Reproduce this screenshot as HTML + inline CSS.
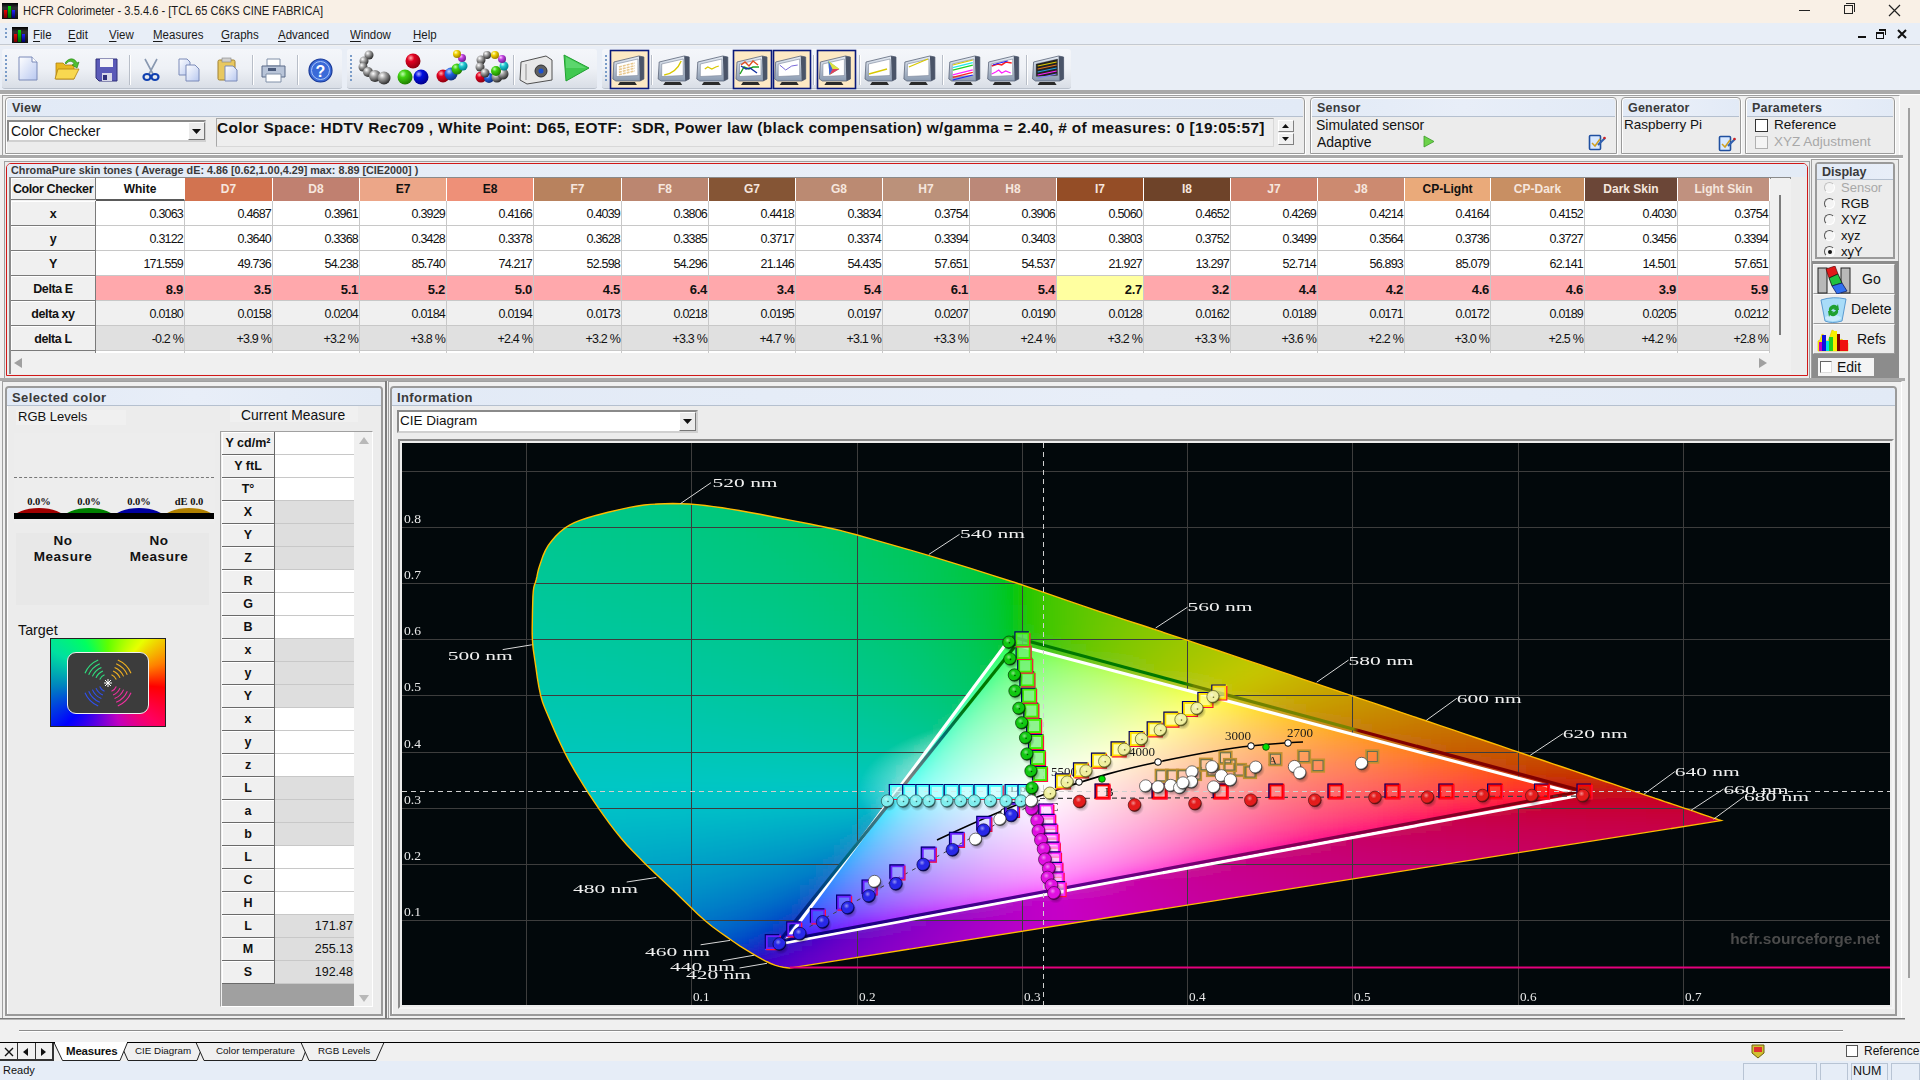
<!DOCTYPE html><html><head><meta charset="utf-8"><title>HCFR Colorimeter</title><style>
*{margin:0;padding:0;box-sizing:border-box}
html,body{width:1920px;height:1080px;overflow:hidden;background:#f0f0f0;font-family:"Liberation Sans",sans-serif;font-size:12px;color:#000;position:relative}
.a{position:absolute;white-space:nowrap}
.hdr{position:absolute;background:linear-gradient(#e4ecf7,#dfe8f5);border-bottom:1px solid #c9d3e0;font-weight:bold;color:#3c3c3c;font-size:12px;padding-left:6px;line-height:18px}
.grp{position:absolute;border:2px solid #a8a8a8;background:#ececec}
.cb{position:absolute;width:12px;height:12px;border:1px solid #333;background:#fff}
.tb td{border-right:1px solid #c8c8c8;border-bottom:1px solid #c8c8c8}
</style></head><body><div class="a" style="left:0;top:0;width:1920px;height:23px;background:#f9f0e6"></div><div class="a" style="left:2px;top:3px;width:16px;height:16px;background:linear-gradient(#000 0%,#333 30%,#111 100%)"><div class="a" style="left:2px;bottom:1px;width:3px;height:8px;background:linear-gradient(#e00,#700)"></div><div class="a" style="left:6px;bottom:1px;width:3px;height:12px;background:linear-gradient(#0d0,#060)"></div><div class="a" style="left:10px;bottom:1px;width:3px;height:8px;background:linear-gradient(#22f,#006)"></div></div><div class="a" style="left:23px;top:4px;font-size:12.5px;color:#1a1a1a;transform:scaleX(0.89);transform-origin:0 0">HCFR Colorimeter - 3.5.4.6 - [TCL 65 C6KS CINE FABRICA]</div><div class="a" style="left:1799px;top:10px;width:11px;height:1px;background:#222"></div><div class="a" style="left:1844px;top:5px;width:9px;height:9px;border:1px solid #222"></div><div class="a" style="left:1846px;top:3px;width:9px;height:9px;border-top:1px solid #222;border-right:1px solid #222"></div><svg class="a" style="left:1888px;top:4px" width="13" height="13"><path d="M1 1L12 12M12 1L1 12" stroke="#222" stroke-width="1.2"/></svg><div class="a" style="left:0;top:23px;width:1920px;height:22px;background:#e8eef7;border-bottom:1px solid #c4c9d0"></div><div class="a" style="left:5px;top:28px;width:2px;height:12px;background:repeating-linear-gradient(#7a9cc8 0 2px,transparent 2px 4px)"></div><div class="a" style="left:12px;top:27px;width:16px;height:16px;background:linear-gradient(#000 0%,#333 30%,#111 100%)"><div class="a" style="left:2px;bottom:1px;width:3px;height:8px;background:linear-gradient(#e00,#700)"></div><div class="a" style="left:6px;bottom:1px;width:3px;height:12px;background:linear-gradient(#0d0,#060)"></div><div class="a" style="left:10px;bottom:1px;width:3px;height:8px;background:linear-gradient(#22f,#006)"></div></div><div class="a" style="left:33px;top:28px;font-size:12.5px;color:#1a1a1a;transform:scaleX(0.92);transform-origin:0 0"><u style="text-decoration-thickness:1px;text-underline-offset:2px">F</u>ile</div><div class="a" style="left:68px;top:28px;font-size:12.5px;color:#1a1a1a;transform:scaleX(0.92);transform-origin:0 0"><u style="text-decoration-thickness:1px;text-underline-offset:2px">E</u>dit</div><div class="a" style="left:109px;top:28px;font-size:12.5px;color:#1a1a1a;transform:scaleX(0.92);transform-origin:0 0"><u style="text-decoration-thickness:1px;text-underline-offset:2px">V</u>iew</div><div class="a" style="left:153px;top:28px;font-size:12.5px;color:#1a1a1a;transform:scaleX(0.92);transform-origin:0 0"><u style="text-decoration-thickness:1px;text-underline-offset:2px">M</u>easures</div><div class="a" style="left:221px;top:28px;font-size:12.5px;color:#1a1a1a;transform:scaleX(0.92);transform-origin:0 0"><u style="text-decoration-thickness:1px;text-underline-offset:2px">G</u>raphs</div><div class="a" style="left:278px;top:28px;font-size:12.5px;color:#1a1a1a;transform:scaleX(0.92);transform-origin:0 0"><u style="text-decoration-thickness:1px;text-underline-offset:2px">A</u>dvanced</div><div class="a" style="left:350px;top:28px;font-size:12.5px;color:#1a1a1a;transform:scaleX(0.92);transform-origin:0 0"><u style="text-decoration-thickness:1px;text-underline-offset:2px">W</u>indow</div><div class="a" style="left:413px;top:28px;font-size:12.5px;color:#1a1a1a;transform:scaleX(0.92);transform-origin:0 0"><u style="text-decoration-thickness:1px;text-underline-offset:2px">H</u>elp</div><div class="a" style="left:1858px;top:36px;width:8px;height:2px;background:#111"></div><div class="a" style="left:1876px;top:32px;width:8px;height:7px;border:1px solid #111;border-top-width:2px"></div><div class="a" style="left:1879px;top:29px;width:7px;height:6px;border-top:2px solid #111;border-right:1px solid #111"></div><svg class="a" style="left:1897px;top:29px" width="10" height="10"><path d="M1 1L9 9M9 1L1 9" stroke="#111" stroke-width="2"/></svg><div class="a" style="left:0;top:46px;width:1920px;height:45px;background:#e9eef6"></div><div class="a" style="left:2px;top:49px;width:340px;height:40px;border-radius:3px;background:linear-gradient(#f4f6fa 0%,#eef1f6 50%,#d9dee6 100%);border-bottom:1px solid #b9c0cb"></div><div class="a" style="left:5px;top:55px;width:2px;height:28px;background:repeating-linear-gradient(#7a9cc8 0 2px,transparent 2px 4px)"></div><div class="a" style="left:347px;top:49px;width:250px;height:40px;border-radius:3px;background:linear-gradient(#f4f6fa 0%,#eef1f6 50%,#d9dee6 100%);border-bottom:1px solid #b9c0cb"></div><div class="a" style="left:350px;top:55px;width:2px;height:28px;background:repeating-linear-gradient(#7a9cc8 0 2px,transparent 2px 4px)"></div><div class="a" style="left:602px;top:49px;width:469px;height:40px;border-radius:3px;background:linear-gradient(#f4f6fa 0%,#eef1f6 50%,#d9dee6 100%);border-bottom:1px solid #b9c0cb"></div><div class="a" style="left:605px;top:55px;width:2px;height:28px;background:repeating-linear-gradient(#7a9cc8 0 2px,transparent 2px 4px)"></div><div class="a" style="left:0;top:90px;width:1920px;height:4px;background:#a9a9a9"></div><div class="a" style="left:0;top:94px;width:1920px;height:1px;background:#fff"></div><svg class="a" style="left:0;top:44px" width="1100" height="50" viewBox="0 44 1100 50"><defs><linearGradient id="tdoc" x1="0" y1="0" x2="1" y2="1"><stop offset="0" stop-color="#ffffff"/><stop offset="1" stop-color="#b8c8f0"/></linearGradient><linearGradient id="tbez" x1="0" y1="0" x2="0" y2="1"><stop offset="0" stop-color="#e8eef6"/><stop offset="1" stop-color="#8a9ab0"/></linearGradient><radialGradient id="bR" cx="0.35" cy="0.3" r="0.7"><stop offset="0" stop-color="#ffb0b0"/><stop offset="0.35" stop-color="#e00020"/><stop offset="1" stop-color="#900010"/></radialGradient><radialGradient id="bG" cx="0.35" cy="0.3" r="0.7"><stop offset="0" stop-color="#c0ffb0"/><stop offset="0.35" stop-color="#40d010"/><stop offset="1" stop-color="#208000"/></radialGradient><radialGradient id="bB" cx="0.35" cy="0.3" r="0.7"><stop offset="0" stop-color="#b0b0ff"/><stop offset="0.35" stop-color="#0010e0"/><stop offset="1" stop-color="#000090"/></radialGradient><radialGradient id="bK" cx="0.35" cy="0.3" r="0.7"><stop offset="0" stop-color="#ffffff"/><stop offset="0.4" stop-color="#a0a0a0"/><stop offset="1" stop-color="#303030"/></radialGradient><radialGradient id="bY" cx="0.35" cy="0.3" r="0.7"><stop offset="0" stop-color="#ffffc0"/><stop offset="0.4" stop-color="#f0d000"/><stop offset="1" stop-color="#a08000"/></radialGradient><radialGradient id="bM" cx="0.35" cy="0.3" r="0.7"><stop offset="0" stop-color="#ffd0ff"/><stop offset="0.4" stop-color="#c040e0"/><stop offset="1" stop-color="#702090"/></radialGradient><radialGradient id="bC" cx="0.35" cy="0.3" r="0.7"><stop offset="0" stop-color="#d0ffff"/><stop offset="0.4" stop-color="#20c8d0"/><stop offset="1" stop-color="#008090"/></radialGradient><radialGradient id="bBl" cx="0.35" cy="0.3" r="0.7"><stop offset="0" stop-color="#c0d8ff"/><stop offset="0.4" stop-color="#2060e0"/><stop offset="1" stop-color="#103080"/></radialGradient><g id="mon"><path d="M1 9L26 3L31 4V26L27 28H3L0 26Z" fill="url(#tbez)" stroke="#5a6478" stroke-width="0.8"/><path d="M3.5 11L25 6V22.5L3.5 23.5Z" fill="#ffffff" stroke="#7a8498" stroke-width="0.6"/><path d="M26 3L31 4V26L27 28Z" fill="#4a5468"/><path d="M7 29H22L24 32H5Z" fill="#2a2a2a"/></g></defs><rect x="610.5" y="50.5" width="38" height="38" fill="#fde9c4" stroke="#0a1a7a" stroke-width="1.6"/><rect x="733.5" y="50.5" width="38" height="38" fill="#fde9c4" stroke="#0a1a7a" stroke-width="1.6"/><rect x="773.5" y="50.5" width="37" height="38" fill="#fde9c4" stroke="#0a1a7a" stroke-width="1.6"/><rect x="817.5" y="50.5" width="38" height="38" fill="#fde9c4" stroke="#0a1a7a" stroke-width="1.6"/><path d="M129.5 55V85" stroke="#b8bec8" stroke-width="1"/><path d="M130.5 55V85" stroke="#ffffff" stroke-width="1"/><path d="M252.5 55V85" stroke="#b8bec8" stroke-width="1"/><path d="M253.5 55V85" stroke="#ffffff" stroke-width="1"/><path d="M297.5 55V85" stroke="#b8bec8" stroke-width="1"/><path d="M298.5 55V85" stroke="#ffffff" stroke-width="1"/><path d="M513.5 55V85" stroke="#b8bec8" stroke-width="1"/><path d="M514.5 55V85" stroke="#ffffff" stroke-width="1"/><path d="M651.5 55V85" stroke="#b8bec8" stroke-width="1"/><path d="M652.5 55V85" stroke="#ffffff" stroke-width="1"/><path d="M813.5 55V85" stroke="#b8bec8" stroke-width="1"/><path d="M814.5 55V85" stroke="#ffffff" stroke-width="1"/><path d="M859.5 55V85" stroke="#b8bec8" stroke-width="1"/><path d="M860.5 55V85" stroke="#ffffff" stroke-width="1"/><path d="M942.5 55V85" stroke="#b8bec8" stroke-width="1"/><path d="M943.5 55V85" stroke="#ffffff" stroke-width="1"/><path d="M1026.5 55V85" stroke="#b8bec8" stroke-width="1"/><path d="M1027.5 55V85" stroke="#ffffff" stroke-width="1"/><path d="M19 57H32L37 62V80H19Z" fill="url(#tdoc)" stroke="#7a8ab8" stroke-width="1"/><path d="M32 57V62H37" fill="#fff" stroke="#7a8ab8"/><path d="M56 63H63L65 65H74V79H56Z" fill="#e8b820" stroke="#b08010" stroke-width="0.8"/><path d="M58 69H79L74 79H55Z" fill="#f8d850" stroke="#b08010" stroke-width="0.8"/><path d="M65 63C69 57 75 58 77 63L79 62L77 68L72 65L74 64C73 61 69 60 66 64Z" fill="#50c030" stroke="#208010" stroke-width="0.6"/><path d="M96 59H117V81H99L96 78Z" fill="#5a5ab8" stroke="#30307a" stroke-width="1"/><rect x="100" y="59" width="13" height="8" fill="#f4f4f8"/><rect x="102" y="73" width="10" height="8" fill="#d8d8e8"/><rect x="103" y="75" width="4" height="5" fill="#30307a"/><path d="M145 59L153 74M157 59L149 74" stroke="#8898b0" stroke-width="1.6"/><ellipse cx="147" cy="77" rx="3.5" ry="3" fill="none" stroke="#1040b0" stroke-width="2.2"/><ellipse cx="155" cy="77" rx="3.5" ry="3" fill="none" stroke="#1040b0" stroke-width="2.2"/><path d="M179 59H187L190 62V75H179Z" fill="url(#tdoc)" stroke="#7a8ab8"/><path d="M186 65H195L199 69V81H186Z" fill="url(#tdoc)" stroke="#7a8ab8"/><rect x="218" y="60" width="17" height="20" rx="1.5" fill="#e8c860" stroke="#a08030"/><rect x="222" y="58" width="9" height="4" fill="#d0d0d0" stroke="#808080" stroke-width="0.6"/><path d="M225 66H233L237 70V81H225Z" fill="url(#tdoc)" stroke="#7a8ab8"/><path d="M267 59H280V66H267Z" fill="#fff" stroke="#8090a8"/><path d="M262 66H285V77H262Z" fill="#b8c4d8" stroke="#5a6a88"/><path d="M266 74H281V82H266Z" fill="#fff" stroke="#8090a8"/><rect x="268" y="68" width="8" height="3" fill="#4a5a7a"/><circle cx="320.5" cy="70.5" r="11.5" fill="#3a6ad8" stroke="#1a3a98" stroke-width="1.2"/><circle cx="320.5" cy="70.5" r="9" fill="none" stroke="#a8c4f8" stroke-width="1"/><text x="320.5" y="76.5" text-anchor="middle" font-family="Liberation Sans" font-weight="bold" font-size="16" fill="#fff">?</text><circle cx="369" cy="55" r="4.5" fill="url(#bK)"/><circle cx="364" cy="61" r="4.5" fill="url(#bK)"/><circle cx="363" cy="67" r="4.5" fill="url(#bK)"/><circle cx="368" cy="72" r="5" fill="url(#bK)"/><circle cx="375" cy="76" r="6" fill="url(#bK)"/><circle cx="384" cy="78" r="6.5" fill="url(#bK)"/><circle cx="413" cy="61" r="7.5" fill="url(#bR)"/><circle cx="405" cy="77" r="7.5" fill="url(#bG)"/><circle cx="421" cy="77" r="7.5" fill="url(#bB)"/><circle cx="443" cy="76" r="6.5" fill="url(#bR)"/><circle cx="451" cy="74" r="6.5" fill="url(#bBl)"/><circle cx="457" cy="69" r="5.5" fill="url(#bG)"/><circle cx="463" cy="66" r="4.5" fill="url(#bC)"/><circle cx="462" cy="58" r="4" fill="url(#bM)"/><circle cx="457" cy="54" r="4" fill="url(#bY)"/><circle cx="481" cy="77" r="5.5" fill="url(#bR)"/><circle cx="489" cy="78" r="5" fill="url(#bBl)"/><circle cx="497" cy="77" r="5.5" fill="url(#bK)"/><circle cx="503" cy="74" r="5.5" fill="url(#bK)"/><circle cx="504" cy="66" r="4.5" fill="url(#bC)"/><circle cx="502" cy="59" r="4" fill="url(#bM)"/><circle cx="495" cy="55" r="4" fill="url(#bY)"/><circle cx="487" cy="55" r="4" fill="url(#bK)"/><circle cx="481" cy="60" r="4.5" fill="url(#bK)"/><circle cx="480" cy="67" r="4.5" fill="url(#bK)"/><circle cx="485" cy="73" r="4.5" fill="url(#bK)"/><circle cx="496" cy="71" r="5" fill="url(#bG)"/><path d="M521 62L546 56L552 60V80L527 84L520 80Z" fill="#e8e8e8" stroke="#505050" stroke-width="1"/><path d="M526 64V80" stroke="#909090"/><circle cx="541" cy="71" r="6" fill="#606060" stroke="#303030"/><circle cx="541" cy="71" r="2.5" fill="#1a50d0"/><path d="M564 55L589 68L566 81Z" fill="#40c850" stroke="#20a030" stroke-width="1"/><path d="M566 57L586 68L566 68Z" fill="#70e080" opacity="0.6"/><use href="#mon" x="612.9" y="53"/><path d="M618.9 67.0L634.9 63.0" stroke="#e8c890" stroke-width="1.6" stroke-dasharray="3 1"/><path d="M618.9 69.6L634.9 65.6" stroke="#e8c890" stroke-width="1.6" stroke-dasharray="3 1"/><path d="M618.9 72.2L634.9 68.2" stroke="#e8c890" stroke-width="1.6" stroke-dasharray="3 1"/><path d="M618.9 74.8L634.9 70.8" stroke="#e8c890" stroke-width="1.6" stroke-dasharray="3 1"/><use href="#mon" x="658.2" y="53"/><path d="M664.2 75Q676.2 73 681.2 61" stroke="#d8c800" stroke-width="1.4" fill="none"/><use href="#mon" x="696.8" y="53"/><path d="M704.8 69L707.8 67L711.8 69L715.8 67L718.8 66" stroke="#d8c800" stroke-width="1.3" fill="none"/><use href="#mon" x="736" y="53"/><path d="M741 65L745 62L749 66L753 61L758 65" stroke="#e05020" stroke-width="1.4" fill="none"/><path d="M740 74L744 67L749 69L753 67L759 67" stroke="#20a020" stroke-width="1.4" fill="none"/><path d="M741 66L746 69L750 68L757 73" stroke="#1030a0" stroke-width="1.4" fill="none"/><use href="#mon" x="774.7" y="53"/><path d="M779.7 65L785.7 70L791.7 66L797.7 65" stroke="#7a6ad8" stroke-width="1" fill="none"/><use href="#mon" x="819.4" y="53"/><path d="M828.4 61L839.4 69L829.4 75Z" fill="#60d060"/><path d="M828.4 61L839.4 69L832.4 69Z" fill="#e0e040"/><path d="M832.4 69L839.4 69L829.4 75Z" fill="#e04060"/><path d="M828.4 61L832.4 69L829.4 75Z" fill="#4060e0"/><use href="#mon" x="865" y="53"/><path d="M869 74L887 69" stroke="#d8c800" stroke-width="1.3"/><use href="#mon" x="903.9" y="53"/><path d="M908.9 67L927.9 59" stroke="#d8c800" stroke-width="1.3"/><use href="#mon" x="948.8" y="53"/><path d="M952.8 65.0L972.8 60.0" stroke="#d8c800" stroke-width="1.2"/><path d="M952.8 67.6L972.8 62.6" stroke="#20e8f0" stroke-width="1.2"/><path d="M952.8 70.2L972.8 65.2" stroke="#20d020" stroke-width="1.2"/><path d="M952.8 74.8L972.8 69.8" stroke="#ff20ff" stroke-width="1.2"/><path d="M952.8 77.4L972.8 72.4" stroke="#ff2020" stroke-width="1.2"/><path d="M952.8 80.0L972.8 75.0" stroke="#2020ff" stroke-width="1.2"/><use href="#mon" x="987.7" y="53"/><path d="M991.7 66L997.7 64L1001.7 65L1005.7 62L1011.7 63" stroke="#ff2020" stroke-width="1.6" fill="none"/><path d="M992.7 65L999.7 63L1007.7 61" stroke="#2020ff" stroke-width="1" fill="none"/><path d="M991.7 74L995.7 72L998.7 70L1001.7 73L1005.7 71L1010.7 73" stroke="#ff20ff" stroke-width="1.3" fill="none"/><use href="#mon" x="1032.6" y="53"/><path d="M3.5 11L25 6V22.5L3.5 23.5Z" transform="translate(1032.6 53)" fill="#222"/><path d="M1037.6 66L1056.6 62" stroke="#d8c800" stroke-width="1.2"/><path d="M1037.6 69L1056.6 65" stroke="#e07020" stroke-width="1.2"/><path d="M1037.6 72L1056.6 68" stroke="#20a0e0" stroke-width="1.2"/><path d="M1037.6 75L1056.6 71" stroke="#ff20ff" stroke-width="1.2"/><path d="M1037.6 78L1056.6 74" stroke="#8080ff" stroke-width="1.2"/></svg><div class="a" style="left:2px;top:95px;width:1898px;height:61px;border:1px solid #a0a0a0;border-right-color:#fff;border-bottom-color:#fff"></div><div class="a" style="left:5px;top:97px;width:1300px;height:57px;border:1px solid #9a9a9a;border-radius:4px 4px 0 0;background:#ececec;box-shadow:inset 1px 1px 0 #fff, 1px 1px 0 #fff"></div><div class="a" style="left:7px;top:99px;width:1296px;height:18px;background:linear-gradient(90deg,#e2eaf6,#e8eef8 50%,#e2eaf6);border-bottom:1px solid #b5c0cf;border-radius:3px 3px 0 0"></div><div class="a" style="left:12px;top:101px;font-weight:bold;font-size:12.5px;color:#3a3a3a;letter-spacing:0.2px">View</div><div class="a" style="left:7px;top:120px;width:199px;height:22px;border:2px solid #8a8a8a;border-right-color:#d0d0d0;border-bottom-color:#d0d0d0;background:#fff"></div><div class="a" style="left:11px;top:123px;font-size:14px;color:#111">Color Checker</div><div class="a" style="left:188px;top:122px;width:17px;height:18px;background:#ececec;border:1px solid #fff;border-right-color:#777;border-bottom-color:#777"></div><svg class="a" style="left:192px;top:129px" width="9" height="5"><path d="M0 0H9L4.5 5Z" fill="#111"/></svg><div class="a" style="left:216px;top:118px;width:1058px;height:29px;border:1px solid #d8d8d8;border-left-color:#a8a8a8;border-top-color:#a8a8a8;background:#eeeeee"></div><div class="a" style="left:217px;top:119px;font-size:15.4px;font-weight:bold;color:#111;letter-spacing:0.33px">Color Space: HDTV Rec709 , White Point: D65, EOTF:&nbsp; SDR, Power law (black compensation) w/gamma = 2.40, # of measures: 0 [19:05:57]</div><div class="a" style="left:1278px;top:120px;width:16px;height:12px;background:#f0f0f0;border:1px solid #fff;border-right-color:#808080;border-bottom-color:#808080"></div><div class="a" style="left:1278px;top:133px;width:16px;height:12px;background:#f0f0f0;border:1px solid #fff;border-right-color:#808080;border-bottom-color:#808080"></div><svg class="a" style="left:1282px;top:124px" width="7" height="4"><path d="M0 4H7L3.5 0Z" fill="#111"/></svg><svg class="a" style="left:1282px;top:137px" width="7" height="4"><path d="M0 0H7L3.5 4Z" fill="#111"/></svg><div class="a" style="left:1310px;top:97px;width:307px;height:57px;border:1px solid #9a9a9a;border-radius:4px 4px 0 0;background:#ececec;box-shadow:inset 1px 1px 0 #fff, 1px 1px 0 #fff"></div><div class="a" style="left:1312px;top:99px;width:303px;height:18px;background:linear-gradient(90deg,#e2eaf6,#e8eef8 50%,#e2eaf6);border-bottom:1px solid #b5c0cf;border-radius:3px 3px 0 0"></div><div class="a" style="left:1317px;top:101px;font-weight:bold;font-size:12.5px;color:#3a3a3a;letter-spacing:0.2px">Sensor</div><div class="a" style="left:1316px;top:117px;font-size:14px;color:#111">Simulated sensor</div><div class="a" style="left:1317px;top:134px;font-size:14px;color:#111">Adaptive</div><svg class="a" style="left:1423px;top:135px" width="12" height="13"><path d="M1 1L11 6.5L1 12Z" fill="#6cd24a" stroke="#3c9a2a" stroke-width="0.8"/></svg><svg class="a" style="left:1588px;top:133px" width="18" height="18"><rect x="1.5" y="2.5" width="11" height="14" rx="1" fill="#d8e8ff" stroke="#2050a0" stroke-width="1.6"/><path d="M4 10l3 3 5-7" stroke="#d0a020" stroke-width="1.5" fill="none"/><path d="M10 12L17 5" stroke="#3060b0" stroke-width="2"/><circle cx="16.5" cy="5" r="1.3" fill="#d02020"/></svg><div class="a" style="left:1621px;top:97px;width:120px;height:57px;border:1px solid #9a9a9a;border-radius:4px 4px 0 0;background:#ececec;box-shadow:inset 1px 1px 0 #fff, 1px 1px 0 #fff"></div><div class="a" style="left:1623px;top:99px;width:116px;height:18px;background:linear-gradient(90deg,#e2eaf6,#e8eef8 50%,#e2eaf6);border-bottom:1px solid #b5c0cf;border-radius:3px 3px 0 0"></div><div class="a" style="left:1628px;top:101px;font-weight:bold;font-size:12.5px;color:#3a3a3a;letter-spacing:0.2px">Generator</div><div class="a" style="left:1624px;top:117px;font-size:13.5px;color:#111">Raspberry Pi</div><svg class="a" style="left:1718px;top:134px" width="18" height="18"><rect x="1.5" y="2.5" width="11" height="14" rx="1" fill="#d8e8ff" stroke="#2050a0" stroke-width="1.6"/><path d="M4 10l3 3 5-7" stroke="#d0a020" stroke-width="1.5" fill="none"/><path d="M10 12L17 5" stroke="#3060b0" stroke-width="2"/><circle cx="16.5" cy="5" r="1.3" fill="#d02020"/></svg><div class="a" style="left:1745px;top:97px;width:150px;height:57px;border:1px solid #9a9a9a;border-radius:4px 4px 0 0;background:#ececec;box-shadow:inset 1px 1px 0 #fff, 1px 1px 0 #fff"></div><div class="a" style="left:1747px;top:99px;width:146px;height:18px;background:linear-gradient(90deg,#e2eaf6,#e8eef8 50%,#e2eaf6);border-bottom:1px solid #b5c0cf;border-radius:3px 3px 0 0"></div><div class="a" style="left:1752px;top:101px;font-weight:bold;font-size:12.5px;color:#3a3a3a;letter-spacing:0.2px">Parameters</div><div class="cb" style="left:1755px;top:119px;width:13px;height:13px;border-color:#333"></div><div class="a" style="left:1774px;top:117px;font-size:13.5px;color:#111">Reference</div><div class="cb" style="left:1755px;top:136px;width:13px;height:13px;border-color:#b0b0b0;background:#f4f4f4"></div><div class="a" style="left:1774px;top:134px;font-size:13.5px;color:#a8a8a8">XYZ Adjustment</div><div class="a" style="left:1908px;top:108px;width:2px;height:870px;background:#a0a0a0"></div><div class="a" style="left:0;top:155px;width:1903px;height:4px;background:#a9a9a9;border-bottom:1px solid #fff"></div><div class="a" style="left:4px;top:161px;width:1806px;height:218px;border:1px solid #a0a0a0;background:#ececec"></div><div class="a" style="left:6px;top:163px;width:1802px;height:213px;border:1px solid #d01818;border-radius:5px 5px 0 0;background:#ececec"></div><div class="a" style="left:7px;top:164px;width:1800px;height:13px;background:linear-gradient(90deg,#e3ebf6,#e9eff8 50%,#e3ebf6);border-radius:4px 4px 0 0"></div><div class="a" style="left:11px;top:164px;font-weight:bold;font-size:10.8px;color:#3a3a3a;line-height:13px">ChromaPure skin tones ( Average dE: 4.86 [0.62,1.00,4.29] max: 8.89 [CIE2000] )</div><div class="a" style="left:9px;top:177px;width:1782px;height:197px;background:#f0f0f0;border-top:2px solid #8a8a8a;border-left:2px solid #8a8a8a"></div><div class="a" style="left:11px;top:178px;width:85px;height:22px;background:#f0f0f0;border-right:1px solid #7a7a7a;border-bottom:1px solid #7a7a7a;box-shadow:inset 1px 1px 0 #fff;font-weight:bold;font-size:12.5px;letter-spacing:-0.4px;text-align:center;line-height:23px;color:#111">Color Checker</div><div class="a" style="left:96px;top:178px;width:89px;height:23px;background:#ffffff;border-right:1px solid #fff;border-bottom:2px solid #5a5a5a;font-weight:bold;font-size:12px;text-align:center;line-height:22px;color:#111">White</div><div class="a" style="left:185px;top:178px;width:88px;height:23px;background:#d27350;border-right:1px solid #fff;font-weight:bold;font-size:12px;text-align:center;line-height:22px;color:#f6e6de">D7</div><div class="a" style="left:273px;top:178px;width:87px;height:23px;background:#c08070;border-right:1px solid #fff;font-weight:bold;font-size:12px;text-align:center;line-height:22px;color:#f6e6de">D8</div><div class="a" style="left:360px;top:178px;width:87px;height:23px;background:#eca688;border-right:1px solid #fff;font-weight:bold;font-size:12px;text-align:center;line-height:22px;color:#111">E7</div><div class="a" style="left:447px;top:178px;width:87px;height:23px;background:#ee9078;border-right:1px solid #fff;font-weight:bold;font-size:12px;text-align:center;line-height:22px;color:#111">E8</div><div class="a" style="left:534px;top:178px;width:88px;height:23px;background:#b8825e;border-right:1px solid #fff;font-weight:bold;font-size:12px;text-align:center;line-height:22px;color:#f6e6de">F7</div><div class="a" style="left:622px;top:178px;width:87px;height:23px;background:#bb8670;border-right:1px solid #fff;font-weight:bold;font-size:12px;text-align:center;line-height:22px;color:#f6e6de">F8</div><div class="a" style="left:709px;top:178px;width:87px;height:23px;background:#855535;border-right:1px solid #fff;font-weight:bold;font-size:12px;text-align:center;line-height:22px;color:#f6e6de">G7</div><div class="a" style="left:796px;top:178px;width:87px;height:23px;background:#bb8a72;border-right:1px solid #fff;font-weight:bold;font-size:12px;text-align:center;line-height:22px;color:#f6e6de">G8</div><div class="a" style="left:883px;top:178px;width:87px;height:23px;background:#bb917a;border-right:1px solid #fff;font-weight:bold;font-size:12px;text-align:center;line-height:22px;color:#f6e6de">H7</div><div class="a" style="left:970px;top:178px;width:87px;height:23px;background:#bb8878;border-right:1px solid #fff;font-weight:bold;font-size:12px;text-align:center;line-height:22px;color:#f6e6de">H8</div><div class="a" style="left:1057px;top:178px;width:87px;height:23px;background:#944d26;border-right:1px solid #fff;font-weight:bold;font-size:12px;text-align:center;line-height:22px;color:#f6e6de">I7</div><div class="a" style="left:1144px;top:178px;width:87px;height:23px;background:#6e4329;border-right:1px solid #fff;font-weight:bold;font-size:12px;text-align:center;line-height:22px;color:#f6e6de">I8</div><div class="a" style="left:1231px;top:178px;width:87px;height:23px;background:#cc806a;border-right:1px solid #fff;font-weight:bold;font-size:12px;text-align:center;line-height:22px;color:#f6e6de">J7</div><div class="a" style="left:1318px;top:178px;width:87px;height:23px;background:#cc8a70;border-right:1px solid #fff;font-weight:bold;font-size:12px;text-align:center;line-height:22px;color:#f6e6de">J8</div><div class="a" style="left:1405px;top:178px;width:86px;height:23px;background:#eaaa7a;border-right:1px solid #fff;font-weight:bold;font-size:12px;text-align:center;line-height:22px;color:#111">CP-Light</div><div class="a" style="left:1491px;top:178px;width:94px;height:23px;background:#c88f63;border-right:1px solid #fff;font-weight:bold;font-size:12px;text-align:center;line-height:22px;color:#f6e6de">CP-Dark</div><div class="a" style="left:1585px;top:178px;width:93px;height:23px;background:#6b4637;border-right:1px solid #fff;font-weight:bold;font-size:12px;text-align:center;line-height:22px;color:#f6e6de">Dark Skin</div><div class="a" style="left:1678px;top:178px;width:92px;height:23px;background:#c0917f;border-right:1px solid #fff;font-weight:bold;font-size:12px;text-align:center;line-height:22px;color:#f6e6de">Light Skin</div><div class="a" style="left:11px;top:201px;width:85px;height:25px;background:#f0f0f0;border-right:1px solid #7a7a7a;border-bottom:1px solid #7a7a7a;box-shadow:inset 1px 1px 0 #fff;font-weight:bold;font-size:12.5px;letter-spacing:-0.4px;text-align:center;line-height:26px;color:#111">x</div><div class="a" style="left:96px;top:201px;width:1674px;height:25px;background:#ffffff"></div><div class="a" style="left:96px;top:201px;width:89px;height:25px;border-right:1px solid #c8c8c8;border-bottom:1px solid #c8c8c8;text-align:right;padding-right:1px;line-height:27px;font-size:12.5px;letter-spacing:-0.8px;color:#111">0.3063</div><div class="a" style="left:185px;top:201px;width:88px;height:25px;border-right:1px solid #c8c8c8;border-bottom:1px solid #c8c8c8;text-align:right;padding-right:1px;line-height:27px;font-size:12.5px;letter-spacing:-0.8px;color:#111">0.4687</div><div class="a" style="left:273px;top:201px;width:87px;height:25px;border-right:1px solid #c8c8c8;border-bottom:1px solid #c8c8c8;text-align:right;padding-right:1px;line-height:27px;font-size:12.5px;letter-spacing:-0.8px;color:#111">0.3961</div><div class="a" style="left:360px;top:201px;width:87px;height:25px;border-right:1px solid #c8c8c8;border-bottom:1px solid #c8c8c8;text-align:right;padding-right:1px;line-height:27px;font-size:12.5px;letter-spacing:-0.8px;color:#111">0.3929</div><div class="a" style="left:447px;top:201px;width:87px;height:25px;border-right:1px solid #c8c8c8;border-bottom:1px solid #c8c8c8;text-align:right;padding-right:1px;line-height:27px;font-size:12.5px;letter-spacing:-0.8px;color:#111">0.4166</div><div class="a" style="left:534px;top:201px;width:88px;height:25px;border-right:1px solid #c8c8c8;border-bottom:1px solid #c8c8c8;text-align:right;padding-right:1px;line-height:27px;font-size:12.5px;letter-spacing:-0.8px;color:#111">0.4039</div><div class="a" style="left:622px;top:201px;width:87px;height:25px;border-right:1px solid #c8c8c8;border-bottom:1px solid #c8c8c8;text-align:right;padding-right:1px;line-height:27px;font-size:12.5px;letter-spacing:-0.8px;color:#111">0.3806</div><div class="a" style="left:709px;top:201px;width:87px;height:25px;border-right:1px solid #c8c8c8;border-bottom:1px solid #c8c8c8;text-align:right;padding-right:1px;line-height:27px;font-size:12.5px;letter-spacing:-0.8px;color:#111">0.4418</div><div class="a" style="left:796px;top:201px;width:87px;height:25px;border-right:1px solid #c8c8c8;border-bottom:1px solid #c8c8c8;text-align:right;padding-right:1px;line-height:27px;font-size:12.5px;letter-spacing:-0.8px;color:#111">0.3834</div><div class="a" style="left:883px;top:201px;width:87px;height:25px;border-right:1px solid #c8c8c8;border-bottom:1px solid #c8c8c8;text-align:right;padding-right:1px;line-height:27px;font-size:12.5px;letter-spacing:-0.8px;color:#111">0.3754</div><div class="a" style="left:970px;top:201px;width:87px;height:25px;border-right:1px solid #c8c8c8;border-bottom:1px solid #c8c8c8;text-align:right;padding-right:1px;line-height:27px;font-size:12.5px;letter-spacing:-0.8px;color:#111">0.3906</div><div class="a" style="left:1057px;top:201px;width:87px;height:25px;border-right:1px solid #c8c8c8;border-bottom:1px solid #c8c8c8;text-align:right;padding-right:1px;line-height:27px;font-size:12.5px;letter-spacing:-0.8px;color:#111">0.5060</div><div class="a" style="left:1144px;top:201px;width:87px;height:25px;border-right:1px solid #c8c8c8;border-bottom:1px solid #c8c8c8;text-align:right;padding-right:1px;line-height:27px;font-size:12.5px;letter-spacing:-0.8px;color:#111">0.4652</div><div class="a" style="left:1231px;top:201px;width:87px;height:25px;border-right:1px solid #c8c8c8;border-bottom:1px solid #c8c8c8;text-align:right;padding-right:1px;line-height:27px;font-size:12.5px;letter-spacing:-0.8px;color:#111">0.4269</div><div class="a" style="left:1318px;top:201px;width:87px;height:25px;border-right:1px solid #c8c8c8;border-bottom:1px solid #c8c8c8;text-align:right;padding-right:1px;line-height:27px;font-size:12.5px;letter-spacing:-0.8px;color:#111">0.4214</div><div class="a" style="left:1405px;top:201px;width:86px;height:25px;border-right:1px solid #c8c8c8;border-bottom:1px solid #c8c8c8;text-align:right;padding-right:1px;line-height:27px;font-size:12.5px;letter-spacing:-0.8px;color:#111">0.4164</div><div class="a" style="left:1491px;top:201px;width:94px;height:25px;border-right:1px solid #c8c8c8;border-bottom:1px solid #c8c8c8;text-align:right;padding-right:1px;line-height:27px;font-size:12.5px;letter-spacing:-0.8px;color:#111">0.4152</div><div class="a" style="left:1585px;top:201px;width:93px;height:25px;border-right:1px solid #c8c8c8;border-bottom:1px solid #c8c8c8;text-align:right;padding-right:1px;line-height:27px;font-size:12.5px;letter-spacing:-0.8px;color:#111">0.4030</div><div class="a" style="left:1678px;top:201px;width:92px;height:25px;border-right:1px solid #c8c8c8;border-bottom:1px solid #c8c8c8;text-align:right;padding-right:1px;line-height:27px;font-size:12.5px;letter-spacing:-0.8px;color:#111">0.3754</div><div class="a" style="left:11px;top:226px;width:85px;height:25px;background:#f0f0f0;border-right:1px solid #7a7a7a;border-bottom:1px solid #7a7a7a;box-shadow:inset 1px 1px 0 #fff;font-weight:bold;font-size:12.5px;letter-spacing:-0.4px;text-align:center;line-height:26px;color:#111">y</div><div class="a" style="left:96px;top:226px;width:1674px;height:25px;background:#ffffff"></div><div class="a" style="left:96px;top:226px;width:89px;height:25px;border-right:1px solid #c8c8c8;border-bottom:1px solid #c8c8c8;text-align:right;padding-right:1px;line-height:27px;font-size:12.5px;letter-spacing:-0.8px;color:#111">0.3122</div><div class="a" style="left:185px;top:226px;width:88px;height:25px;border-right:1px solid #c8c8c8;border-bottom:1px solid #c8c8c8;text-align:right;padding-right:1px;line-height:27px;font-size:12.5px;letter-spacing:-0.8px;color:#111">0.3640</div><div class="a" style="left:273px;top:226px;width:87px;height:25px;border-right:1px solid #c8c8c8;border-bottom:1px solid #c8c8c8;text-align:right;padding-right:1px;line-height:27px;font-size:12.5px;letter-spacing:-0.8px;color:#111">0.3368</div><div class="a" style="left:360px;top:226px;width:87px;height:25px;border-right:1px solid #c8c8c8;border-bottom:1px solid #c8c8c8;text-align:right;padding-right:1px;line-height:27px;font-size:12.5px;letter-spacing:-0.8px;color:#111">0.3428</div><div class="a" style="left:447px;top:226px;width:87px;height:25px;border-right:1px solid #c8c8c8;border-bottom:1px solid #c8c8c8;text-align:right;padding-right:1px;line-height:27px;font-size:12.5px;letter-spacing:-0.8px;color:#111">0.3378</div><div class="a" style="left:534px;top:226px;width:88px;height:25px;border-right:1px solid #c8c8c8;border-bottom:1px solid #c8c8c8;text-align:right;padding-right:1px;line-height:27px;font-size:12.5px;letter-spacing:-0.8px;color:#111">0.3628</div><div class="a" style="left:622px;top:226px;width:87px;height:25px;border-right:1px solid #c8c8c8;border-bottom:1px solid #c8c8c8;text-align:right;padding-right:1px;line-height:27px;font-size:12.5px;letter-spacing:-0.8px;color:#111">0.3385</div><div class="a" style="left:709px;top:226px;width:87px;height:25px;border-right:1px solid #c8c8c8;border-bottom:1px solid #c8c8c8;text-align:right;padding-right:1px;line-height:27px;font-size:12.5px;letter-spacing:-0.8px;color:#111">0.3717</div><div class="a" style="left:796px;top:226px;width:87px;height:25px;border-right:1px solid #c8c8c8;border-bottom:1px solid #c8c8c8;text-align:right;padding-right:1px;line-height:27px;font-size:12.5px;letter-spacing:-0.8px;color:#111">0.3374</div><div class="a" style="left:883px;top:226px;width:87px;height:25px;border-right:1px solid #c8c8c8;border-bottom:1px solid #c8c8c8;text-align:right;padding-right:1px;line-height:27px;font-size:12.5px;letter-spacing:-0.8px;color:#111">0.3394</div><div class="a" style="left:970px;top:226px;width:87px;height:25px;border-right:1px solid #c8c8c8;border-bottom:1px solid #c8c8c8;text-align:right;padding-right:1px;line-height:27px;font-size:12.5px;letter-spacing:-0.8px;color:#111">0.3403</div><div class="a" style="left:1057px;top:226px;width:87px;height:25px;border-right:1px solid #c8c8c8;border-bottom:1px solid #c8c8c8;text-align:right;padding-right:1px;line-height:27px;font-size:12.5px;letter-spacing:-0.8px;color:#111">0.3803</div><div class="a" style="left:1144px;top:226px;width:87px;height:25px;border-right:1px solid #c8c8c8;border-bottom:1px solid #c8c8c8;text-align:right;padding-right:1px;line-height:27px;font-size:12.5px;letter-spacing:-0.8px;color:#111">0.3752</div><div class="a" style="left:1231px;top:226px;width:87px;height:25px;border-right:1px solid #c8c8c8;border-bottom:1px solid #c8c8c8;text-align:right;padding-right:1px;line-height:27px;font-size:12.5px;letter-spacing:-0.8px;color:#111">0.3499</div><div class="a" style="left:1318px;top:226px;width:87px;height:25px;border-right:1px solid #c8c8c8;border-bottom:1px solid #c8c8c8;text-align:right;padding-right:1px;line-height:27px;font-size:12.5px;letter-spacing:-0.8px;color:#111">0.3564</div><div class="a" style="left:1405px;top:226px;width:86px;height:25px;border-right:1px solid #c8c8c8;border-bottom:1px solid #c8c8c8;text-align:right;padding-right:1px;line-height:27px;font-size:12.5px;letter-spacing:-0.8px;color:#111">0.3736</div><div class="a" style="left:1491px;top:226px;width:94px;height:25px;border-right:1px solid #c8c8c8;border-bottom:1px solid #c8c8c8;text-align:right;padding-right:1px;line-height:27px;font-size:12.5px;letter-spacing:-0.8px;color:#111">0.3727</div><div class="a" style="left:1585px;top:226px;width:93px;height:25px;border-right:1px solid #c8c8c8;border-bottom:1px solid #c8c8c8;text-align:right;padding-right:1px;line-height:27px;font-size:12.5px;letter-spacing:-0.8px;color:#111">0.3456</div><div class="a" style="left:1678px;top:226px;width:92px;height:25px;border-right:1px solid #c8c8c8;border-bottom:1px solid #c8c8c8;text-align:right;padding-right:1px;line-height:27px;font-size:12.5px;letter-spacing:-0.8px;color:#111">0.3394</div><div class="a" style="left:11px;top:251px;width:85px;height:25px;background:#f0f0f0;border-right:1px solid #7a7a7a;border-bottom:1px solid #7a7a7a;box-shadow:inset 1px 1px 0 #fff;font-weight:bold;font-size:12.5px;letter-spacing:-0.4px;text-align:center;line-height:26px;color:#111">Y</div><div class="a" style="left:96px;top:251px;width:1674px;height:25px;background:#ffffff"></div><div class="a" style="left:96px;top:251px;width:89px;height:25px;border-right:1px solid #c8c8c8;border-bottom:1px solid #c8c8c8;text-align:right;padding-right:1px;line-height:27px;font-size:12.5px;letter-spacing:-0.8px;color:#111">171.559</div><div class="a" style="left:185px;top:251px;width:88px;height:25px;border-right:1px solid #c8c8c8;border-bottom:1px solid #c8c8c8;text-align:right;padding-right:1px;line-height:27px;font-size:12.5px;letter-spacing:-0.8px;color:#111">49.736</div><div class="a" style="left:273px;top:251px;width:87px;height:25px;border-right:1px solid #c8c8c8;border-bottom:1px solid #c8c8c8;text-align:right;padding-right:1px;line-height:27px;font-size:12.5px;letter-spacing:-0.8px;color:#111">54.238</div><div class="a" style="left:360px;top:251px;width:87px;height:25px;border-right:1px solid #c8c8c8;border-bottom:1px solid #c8c8c8;text-align:right;padding-right:1px;line-height:27px;font-size:12.5px;letter-spacing:-0.8px;color:#111">85.740</div><div class="a" style="left:447px;top:251px;width:87px;height:25px;border-right:1px solid #c8c8c8;border-bottom:1px solid #c8c8c8;text-align:right;padding-right:1px;line-height:27px;font-size:12.5px;letter-spacing:-0.8px;color:#111">74.217</div><div class="a" style="left:534px;top:251px;width:88px;height:25px;border-right:1px solid #c8c8c8;border-bottom:1px solid #c8c8c8;text-align:right;padding-right:1px;line-height:27px;font-size:12.5px;letter-spacing:-0.8px;color:#111">52.598</div><div class="a" style="left:622px;top:251px;width:87px;height:25px;border-right:1px solid #c8c8c8;border-bottom:1px solid #c8c8c8;text-align:right;padding-right:1px;line-height:27px;font-size:12.5px;letter-spacing:-0.8px;color:#111">54.296</div><div class="a" style="left:709px;top:251px;width:87px;height:25px;border-right:1px solid #c8c8c8;border-bottom:1px solid #c8c8c8;text-align:right;padding-right:1px;line-height:27px;font-size:12.5px;letter-spacing:-0.8px;color:#111">21.146</div><div class="a" style="left:796px;top:251px;width:87px;height:25px;border-right:1px solid #c8c8c8;border-bottom:1px solid #c8c8c8;text-align:right;padding-right:1px;line-height:27px;font-size:12.5px;letter-spacing:-0.8px;color:#111">54.435</div><div class="a" style="left:883px;top:251px;width:87px;height:25px;border-right:1px solid #c8c8c8;border-bottom:1px solid #c8c8c8;text-align:right;padding-right:1px;line-height:27px;font-size:12.5px;letter-spacing:-0.8px;color:#111">57.651</div><div class="a" style="left:970px;top:251px;width:87px;height:25px;border-right:1px solid #c8c8c8;border-bottom:1px solid #c8c8c8;text-align:right;padding-right:1px;line-height:27px;font-size:12.5px;letter-spacing:-0.8px;color:#111">54.537</div><div class="a" style="left:1057px;top:251px;width:87px;height:25px;border-right:1px solid #c8c8c8;border-bottom:1px solid #c8c8c8;text-align:right;padding-right:1px;line-height:27px;font-size:12.5px;letter-spacing:-0.8px;color:#111">21.927</div><div class="a" style="left:1144px;top:251px;width:87px;height:25px;border-right:1px solid #c8c8c8;border-bottom:1px solid #c8c8c8;text-align:right;padding-right:1px;line-height:27px;font-size:12.5px;letter-spacing:-0.8px;color:#111">13.297</div><div class="a" style="left:1231px;top:251px;width:87px;height:25px;border-right:1px solid #c8c8c8;border-bottom:1px solid #c8c8c8;text-align:right;padding-right:1px;line-height:27px;font-size:12.5px;letter-spacing:-0.8px;color:#111">52.714</div><div class="a" style="left:1318px;top:251px;width:87px;height:25px;border-right:1px solid #c8c8c8;border-bottom:1px solid #c8c8c8;text-align:right;padding-right:1px;line-height:27px;font-size:12.5px;letter-spacing:-0.8px;color:#111">56.893</div><div class="a" style="left:1405px;top:251px;width:86px;height:25px;border-right:1px solid #c8c8c8;border-bottom:1px solid #c8c8c8;text-align:right;padding-right:1px;line-height:27px;font-size:12.5px;letter-spacing:-0.8px;color:#111">85.079</div><div class="a" style="left:1491px;top:251px;width:94px;height:25px;border-right:1px solid #c8c8c8;border-bottom:1px solid #c8c8c8;text-align:right;padding-right:1px;line-height:27px;font-size:12.5px;letter-spacing:-0.8px;color:#111">62.141</div><div class="a" style="left:1585px;top:251px;width:93px;height:25px;border-right:1px solid #c8c8c8;border-bottom:1px solid #c8c8c8;text-align:right;padding-right:1px;line-height:27px;font-size:12.5px;letter-spacing:-0.8px;color:#111">14.501</div><div class="a" style="left:1678px;top:251px;width:92px;height:25px;border-right:1px solid #c8c8c8;border-bottom:1px solid #c8c8c8;text-align:right;padding-right:1px;line-height:27px;font-size:12.5px;letter-spacing:-0.8px;color:#111">57.651</div><div class="a" style="left:11px;top:276px;width:85px;height:25px;background:#f0f0f0;border-right:1px solid #7a7a7a;border-bottom:1px solid #7a7a7a;box-shadow:inset 1px 1px 0 #fff;font-weight:bold;font-size:12.5px;letter-spacing:-0.4px;text-align:center;line-height:26px;color:#111">Delta E</div><div class="a" style="left:96px;top:276px;width:1674px;height:25px;background:#ffa8ac"></div><div class="a" style="left:96px;top:276px;width:89px;height:25px;border-right:1px solid #c8c8c8;border-bottom:1px solid #c8c8c8;text-align:right;padding-right:1px;line-height:27px;font-weight:bold;font-size:13px;letter-spacing:-0.3px;color:#111">8.9</div><div class="a" style="left:185px;top:276px;width:88px;height:25px;border-right:1px solid #c8c8c8;border-bottom:1px solid #c8c8c8;text-align:right;padding-right:1px;line-height:27px;font-weight:bold;font-size:13px;letter-spacing:-0.3px;color:#111">3.5</div><div class="a" style="left:273px;top:276px;width:87px;height:25px;border-right:1px solid #c8c8c8;border-bottom:1px solid #c8c8c8;text-align:right;padding-right:1px;line-height:27px;font-weight:bold;font-size:13px;letter-spacing:-0.3px;color:#111">5.1</div><div class="a" style="left:360px;top:276px;width:87px;height:25px;border-right:1px solid #c8c8c8;border-bottom:1px solid #c8c8c8;text-align:right;padding-right:1px;line-height:27px;font-weight:bold;font-size:13px;letter-spacing:-0.3px;color:#111">5.2</div><div class="a" style="left:447px;top:276px;width:87px;height:25px;border-right:1px solid #c8c8c8;border-bottom:1px solid #c8c8c8;text-align:right;padding-right:1px;line-height:27px;font-weight:bold;font-size:13px;letter-spacing:-0.3px;color:#111">5.0</div><div class="a" style="left:534px;top:276px;width:88px;height:25px;border-right:1px solid #c8c8c8;border-bottom:1px solid #c8c8c8;text-align:right;padding-right:1px;line-height:27px;font-weight:bold;font-size:13px;letter-spacing:-0.3px;color:#111">4.5</div><div class="a" style="left:622px;top:276px;width:87px;height:25px;border-right:1px solid #c8c8c8;border-bottom:1px solid #c8c8c8;text-align:right;padding-right:1px;line-height:27px;font-weight:bold;font-size:13px;letter-spacing:-0.3px;color:#111">6.4</div><div class="a" style="left:709px;top:276px;width:87px;height:25px;border-right:1px solid #c8c8c8;border-bottom:1px solid #c8c8c8;text-align:right;padding-right:1px;line-height:27px;font-weight:bold;font-size:13px;letter-spacing:-0.3px;color:#111">3.4</div><div class="a" style="left:796px;top:276px;width:87px;height:25px;border-right:1px solid #c8c8c8;border-bottom:1px solid #c8c8c8;text-align:right;padding-right:1px;line-height:27px;font-weight:bold;font-size:13px;letter-spacing:-0.3px;color:#111">5.4</div><div class="a" style="left:883px;top:276px;width:87px;height:25px;border-right:1px solid #c8c8c8;border-bottom:1px solid #c8c8c8;text-align:right;padding-right:1px;line-height:27px;font-weight:bold;font-size:13px;letter-spacing:-0.3px;color:#111">6.1</div><div class="a" style="left:970px;top:276px;width:87px;height:25px;border-right:1px solid #c8c8c8;border-bottom:1px solid #c8c8c8;text-align:right;padding-right:1px;line-height:27px;font-weight:bold;font-size:13px;letter-spacing:-0.3px;color:#111">5.4</div><div class="a" style="left:1057px;top:276px;width:87px;height:25px;background:#ffffa0;border-right:1px solid #c8c8c8;border-bottom:1px solid #c8c8c8;text-align:right;padding-right:1px;line-height:27px;font-weight:bold;font-size:13px;letter-spacing:-0.3px;color:#111">2.7</div><div class="a" style="left:1144px;top:276px;width:87px;height:25px;border-right:1px solid #c8c8c8;border-bottom:1px solid #c8c8c8;text-align:right;padding-right:1px;line-height:27px;font-weight:bold;font-size:13px;letter-spacing:-0.3px;color:#111">3.2</div><div class="a" style="left:1231px;top:276px;width:87px;height:25px;border-right:1px solid #c8c8c8;border-bottom:1px solid #c8c8c8;text-align:right;padding-right:1px;line-height:27px;font-weight:bold;font-size:13px;letter-spacing:-0.3px;color:#111">4.4</div><div class="a" style="left:1318px;top:276px;width:87px;height:25px;border-right:1px solid #c8c8c8;border-bottom:1px solid #c8c8c8;text-align:right;padding-right:1px;line-height:27px;font-weight:bold;font-size:13px;letter-spacing:-0.3px;color:#111">4.2</div><div class="a" style="left:1405px;top:276px;width:86px;height:25px;border-right:1px solid #c8c8c8;border-bottom:1px solid #c8c8c8;text-align:right;padding-right:1px;line-height:27px;font-weight:bold;font-size:13px;letter-spacing:-0.3px;color:#111">4.6</div><div class="a" style="left:1491px;top:276px;width:94px;height:25px;border-right:1px solid #c8c8c8;border-bottom:1px solid #c8c8c8;text-align:right;padding-right:1px;line-height:27px;font-weight:bold;font-size:13px;letter-spacing:-0.3px;color:#111">4.6</div><div class="a" style="left:1585px;top:276px;width:93px;height:25px;border-right:1px solid #c8c8c8;border-bottom:1px solid #c8c8c8;text-align:right;padding-right:1px;line-height:27px;font-weight:bold;font-size:13px;letter-spacing:-0.3px;color:#111">3.9</div><div class="a" style="left:1678px;top:276px;width:92px;height:25px;border-right:1px solid #c8c8c8;border-bottom:1px solid #c8c8c8;text-align:right;padding-right:1px;line-height:27px;font-weight:bold;font-size:13px;letter-spacing:-0.3px;color:#111">5.9</div><div class="a" style="left:11px;top:301px;width:85px;height:25px;background:#f0f0f0;border-right:1px solid #7a7a7a;border-bottom:1px solid #7a7a7a;box-shadow:inset 1px 1px 0 #fff;font-weight:bold;font-size:12.5px;letter-spacing:-0.4px;text-align:center;line-height:26px;color:#111">delta xy</div><div class="a" style="left:96px;top:301px;width:1674px;height:25px;background:#f0f0f0"></div><div class="a" style="left:96px;top:301px;width:89px;height:25px;border-right:1px solid #c8c8c8;border-bottom:1px solid #c8c8c8;text-align:right;padding-right:1px;line-height:27px;font-size:12.5px;letter-spacing:-0.8px;color:#111">0.0180</div><div class="a" style="left:185px;top:301px;width:88px;height:25px;border-right:1px solid #c8c8c8;border-bottom:1px solid #c8c8c8;text-align:right;padding-right:1px;line-height:27px;font-size:12.5px;letter-spacing:-0.8px;color:#111">0.0158</div><div class="a" style="left:273px;top:301px;width:87px;height:25px;border-right:1px solid #c8c8c8;border-bottom:1px solid #c8c8c8;text-align:right;padding-right:1px;line-height:27px;font-size:12.5px;letter-spacing:-0.8px;color:#111">0.0204</div><div class="a" style="left:360px;top:301px;width:87px;height:25px;border-right:1px solid #c8c8c8;border-bottom:1px solid #c8c8c8;text-align:right;padding-right:1px;line-height:27px;font-size:12.5px;letter-spacing:-0.8px;color:#111">0.0184</div><div class="a" style="left:447px;top:301px;width:87px;height:25px;border-right:1px solid #c8c8c8;border-bottom:1px solid #c8c8c8;text-align:right;padding-right:1px;line-height:27px;font-size:12.5px;letter-spacing:-0.8px;color:#111">0.0194</div><div class="a" style="left:534px;top:301px;width:88px;height:25px;border-right:1px solid #c8c8c8;border-bottom:1px solid #c8c8c8;text-align:right;padding-right:1px;line-height:27px;font-size:12.5px;letter-spacing:-0.8px;color:#111">0.0173</div><div class="a" style="left:622px;top:301px;width:87px;height:25px;border-right:1px solid #c8c8c8;border-bottom:1px solid #c8c8c8;text-align:right;padding-right:1px;line-height:27px;font-size:12.5px;letter-spacing:-0.8px;color:#111">0.0218</div><div class="a" style="left:709px;top:301px;width:87px;height:25px;border-right:1px solid #c8c8c8;border-bottom:1px solid #c8c8c8;text-align:right;padding-right:1px;line-height:27px;font-size:12.5px;letter-spacing:-0.8px;color:#111">0.0195</div><div class="a" style="left:796px;top:301px;width:87px;height:25px;border-right:1px solid #c8c8c8;border-bottom:1px solid #c8c8c8;text-align:right;padding-right:1px;line-height:27px;font-size:12.5px;letter-spacing:-0.8px;color:#111">0.0197</div><div class="a" style="left:883px;top:301px;width:87px;height:25px;border-right:1px solid #c8c8c8;border-bottom:1px solid #c8c8c8;text-align:right;padding-right:1px;line-height:27px;font-size:12.5px;letter-spacing:-0.8px;color:#111">0.0207</div><div class="a" style="left:970px;top:301px;width:87px;height:25px;border-right:1px solid #c8c8c8;border-bottom:1px solid #c8c8c8;text-align:right;padding-right:1px;line-height:27px;font-size:12.5px;letter-spacing:-0.8px;color:#111">0.0190</div><div class="a" style="left:1057px;top:301px;width:87px;height:25px;border-right:1px solid #c8c8c8;border-bottom:1px solid #c8c8c8;text-align:right;padding-right:1px;line-height:27px;font-size:12.5px;letter-spacing:-0.8px;color:#111">0.0128</div><div class="a" style="left:1144px;top:301px;width:87px;height:25px;border-right:1px solid #c8c8c8;border-bottom:1px solid #c8c8c8;text-align:right;padding-right:1px;line-height:27px;font-size:12.5px;letter-spacing:-0.8px;color:#111">0.0162</div><div class="a" style="left:1231px;top:301px;width:87px;height:25px;border-right:1px solid #c8c8c8;border-bottom:1px solid #c8c8c8;text-align:right;padding-right:1px;line-height:27px;font-size:12.5px;letter-spacing:-0.8px;color:#111">0.0189</div><div class="a" style="left:1318px;top:301px;width:87px;height:25px;border-right:1px solid #c8c8c8;border-bottom:1px solid #c8c8c8;text-align:right;padding-right:1px;line-height:27px;font-size:12.5px;letter-spacing:-0.8px;color:#111">0.0171</div><div class="a" style="left:1405px;top:301px;width:86px;height:25px;border-right:1px solid #c8c8c8;border-bottom:1px solid #c8c8c8;text-align:right;padding-right:1px;line-height:27px;font-size:12.5px;letter-spacing:-0.8px;color:#111">0.0172</div><div class="a" style="left:1491px;top:301px;width:94px;height:25px;border-right:1px solid #c8c8c8;border-bottom:1px solid #c8c8c8;text-align:right;padding-right:1px;line-height:27px;font-size:12.5px;letter-spacing:-0.8px;color:#111">0.0189</div><div class="a" style="left:1585px;top:301px;width:93px;height:25px;border-right:1px solid #c8c8c8;border-bottom:1px solid #c8c8c8;text-align:right;padding-right:1px;line-height:27px;font-size:12.5px;letter-spacing:-0.8px;color:#111">0.0205</div><div class="a" style="left:1678px;top:301px;width:92px;height:25px;border-right:1px solid #c8c8c8;border-bottom:1px solid #c8c8c8;text-align:right;padding-right:1px;line-height:27px;font-size:12.5px;letter-spacing:-0.8px;color:#111">0.0212</div><div class="a" style="left:11px;top:326px;width:85px;height:25px;background:#f0f0f0;border-right:1px solid #7a7a7a;border-bottom:1px solid #7a7a7a;box-shadow:inset 1px 1px 0 #fff;font-weight:bold;font-size:12.5px;letter-spacing:-0.4px;text-align:center;line-height:26px;color:#111">delta L</div><div class="a" style="left:96px;top:326px;width:1674px;height:25px;background:#e0e0e0"></div><div class="a" style="left:96px;top:326px;width:89px;height:25px;border-right:1px solid #c8c8c8;border-bottom:1px solid #c8c8c8;text-align:right;padding-right:1px;line-height:27px;font-size:12.5px;letter-spacing:-0.8px;color:#111">-0.2 %</div><div class="a" style="left:185px;top:326px;width:88px;height:25px;border-right:1px solid #c8c8c8;border-bottom:1px solid #c8c8c8;text-align:right;padding-right:1px;line-height:27px;font-size:12.5px;letter-spacing:-0.8px;color:#111">+3.9 %</div><div class="a" style="left:273px;top:326px;width:87px;height:25px;border-right:1px solid #c8c8c8;border-bottom:1px solid #c8c8c8;text-align:right;padding-right:1px;line-height:27px;font-size:12.5px;letter-spacing:-0.8px;color:#111">+3.2 %</div><div class="a" style="left:360px;top:326px;width:87px;height:25px;border-right:1px solid #c8c8c8;border-bottom:1px solid #c8c8c8;text-align:right;padding-right:1px;line-height:27px;font-size:12.5px;letter-spacing:-0.8px;color:#111">+3.8 %</div><div class="a" style="left:447px;top:326px;width:87px;height:25px;border-right:1px solid #c8c8c8;border-bottom:1px solid #c8c8c8;text-align:right;padding-right:1px;line-height:27px;font-size:12.5px;letter-spacing:-0.8px;color:#111">+2.4 %</div><div class="a" style="left:534px;top:326px;width:88px;height:25px;border-right:1px solid #c8c8c8;border-bottom:1px solid #c8c8c8;text-align:right;padding-right:1px;line-height:27px;font-size:12.5px;letter-spacing:-0.8px;color:#111">+3.2 %</div><div class="a" style="left:622px;top:326px;width:87px;height:25px;border-right:1px solid #c8c8c8;border-bottom:1px solid #c8c8c8;text-align:right;padding-right:1px;line-height:27px;font-size:12.5px;letter-spacing:-0.8px;color:#111">+3.3 %</div><div class="a" style="left:709px;top:326px;width:87px;height:25px;border-right:1px solid #c8c8c8;border-bottom:1px solid #c8c8c8;text-align:right;padding-right:1px;line-height:27px;font-size:12.5px;letter-spacing:-0.8px;color:#111">+4.7 %</div><div class="a" style="left:796px;top:326px;width:87px;height:25px;border-right:1px solid #c8c8c8;border-bottom:1px solid #c8c8c8;text-align:right;padding-right:1px;line-height:27px;font-size:12.5px;letter-spacing:-0.8px;color:#111">+3.1 %</div><div class="a" style="left:883px;top:326px;width:87px;height:25px;border-right:1px solid #c8c8c8;border-bottom:1px solid #c8c8c8;text-align:right;padding-right:1px;line-height:27px;font-size:12.5px;letter-spacing:-0.8px;color:#111">+3.3 %</div><div class="a" style="left:970px;top:326px;width:87px;height:25px;border-right:1px solid #c8c8c8;border-bottom:1px solid #c8c8c8;text-align:right;padding-right:1px;line-height:27px;font-size:12.5px;letter-spacing:-0.8px;color:#111">+2.4 %</div><div class="a" style="left:1057px;top:326px;width:87px;height:25px;border-right:1px solid #c8c8c8;border-bottom:1px solid #c8c8c8;text-align:right;padding-right:1px;line-height:27px;font-size:12.5px;letter-spacing:-0.8px;color:#111">+3.2 %</div><div class="a" style="left:1144px;top:326px;width:87px;height:25px;border-right:1px solid #c8c8c8;border-bottom:1px solid #c8c8c8;text-align:right;padding-right:1px;line-height:27px;font-size:12.5px;letter-spacing:-0.8px;color:#111">+3.3 %</div><div class="a" style="left:1231px;top:326px;width:87px;height:25px;border-right:1px solid #c8c8c8;border-bottom:1px solid #c8c8c8;text-align:right;padding-right:1px;line-height:27px;font-size:12.5px;letter-spacing:-0.8px;color:#111">+3.6 %</div><div class="a" style="left:1318px;top:326px;width:87px;height:25px;border-right:1px solid #c8c8c8;border-bottom:1px solid #c8c8c8;text-align:right;padding-right:1px;line-height:27px;font-size:12.5px;letter-spacing:-0.8px;color:#111">+2.2 %</div><div class="a" style="left:1405px;top:326px;width:86px;height:25px;border-right:1px solid #c8c8c8;border-bottom:1px solid #c8c8c8;text-align:right;padding-right:1px;line-height:27px;font-size:12.5px;letter-spacing:-0.8px;color:#111">+3.0 %</div><div class="a" style="left:1491px;top:326px;width:94px;height:25px;border-right:1px solid #c8c8c8;border-bottom:1px solid #c8c8c8;text-align:right;padding-right:1px;line-height:27px;font-size:12.5px;letter-spacing:-0.8px;color:#111">+2.5 %</div><div class="a" style="left:1585px;top:326px;width:93px;height:25px;border-right:1px solid #c8c8c8;border-bottom:1px solid #c8c8c8;text-align:right;padding-right:1px;line-height:27px;font-size:12.5px;letter-spacing:-0.8px;color:#111">+4.2 %</div><div class="a" style="left:1678px;top:326px;width:92px;height:25px;border-right:1px solid #c8c8c8;border-bottom:1px solid #c8c8c8;text-align:right;padding-right:1px;line-height:27px;font-size:12.5px;letter-spacing:-0.8px;color:#111">+2.8 %</div><div class="a" style="left:11px;top:351px;width:85px;height:2px;border-right:1px solid #7a7a7a"></div><div class="a" style="left:96px;top:351px;width:89px;height:2px;border-right:1px solid #c8c8c8;background:#fff"></div><div class="a" style="left:185px;top:351px;width:88px;height:2px;border-right:1px solid #c8c8c8;background:#fff"></div><div class="a" style="left:273px;top:351px;width:87px;height:2px;border-right:1px solid #c8c8c8;background:#fff"></div><div class="a" style="left:360px;top:351px;width:87px;height:2px;border-right:1px solid #c8c8c8;background:#fff"></div><div class="a" style="left:447px;top:351px;width:87px;height:2px;border-right:1px solid #c8c8c8;background:#fff"></div><div class="a" style="left:534px;top:351px;width:88px;height:2px;border-right:1px solid #c8c8c8;background:#fff"></div><div class="a" style="left:622px;top:351px;width:87px;height:2px;border-right:1px solid #c8c8c8;background:#fff"></div><div class="a" style="left:709px;top:351px;width:87px;height:2px;border-right:1px solid #c8c8c8;background:#fff"></div><div class="a" style="left:796px;top:351px;width:87px;height:2px;border-right:1px solid #c8c8c8;background:#fff"></div><div class="a" style="left:883px;top:351px;width:87px;height:2px;border-right:1px solid #c8c8c8;background:#fff"></div><div class="a" style="left:970px;top:351px;width:87px;height:2px;border-right:1px solid #c8c8c8;background:#fff"></div><div class="a" style="left:1057px;top:351px;width:87px;height:2px;border-right:1px solid #c8c8c8;background:#fff"></div><div class="a" style="left:1144px;top:351px;width:87px;height:2px;border-right:1px solid #c8c8c8;background:#fff"></div><div class="a" style="left:1231px;top:351px;width:87px;height:2px;border-right:1px solid #c8c8c8;background:#fff"></div><div class="a" style="left:1318px;top:351px;width:87px;height:2px;border-right:1px solid #c8c8c8;background:#fff"></div><div class="a" style="left:1405px;top:351px;width:86px;height:2px;border-right:1px solid #c8c8c8;background:#fff"></div><div class="a" style="left:1491px;top:351px;width:94px;height:2px;border-right:1px solid #c8c8c8;background:#fff"></div><div class="a" style="left:1585px;top:351px;width:93px;height:2px;border-right:1px solid #c8c8c8;background:#fff"></div><div class="a" style="left:1678px;top:351px;width:92px;height:2px;border-right:1px solid #c8c8c8;background:#fff"></div><div class="a" style="left:11px;top:353px;width:1760px;height:20px;background:#f0f0f0"></div><svg class="a" style="left:14px;top:358px" width="8" height="10"><path d="M8 0V10L0 5Z" fill="#a0a0a0"/></svg><svg class="a" style="left:1759px;top:358px" width="8" height="10"><path d="M0 0V10L8 5Z" fill="#a0a0a0"/></svg><div class="a" style="left:1771px;top:178px;width:19px;height:175px;background:#f0f0f0"></div><div class="a" style="left:1779px;top:195px;width:2px;height:140px;background:#7c7c7c"></div><div class="a" style="left:1811px;top:159px;width:88px;height:221px;border:1px solid #a0a0a0;background:#ececec"></div><div class="a" style="left:1815px;top:162px;width:80px;height:97px;border:2px solid #9a9a9a;border-radius:4px 4px 0 0;background:#ececec"></div><div class="a" style="left:1817px;top:164px;width:76px;height:16px;background:linear-gradient(90deg,#e2eaf6,#e8eef8);border-bottom:1px solid #b5c0cf"></div><div class="a" style="left:1822px;top:165px;font-weight:bold;font-size:12.5px;color:#3a3a3a">Display</div><div class="a" style="left:1824px;top:182px;width:11px;height:11px;border-radius:50%;border:1px solid #c0c0c0;border-right-color:#fff;border-bottom-color:#fff;background:#f4f4f4"></div><div class="a" style="left:1841px;top:180px;font-size:13px;color:#a8a8a8">Sensor</div><div class="a" style="left:1824px;top:198px;width:11px;height:11px;border-radius:50%;border:1px solid #555;border-right-color:#fff;border-bottom-color:#fff;background:#f4f4f4"></div><div class="a" style="left:1841px;top:196px;font-size:13px;color:#111">RGB</div><div class="a" style="left:1824px;top:214px;width:11px;height:11px;border-radius:50%;border:1px solid #555;border-right-color:#fff;border-bottom-color:#fff;background:#f4f4f4"></div><div class="a" style="left:1841px;top:212px;font-size:13px;color:#111">XYZ</div><div class="a" style="left:1824px;top:230px;width:11px;height:11px;border-radius:50%;border:1px solid #555;border-right-color:#fff;border-bottom-color:#fff;background:#f4f4f4"></div><div class="a" style="left:1841px;top:228px;font-size:13px;color:#111">xyz</div><div class="a" style="left:1824px;top:246px;width:11px;height:11px;border-radius:50%;border:1px solid #555;border-right-color:#fff;border-bottom-color:#fff;background:#f4f4f4"></div><div class="a" style="left:1828px;top:250px;width:4px;height:4px;border-radius:50%;background:#111"></div><div class="a" style="left:1841px;top:244px;font-size:13px;color:#111">xyY</div><div class="a" style="left:1812px;top:261px;width:87px;height:119px;background:#8c8c8c"></div><div class="a" style="left:1813px;top:264px;width:82px;height:30px;background:#ececec;border:1px solid #fafafa;border-right-color:#9a9a9a;border-bottom-color:#9a9a9a"></div><svg class="a" style="left:1817px;top:266px" width="34" height="28"><rect x="1" y="2" width="9" height="25" fill="#b8b8b8" stroke="#222" stroke-width="1"/><rect x="24" y="2" width="9" height="25" fill="#b8b8b8" stroke="#222"/><path d="M9 3L18 0L21 8L12 12Z" fill="#e01818" stroke="#400" stroke-width="0.6"/><path d="M12 12L21 8L25 17L15 20Z" fill="#20c040" stroke="#111" stroke-width="0.8"/><path d="M15 20L25 17L30 25L20 28Z" fill="#3070f0" stroke="#102060" stroke-width="0.8"/></svg><div class="a" style="left:1862px;top:271px;font-size:14px;color:#111">Go</div><div class="a" style="left:1813px;top:294px;width:82px;height:30px;background:#ececec;border:1px solid #fafafa;border-right-color:#9a9a9a;border-bottom-color:#9a9a9a"></div><svg class="a" style="left:1819px;top:296px" width="28" height="27"><path d="M2 4Q14 0 27 3L23 25Q13 28 6 25Z" fill="#a8dcf8" stroke="#5a9ad0" stroke-width="1"/><ellipse cx="14" cy="22" rx="8" ry="3" fill="#d8f0ff" opacity="0.7"/><path d="M10 15a5 5 0 0 1 8-5l1-2 1 6-6 0 2-1a3 3 0 0 0-4 3Z" fill="#20a030"/><path d="M19 14a5 5 0 0 1-8 5l-1 2-1-6 6 0-2 1a3 3 0 0 0 4-3Z" fill="#20a030"/></svg><div class="a" style="left:1851px;top:301px;font-size:14px;color:#111">Delete</div><div class="a" style="left:1813px;top:324px;width:82px;height:30px;background:#ececec;border:1px solid #fafafa;border-right-color:#9a9a9a;border-bottom-color:#9a9a9a"></div><svg class="a" style="left:1817px;top:328px" width="34" height="24"><path d="M1 23V13L3 12L5 6L7 7L9 13L11 13L13 8L15 2L17 3L19 5L21 9L23 12L25 11L27 15L31 15V23Z" fill="#f8f000" stroke="#e0c000" stroke-width="0.6"/><rect x="2" y="14" width="3" height="9" fill="#c000c0"/><rect x="5" y="7" width="4" height="16" fill="#1010e0"/><rect x="9" y="13" width="3" height="10" fill="#00e0e0"/><rect x="12" y="9" width="4" height="14" fill="#20d020"/><rect x="16" y="3" width="4" height="20" fill="#f8f000"/><rect x="20" y="6" width="3" height="17" fill="#800000"/><rect x="23" y="12" width="8" height="11" fill="#f01010"/></svg><div class="a" style="left:1857px;top:331px;font-size:14px;color:#111">Refs</div><div class="a" style="left:1818px;top:358px;width:56px;height:18px;background:#f4f4f4"></div><div class="cb" style="left:1820px;top:361px;width:12px;height:12px;border-color:#666;border-right-color:#ddd;border-bottom-color:#ddd"></div><div class="a" style="left:1837px;top:359px;font-size:14px;color:#111">Edit</div><div class="a" style="left:2px;top:381px;width:384px;height:639px;border:1px solid #a0a0a0;border-right-color:#fff;border-bottom-color:#fff"></div><div class="a" style="left:388px;top:381px;width:1514px;height:639px;border:1px solid #a0a0a0;border-right-color:#fff;border-bottom-color:#fff"></div><div class="a" style="left:0;top:378px;width:1905px;height:3px;background:#a9a9a9"></div><div class="a" style="left:0;top:1018px;width:1905px;height:4px;background:linear-gradient(#7c7c7c 0,#7c7c7c 1px,#b4b4b4 1px)"></div><div class="a" style="left:385px;top:381px;width:2px;height:638px;background:#7c7c7c"></div><div class="a" style="left:5px;top:386px;width:378px;height:630px;border:2px solid #9a9a9a;border-radius:4px 4px 0 0;background:#ececec;box-shadow:inset 1px 1px 0 #fff"></div><div class="a" style="left:7px;top:388px;width:374px;height:18px;background:linear-gradient(90deg,#e2eaf6,#e8eef8 50%,#e2eaf6);border-bottom:1px solid #b5c0cf;border-radius:3px 3px 0 0"></div><div class="a" style="left:12px;top:390px;font-weight:bold;font-size:13px;color:#3a3a3a;letter-spacing:0.4px">Selected color</div><div class="a" style="left:16px;top:410px;width:110px;height:15px;background:#f0f0f0"></div><div class="a" style="left:18px;top:409px;font-size:13px;color:#111">RGB Levels</div><div class="a" style="left:230px;top:406px;width:128px;height:16px;background:#f0f0f0"></div><div class="a" style="left:241px;top:407px;font-size:13.9px;color:#111">Current Measure</div><div class="a" style="left:14px;top:433px;width:201px;height:90px;background:#ededed"></div><div class="a" style="left:14px;top:477px;width:200px;height:1px;border-top:1px dashed #777"></div><div class="a" style="left:14px;top:496px;width:50px;text-align:center;font-family:'Liberation Serif',serif;font-weight:bold;font-size:10.5px;color:#111">0.0%</div><div class="a" style="left:14px;top:508px;width:50px;height:10px;border-radius:50% 50% 0 0/100% 100% 0 0;background:#a00000"></div><div class="a" style="left:64px;top:496px;width:50px;text-align:center;font-family:'Liberation Serif',serif;font-weight:bold;font-size:10.5px;color:#111">0.0%</div><div class="a" style="left:64px;top:508px;width:50px;height:10px;border-radius:50% 50% 0 0/100% 100% 0 0;background:#008000"></div><div class="a" style="left:114px;top:496px;width:50px;text-align:center;font-family:'Liberation Serif',serif;font-weight:bold;font-size:10.5px;color:#111">0.0%</div><div class="a" style="left:114px;top:508px;width:50px;height:10px;border-radius:50% 50% 0 0/100% 100% 0 0;background:#0000a0"></div><div class="a" style="left:164px;top:496px;width:50px;text-align:center;font-family:'Liberation Serif',serif;font-weight:bold;font-size:10.5px;color:#111">dE 0.0</div><div class="a" style="left:164px;top:508px;width:50px;height:10px;border-radius:50% 50% 0 0/100% 100% 0 0;background:#b08000"></div><div class="a" style="left:14px;top:513px;width:200px;height:6px;background:#000;border-radius:0"></div><div class="a" style="left:16px;top:533px;width:193px;height:72px;background:#e8e8e8"></div><div class="a" style="left:23px;top:533px;width:80px;text-align:center;font-weight:bold;font-size:13.5px;line-height:16px;color:#111;font-family:'Liberation Sans',sans-serif;letter-spacing:0.5px">No<br>Measure</div><div class="a" style="left:119px;top:533px;width:80px;text-align:center;font-weight:bold;font-size:13.5px;line-height:16px;color:#111;font-family:'Liberation Sans',sans-serif;letter-spacing:0.5px">No<br>Measure</div><div class="a" style="left:18px;top:622px;font-size:14.3px;color:#111">Target</div><div class="a" style="left:50px;top:638px;width:116px;height:89px;border:1px solid #222;background:conic-gradient(from 0deg at 50% 50%,#60ff00 0deg,#e8ff00 40deg,#ff8000 70deg,#ff0000 95deg,#ff0060 130deg,#c000c0 165deg,#6000e0 195deg,#0000ff 225deg,#0080c0 265deg,#00e0a0 300deg,#00ff60 330deg,#60ff00 360deg)"></div><div class="a" style="left:67px;top:652px;width:82px;height:62px;border-radius:9px;background:#3c3c3c;border:1px solid #f0f0f0"></div><svg class="a" style="left:67px;top:652px" width="82" height="62"><g fill="none" stroke-width="1.1"><path d="M32.7 27.5A9 9 0 0 1 37.5 22.7" stroke="#30e080"/><path d="M29.0 25.9A13 13 0 0 1 35.9 19.0" stroke="#30e080"/><path d="M25.4 24.4A17 17 0 0 1 34.4 15.4" stroke="#30e080"/><path d="M21.7 22.8A21 21 0 0 1 32.8 11.7" stroke="#30e080"/><path d="M18.0 21.2A25 25 0 0 1 31.2 8.0" stroke="#30e080"/><path d="M44.5 22.7A9 9 0 0 1 49.3 27.5" stroke="#f0b020"/><path d="M46.1 19.0A13 13 0 0 1 53.0 25.9" stroke="#f0b020"/><path d="M47.6 15.4A17 17 0 0 1 56.6 24.4" stroke="#f0b020"/><path d="M49.2 11.7A21 21 0 0 1 60.3 22.8" stroke="#f0b020"/><path d="M50.8 8.0A25 25 0 0 1 64.0 21.2" stroke="#f0b020"/><path d="M37.5 39.3A9 9 0 0 1 32.7 34.5" stroke="#3050f0"/><path d="M35.9 43.0A13 13 0 0 1 29.0 36.1" stroke="#3050f0"/><path d="M34.4 46.6A17 17 0 0 1 25.4 37.6" stroke="#3050f0"/><path d="M32.8 50.3A21 21 0 0 1 21.7 39.2" stroke="#3050f0"/><path d="M31.2 54.0A25 25 0 0 1 18.0 40.8" stroke="#3050f0"/><path d="M49.3 34.5A9 9 0 0 1 44.5 39.3" stroke="#f030a0"/><path d="M53.0 36.1A13 13 0 0 1 46.1 43.0" stroke="#f030a0"/><path d="M56.6 37.6A17 17 0 0 1 47.6 46.6" stroke="#f030a0"/><path d="M60.3 39.2A21 21 0 0 1 49.2 50.3" stroke="#f030a0"/><path d="M64.0 40.8A25 25 0 0 1 50.8 54.0" stroke="#f030a0"/><path d="M37 31h8M41 27v8M38 28l6 6M44 28l-6 6" stroke="#fff" stroke-width="1"/></g></svg><div class="a" style="left:220px;top:431px;width:153px;height:576px;border:1px solid #a0a0a0;border-right-color:#fff;border-bottom-color:#fff;background:#f0f0f0"></div><div class="a" style="left:222px;top:432px;width:53px;height:23px;background:#f0f0f0;border-right:1px solid #6a6a6a;border-bottom:1px solid #6a6a6a;box-shadow:inset 1px 1px 0 #fff;text-align:center;line-height:22px;font-weight:bold;font-size:12.5px;color:#111">Y cd/m&sup2;</div><div class="a" style="left:275px;top:432px;width:79px;height:23px;background:#ffffff;border-bottom:1px solid #c8c8c8;text-align:right;padding-right:1px;line-height:22px;font-size:12.5px;color:#111"></div><div class="a" style="left:222px;top:455px;width:53px;height:23px;background:#f0f0f0;border-right:1px solid #6a6a6a;border-bottom:1px solid #6a6a6a;box-shadow:inset 1px 1px 0 #fff;text-align:center;line-height:22px;font-weight:bold;font-size:12.5px;color:#111">Y ftL</div><div class="a" style="left:275px;top:455px;width:79px;height:23px;background:#ffffff;border-bottom:1px solid #c8c8c8;text-align:right;padding-right:1px;line-height:22px;font-size:12.5px;color:#111"></div><div class="a" style="left:222px;top:478px;width:53px;height:23px;background:#f0f0f0;border-right:1px solid #6a6a6a;border-bottom:1px solid #6a6a6a;box-shadow:inset 1px 1px 0 #fff;text-align:center;line-height:22px;font-weight:bold;font-size:12.5px;color:#111">T&deg;</div><div class="a" style="left:275px;top:478px;width:79px;height:23px;background:#ffffff;border-bottom:1px solid #c8c8c8;text-align:right;padding-right:1px;line-height:22px;font-size:12.5px;color:#111"></div><div class="a" style="left:222px;top:501px;width:53px;height:23px;background:#f0f0f0;border-right:1px solid #6a6a6a;border-bottom:1px solid #6a6a6a;box-shadow:inset 1px 1px 0 #fff;text-align:center;line-height:22px;font-weight:bold;font-size:12.5px;color:#111">X</div><div class="a" style="left:275px;top:501px;width:79px;height:23px;background:#dedede;border-bottom:1px solid #c8c8c8;text-align:right;padding-right:1px;line-height:22px;font-size:12.5px;color:#111"></div><div class="a" style="left:222px;top:524px;width:53px;height:23px;background:#f0f0f0;border-right:1px solid #6a6a6a;border-bottom:1px solid #6a6a6a;box-shadow:inset 1px 1px 0 #fff;text-align:center;line-height:22px;font-weight:bold;font-size:12.5px;color:#111">Y</div><div class="a" style="left:275px;top:524px;width:79px;height:23px;background:#dedede;border-bottom:1px solid #c8c8c8;text-align:right;padding-right:1px;line-height:22px;font-size:12.5px;color:#111"></div><div class="a" style="left:222px;top:547px;width:53px;height:23px;background:#f0f0f0;border-right:1px solid #6a6a6a;border-bottom:1px solid #6a6a6a;box-shadow:inset 1px 1px 0 #fff;text-align:center;line-height:22px;font-weight:bold;font-size:12.5px;color:#111">Z</div><div class="a" style="left:275px;top:547px;width:79px;height:23px;background:#dedede;border-bottom:1px solid #c8c8c8;text-align:right;padding-right:1px;line-height:22px;font-size:12.5px;color:#111"></div><div class="a" style="left:222px;top:570px;width:53px;height:23px;background:#f0f0f0;border-right:1px solid #6a6a6a;border-bottom:1px solid #6a6a6a;box-shadow:inset 1px 1px 0 #fff;text-align:center;line-height:22px;font-weight:bold;font-size:12.5px;color:#111">R</div><div class="a" style="left:275px;top:570px;width:79px;height:23px;background:#ffffff;border-bottom:1px solid #c8c8c8;text-align:right;padding-right:1px;line-height:22px;font-size:12.5px;color:#111"></div><div class="a" style="left:222px;top:593px;width:53px;height:23px;background:#f0f0f0;border-right:1px solid #6a6a6a;border-bottom:1px solid #6a6a6a;box-shadow:inset 1px 1px 0 #fff;text-align:center;line-height:22px;font-weight:bold;font-size:12.5px;color:#111">G</div><div class="a" style="left:275px;top:593px;width:79px;height:23px;background:#ffffff;border-bottom:1px solid #c8c8c8;text-align:right;padding-right:1px;line-height:22px;font-size:12.5px;color:#111"></div><div class="a" style="left:222px;top:616px;width:53px;height:23px;background:#f0f0f0;border-right:1px solid #6a6a6a;border-bottom:1px solid #6a6a6a;box-shadow:inset 1px 1px 0 #fff;text-align:center;line-height:22px;font-weight:bold;font-size:12.5px;color:#111">B</div><div class="a" style="left:275px;top:616px;width:79px;height:23px;background:#ffffff;border-bottom:1px solid #c8c8c8;text-align:right;padding-right:1px;line-height:22px;font-size:12.5px;color:#111"></div><div class="a" style="left:222px;top:639px;width:53px;height:23px;background:#f0f0f0;border-right:1px solid #6a6a6a;border-bottom:1px solid #6a6a6a;box-shadow:inset 1px 1px 0 #fff;text-align:center;line-height:22px;font-weight:bold;font-size:12.5px;color:#111">x</div><div class="a" style="left:275px;top:639px;width:79px;height:23px;background:#dedede;border-bottom:1px solid #c8c8c8;text-align:right;padding-right:1px;line-height:22px;font-size:12.5px;color:#111"></div><div class="a" style="left:222px;top:662px;width:53px;height:23px;background:#f0f0f0;border-right:1px solid #6a6a6a;border-bottom:1px solid #6a6a6a;box-shadow:inset 1px 1px 0 #fff;text-align:center;line-height:22px;font-weight:bold;font-size:12.5px;color:#111">y</div><div class="a" style="left:275px;top:662px;width:79px;height:23px;background:#dedede;border-bottom:1px solid #c8c8c8;text-align:right;padding-right:1px;line-height:22px;font-size:12.5px;color:#111"></div><div class="a" style="left:222px;top:685px;width:53px;height:23px;background:#f0f0f0;border-right:1px solid #6a6a6a;border-bottom:1px solid #6a6a6a;box-shadow:inset 1px 1px 0 #fff;text-align:center;line-height:22px;font-weight:bold;font-size:12.5px;color:#111">Y</div><div class="a" style="left:275px;top:685px;width:79px;height:23px;background:#dedede;border-bottom:1px solid #c8c8c8;text-align:right;padding-right:1px;line-height:22px;font-size:12.5px;color:#111"></div><div class="a" style="left:222px;top:708px;width:53px;height:23px;background:#f0f0f0;border-right:1px solid #6a6a6a;border-bottom:1px solid #6a6a6a;box-shadow:inset 1px 1px 0 #fff;text-align:center;line-height:22px;font-weight:bold;font-size:12.5px;color:#111">x</div><div class="a" style="left:275px;top:708px;width:79px;height:23px;background:#ffffff;border-bottom:1px solid #c8c8c8;text-align:right;padding-right:1px;line-height:22px;font-size:12.5px;color:#111"></div><div class="a" style="left:222px;top:731px;width:53px;height:23px;background:#f0f0f0;border-right:1px solid #6a6a6a;border-bottom:1px solid #6a6a6a;box-shadow:inset 1px 1px 0 #fff;text-align:center;line-height:22px;font-weight:bold;font-size:12.5px;color:#111">y</div><div class="a" style="left:275px;top:731px;width:79px;height:23px;background:#ffffff;border-bottom:1px solid #c8c8c8;text-align:right;padding-right:1px;line-height:22px;font-size:12.5px;color:#111"></div><div class="a" style="left:222px;top:754px;width:53px;height:23px;background:#f0f0f0;border-right:1px solid #6a6a6a;border-bottom:1px solid #6a6a6a;box-shadow:inset 1px 1px 0 #fff;text-align:center;line-height:22px;font-weight:bold;font-size:12.5px;color:#111">z</div><div class="a" style="left:275px;top:754px;width:79px;height:23px;background:#ffffff;border-bottom:1px solid #c8c8c8;text-align:right;padding-right:1px;line-height:22px;font-size:12.5px;color:#111"></div><div class="a" style="left:222px;top:777px;width:53px;height:23px;background:#f0f0f0;border-right:1px solid #6a6a6a;border-bottom:1px solid #6a6a6a;box-shadow:inset 1px 1px 0 #fff;text-align:center;line-height:22px;font-weight:bold;font-size:12.5px;color:#111">L</div><div class="a" style="left:275px;top:777px;width:79px;height:23px;background:#dedede;border-bottom:1px solid #c8c8c8;text-align:right;padding-right:1px;line-height:22px;font-size:12.5px;color:#111"></div><div class="a" style="left:222px;top:800px;width:53px;height:23px;background:#f0f0f0;border-right:1px solid #6a6a6a;border-bottom:1px solid #6a6a6a;box-shadow:inset 1px 1px 0 #fff;text-align:center;line-height:22px;font-weight:bold;font-size:12.5px;color:#111">a</div><div class="a" style="left:275px;top:800px;width:79px;height:23px;background:#dedede;border-bottom:1px solid #c8c8c8;text-align:right;padding-right:1px;line-height:22px;font-size:12.5px;color:#111"></div><div class="a" style="left:222px;top:823px;width:53px;height:23px;background:#f0f0f0;border-right:1px solid #6a6a6a;border-bottom:1px solid #6a6a6a;box-shadow:inset 1px 1px 0 #fff;text-align:center;line-height:22px;font-weight:bold;font-size:12.5px;color:#111">b</div><div class="a" style="left:275px;top:823px;width:79px;height:23px;background:#dedede;border-bottom:1px solid #c8c8c8;text-align:right;padding-right:1px;line-height:22px;font-size:12.5px;color:#111"></div><div class="a" style="left:222px;top:846px;width:53px;height:23px;background:#f0f0f0;border-right:1px solid #6a6a6a;border-bottom:1px solid #6a6a6a;box-shadow:inset 1px 1px 0 #fff;text-align:center;line-height:22px;font-weight:bold;font-size:12.5px;color:#111">L</div><div class="a" style="left:275px;top:846px;width:79px;height:23px;background:#ffffff;border-bottom:1px solid #c8c8c8;text-align:right;padding-right:1px;line-height:22px;font-size:12.5px;color:#111"></div><div class="a" style="left:222px;top:869px;width:53px;height:23px;background:#f0f0f0;border-right:1px solid #6a6a6a;border-bottom:1px solid #6a6a6a;box-shadow:inset 1px 1px 0 #fff;text-align:center;line-height:22px;font-weight:bold;font-size:12.5px;color:#111">C</div><div class="a" style="left:275px;top:869px;width:79px;height:23px;background:#ffffff;border-bottom:1px solid #c8c8c8;text-align:right;padding-right:1px;line-height:22px;font-size:12.5px;color:#111"></div><div class="a" style="left:222px;top:892px;width:53px;height:23px;background:#f0f0f0;border-right:1px solid #6a6a6a;border-bottom:1px solid #6a6a6a;box-shadow:inset 1px 1px 0 #fff;text-align:center;line-height:22px;font-weight:bold;font-size:12.5px;color:#111">H</div><div class="a" style="left:275px;top:892px;width:79px;height:23px;background:#ffffff;border-bottom:1px solid #c8c8c8;text-align:right;padding-right:1px;line-height:22px;font-size:12.5px;color:#111"></div><div class="a" style="left:222px;top:915px;width:53px;height:23px;background:#f0f0f0;border-right:1px solid #6a6a6a;border-bottom:1px solid #6a6a6a;box-shadow:inset 1px 1px 0 #fff;text-align:center;line-height:22px;font-weight:bold;font-size:12.5px;color:#111">L</div><div class="a" style="left:275px;top:915px;width:79px;height:23px;background:#dedede;border-bottom:1px solid #c8c8c8;text-align:right;padding-right:1px;line-height:22px;font-size:12.5px;color:#111">171.87</div><div class="a" style="left:222px;top:938px;width:53px;height:23px;background:#f0f0f0;border-right:1px solid #6a6a6a;border-bottom:1px solid #6a6a6a;box-shadow:inset 1px 1px 0 #fff;text-align:center;line-height:22px;font-weight:bold;font-size:12.5px;color:#111">M</div><div class="a" style="left:275px;top:938px;width:79px;height:23px;background:#dedede;border-bottom:1px solid #c8c8c8;text-align:right;padding-right:1px;line-height:22px;font-size:12.5px;color:#111">255.13</div><div class="a" style="left:222px;top:961px;width:53px;height:23px;background:#f0f0f0;border-right:1px solid #6a6a6a;border-bottom:1px solid #6a6a6a;box-shadow:inset 1px 1px 0 #fff;text-align:center;line-height:22px;font-weight:bold;font-size:12.5px;color:#111">S</div><div class="a" style="left:275px;top:961px;width:79px;height:23px;background:#dedede;border-bottom:1px solid #c8c8c8;text-align:right;padding-right:1px;line-height:22px;font-size:12.5px;color:#111">192.48</div><div class="a" style="left:222px;top:984px;width:132px;height:22px;background:#a0a0a0"></div><svg class="a" style="left:359px;top:437px" width="10" height="7"><path d="M0 7H10L5 0Z" fill="#b8b8b8"/></svg><svg class="a" style="left:359px;top:995px" width="10" height="7"><path d="M0 0H10L5 7Z" fill="#b8b8b8"/></svg><div class="a" style="left:390px;top:386px;width:1507px;height:630px;border:2px solid #9a9a9a;border-radius:4px 4px 0 0;background:#ececec;box-shadow:inset 1px 1px 0 #fff"></div><div class="a" style="left:392px;top:388px;width:1503px;height:18px;background:linear-gradient(90deg,#e2eaf6,#e8eef8 50%,#e2eaf6);border-bottom:1px solid #b5c0cf;border-radius:3px 3px 0 0"></div><div class="a" style="left:397px;top:390px;font-weight:bold;font-size:13px;color:#3a3a3a;letter-spacing:0.4px">Information</div><div class="a" style="left:397px;top:410px;width:301px;height:23px;border:2px solid #8a8a8a;border-right-color:#d0d0d0;border-bottom-color:#d0d0d0;background:#fff"></div><div class="a" style="left:400px;top:413px;font-size:13.5px;color:#111">CIE Diagram</div><div class="a" style="left:679px;top:412px;width:17px;height:19px;background:#ececec;border:1px solid #fff;border-right-color:#777;border-bottom-color:#777"></div><svg class="a" style="left:683px;top:419px" width="9" height="5"><path d="M0 0H9L4.5 5Z" fill="#111"/></svg><div class="a" style="left:398px;top:439px;width:1496px;height:570px;border:2px solid #8a8a8a;border-right-color:#f4f4f4;border-bottom-color:#f4f4f4"></div><div class="a" style="left:402px;top:443px;width:1488px;height:562px;background:#02080b;overflow:hidden"><svg width="1488" height="562" viewBox="402 443 1488 562" style="position:absolute;left:0;top:0;font-family:'Liberation Serif',serif"><defs><clipPath id="cl"><path d="M789.6 968.1 L787.0 967.7 L783.3 967.2 L779.1 966.4 L774.8 965.2 L770.7 963.5 L766.5 961.5 L761.9 959.1 L757.0 956.3 L751.6 953.2 L745.8 949.6 L739.7 945.8 L733.3 941.5 L726.7 936.9 L719.7 932.0 L712.5 926.7 L705.2 920.7 L697.6 913.9 L689.7 906.3 L681.7 898.5 L674.1 891.1 L666.8 884.2 L659.6 877.6 L652.7 871.0 L645.9 864.4 L639.3 857.8 L632.9 851.3 L626.7 844.7 L620.7 837.8 L614.9 830.6 L609.2 823.1 L603.8 815.6 L598.5 808.1 L593.4 800.6 L588.4 793.1 L583.7 785.7 L579.3 778.5 L575.3 771.8 L571.6 765.4 L568.0 758.9 L564.4 751.9 L560.6 744.0 L556.6 735.4 L552.9 727.0 L549.6 719.3 L546.9 713.0 L544.6 707.6 L542.6 702.2 L540.7 695.6 L538.9 687.2 L537.3 677.6 L536.0 668.1 L534.8 660.0 L533.9 653.8 L533.2 648.8 L532.7 644.2 L532.4 639.3 L532.2 633.9 L532.2 628.5 L532.3 622.9 L532.4 617.0 L532.5 610.4 L532.7 603.3 L532.9 596.5 L533.3 591.0 L533.8 587.3 L534.5 584.8 L535.3 582.7 L536.1 580.0 L536.9 576.7 L537.6 573.1 L538.5 569.3 L539.8 565.2 L541.4 560.6 L543.1 555.6 L545.3 550.6 L548.1 545.7 L551.6 541.0 L555.6 536.3 L560.0 531.9 L564.8 528.1 L569.5 525.1 L574.3 522.6 L579.9 520.4 L587.0 518.0 L596.6 515.2 L608.0 512.3 L619.5 509.6 L629.6 507.4 L637.5 506.0 L644.2 505.0 L650.5 504.4 L657.4 504.0 L665.0 503.7 L672.8 503.5 L680.8 503.7 L688.9 504.0 L697.0 504.6 L705.2 505.5 L713.5 506.6 L722.2 507.8 L730.7 509.1 L739.2 510.5 L748.6 512.2 L760.0 514.3 L775.0 517.2 L792.6 520.6 L810.0 524.0 L824.4 527.0 L833.8 529.0 L840.0 530.4 L846.4 532.1 L856.4 534.8 L871.0 538.9 L888.5 543.8 L907.7 549.3 L927.5 555.2 L948.7 561.6 L971.4 568.6 L994.1 575.8 L1015.0 582.5 L1033.7 588.8 L1051.0 594.8 L1067.5 600.7 L1083.6 606.2 L1099.0 611.3 L1113.8 616.1 L1128.2 620.8 L1142.7 625.5 L1157.5 630.4 L1172.2 635.3 L1186.9 640.2 L1201.6 645.1 L1216.3 650.0 L1230.9 654.9 L1245.6 659.8 L1260.1 664.7 L1274.6 669.6 L1289.0 674.4 L1303.3 679.3 L1317.5 684.1 L1331.6 688.8 L1345.6 693.6 L1359.4 698.3 L1373.2 702.9 L1386.7 707.5 L1400.2 712.1 L1413.5 716.6 L1426.6 721.0 L1439.4 725.4 L1452.2 729.6 L1464.6 733.8 L1476.8 738.0 L1488.7 742.0 L1500.4 745.9 L1511.7 749.8 L1522.6 753.5 L1533.1 757.1 L1543.2 760.5 L1552.9 763.8 L1562.4 767.0 L1571.7 770.1 L1580.6 773.1 L1589.2 776.0 L1597.5 778.8 L1605.3 781.5 L1612.7 783.9 L1619.8 786.3 L1626.6 788.6 L1633.0 790.8 L1639.0 792.8 L1644.8 794.8 L1650.2 796.6 L1655.3 798.4 L1660.2 800.0 L1664.7 801.6 L1669.0 803.0 L1673.1 804.4 L1677.0 805.7 L1680.6 806.9 L1684.1 808.1 L1687.4 809.2 L1690.4 810.2 L1693.4 811.2 L1696.2 812.2 L1698.9 813.1 L1701.4 814.0 L1703.9 814.8 L1706.2 815.6 L1708.5 816.4 L1710.6 817.1 L1712.6 817.8 L1714.5 818.4 L1716.4 819.0 L1718.3 819.7 L1720.0 820.2 L1721.1 820.6 Z"/></clipPath><clipPath id="ct"><path d="M1581.7 795.0 L1007.0 642.5 L784.0 943.0 Z"/></clipPath><filter id="bl" x="-5%" y="-5%" width="110%" height="110%"><feGaussianBlur stdDeviation="9"/></filter><filter id="bl2" x="-5%" y="-5%" width="110%" height="110%"><feGaussianBlur stdDeviation="5"/></filter><radialGradient id="glow" gradientUnits="userSpaceOnUse" cx="1043" cy="791" r="185" gradientTransform="translate(1043 791) scale(1 0.42) translate(-1043 -791)"><stop offset="0" stop-color="#fff" stop-opacity="0.7"/><stop offset="0.8" stop-color="#fff" stop-opacity="0.35"/><stop offset="1" stop-color="#fff" stop-opacity="0"/></radialGradient><radialGradient id="sh"><stop offset="0" stop-color="#000" stop-opacity="0.6"/><stop offset="1" stop-color="#000" stop-opacity="0"/></radialGradient></defs><style>.oc rect{width:20px;height:20px}.in rect{width:10px;height:10px}</style><g clip-path="url(#cl)"><g filter="url(#bl)" class="oc"><g transform="translate(0 485)"><rect x="546" fill="#00c78a"/><rect x="566" fill="#00c788"/><rect x="586" fill="#00c787"/><rect x="606" fill="#00c785"/><rect x="626" fill="#00c783"/><rect x="646" fill="#00c781"/><rect x="666" fill="#00c77f"/><rect x="686" fill="#00c77c"/><rect x="706" fill="#00c77a"/><rect x="726" fill="#00c777"/><rect x="746" fill="#00c774"/><rect x="766" fill="#00c771"/><rect x="786" fill="#00c76e"/><rect x="806" fill="#00c76a"/><rect x="826" fill="#00c766"/><rect x="846" fill="#00c761"/></g><g transform="translate(0 505)"><rect x="526" fill="#00c78e"/><rect x="546" fill="#00c78d"/><rect x="566" fill="#00c78b"/><rect x="586" fill="#00c789"/><rect x="606" fill="#00c788"/><rect x="626" fill="#00c786"/><rect x="646" fill="#00c784"/><rect x="666" fill="#00c782"/><rect x="686" fill="#00c77f"/><rect x="706" fill="#00c77d"/><rect x="726" fill="#00c77a"/><rect x="746" fill="#00c777"/><rect x="766" fill="#00c774"/><rect x="786" fill="#00c771"/><rect x="806" fill="#00c76d"/><rect x="826" fill="#00c769"/><rect x="846" fill="#00c764"/><rect x="866" fill="#00c75f"/><rect x="886" fill="#00c759"/><rect x="906" fill="#00c752"/></g><g transform="translate(0 525)"><rect x="506" fill="#00c792"/><rect x="526" fill="#00c791"/><rect x="546" fill="#00c78f"/><rect x="566" fill="#00c78e"/><rect x="586" fill="#00c78c"/><rect x="606" fill="#00c78a"/><rect x="626" fill="#00c789"/><rect x="646" fill="#00c787"/><rect x="666" fill="#00c785"/><rect x="686" fill="#00c782"/><rect x="706" fill="#00c780"/><rect x="726" fill="#00c77d"/><rect x="746" fill="#00c77b"/><rect x="766" fill="#00c777"/><rect x="786" fill="#00c774"/><rect x="806" fill="#00c770"/><rect x="826" fill="#00c76c"/><rect x="846" fill="#00c768"/><rect x="866" fill="#00c763"/><rect x="886" fill="#00c75d"/><rect x="906" fill="#00c756"/><rect x="926" fill="#00c74e"/><rect x="946" fill="#00c744"/><rect x="966" fill="#00c736"/><rect x="986" fill="#00c720"/></g><g transform="translate(0 545)"><rect x="506" fill="#00c795"/><rect x="526" fill="#00c794"/><rect x="546" fill="#00c792"/><rect x="566" fill="#00c791"/><rect x="586" fill="#00c78f"/><rect x="606" fill="#00c78d"/><rect x="626" fill="#00c78c"/><rect x="646" fill="#00c78a"/><rect x="666" fill="#00c788"/><rect x="686" fill="#00c786"/><rect x="706" fill="#00c783"/><rect x="726" fill="#00c781"/><rect x="746" fill="#00c77e"/><rect x="766" fill="#00c77b"/><rect x="786" fill="#00c778"/><rect x="806" fill="#00c774"/><rect x="826" fill="#00c770"/><rect x="846" fill="#00c76b"/><rect x="866" fill="#00c766"/><rect x="886" fill="#00c761"/><rect x="906" fill="#00c75a"/><rect x="926" fill="#00c752"/><rect x="946" fill="#00c748"/><rect x="966" fill="#00c73a"/><rect x="986" fill="#00c726"/><rect x="1006" fill="#17c700"/><rect x="1026" fill="#34c700"/><rect x="1046" fill="#46c700"/></g><g transform="translate(0 565)"><rect x="506" fill="#00c798"/><rect x="526" fill="#00c797"/><rect x="546" fill="#00c795"/><rect x="566" fill="#00c794"/><rect x="586" fill="#00c792"/><rect x="606" fill="#00c791"/><rect x="626" fill="#00c78f"/><rect x="646" fill="#00c78d"/><rect x="666" fill="#00c78b"/><rect x="686" fill="#00c789"/><rect x="706" fill="#00c787"/><rect x="726" fill="#00c784"/><rect x="746" fill="#00c782"/><rect x="766" fill="#00c77f"/><rect x="786" fill="#00c77b"/><rect x="806" fill="#00c778"/><rect x="826" fill="#00c774"/><rect x="846" fill="#00c76f"/><rect x="866" fill="#00c76a"/><rect x="886" fill="#00c765"/><rect x="906" fill="#00c75e"/><rect x="926" fill="#00c756"/><rect x="946" fill="#00c74c"/><rect x="966" fill="#00c73f"/><rect x="986" fill="#00c72c"/><rect x="1006" fill="#10c700"/><rect x="1026" fill="#34c700"/><rect x="1046" fill="#47c700"/><rect x="1066" fill="#55c700"/><rect x="1086" fill="#60c700"/><rect x="1106" fill="#6ac700"/></g><g transform="translate(0 585)"><rect x="506" fill="#00c79b"/><rect x="526" fill="#00c79a"/><rect x="546" fill="#00c798"/><rect x="566" fill="#00c797"/><rect x="586" fill="#00c796"/><rect x="606" fill="#00c794"/><rect x="626" fill="#00c792"/><rect x="646" fill="#00c791"/><rect x="666" fill="#00c78f"/><rect x="686" fill="#00c78d"/><rect x="706" fill="#00c78a"/><rect x="726" fill="#00c788"/><rect x="746" fill="#00c785"/><rect x="766" fill="#00c783"/><rect x="786" fill="#00c77f"/><rect x="806" fill="#00c77c"/><rect x="826" fill="#00c778"/><rect x="846" fill="#00c774"/><rect x="866" fill="#00c76f"/><rect x="886" fill="#00c769"/><rect x="906" fill="#00c762"/><rect x="926" fill="#00c75a"/><rect x="946" fill="#00c751"/><rect x="966" fill="#00c744"/><rect x="986" fill="#00c731"/><rect x="1006" fill="#01c700"/><rect x="1026" fill="#33c700"/><rect x="1046" fill="#48c700"/><rect x="1066" fill="#57c700"/><rect x="1086" fill="#63c700"/><rect x="1106" fill="#6ec700"/><rect x="1126" fill="#77c700"/><rect x="1146" fill="#80c700"/><rect x="1166" fill="#88c700"/></g><g transform="translate(0 605)"><rect x="506" fill="#00c79e"/><rect x="526" fill="#00c79d"/><rect x="546" fill="#00c79c"/><rect x="566" fill="#00c79b"/><rect x="586" fill="#00c799"/><rect x="606" fill="#00c798"/><rect x="626" fill="#00c796"/><rect x="646" fill="#00c794"/><rect x="666" fill="#00c793"/><rect x="686" fill="#00c791"/><rect x="706" fill="#00c78e"/><rect x="726" fill="#00c78c"/><rect x="746" fill="#00c78a"/><rect x="766" fill="#00c787"/><rect x="786" fill="#00c784"/><rect x="806" fill="#00c780"/><rect x="826" fill="#00c77c"/><rect x="846" fill="#00c778"/><rect x="866" fill="#00c773"/><rect x="886" fill="#00c76e"/><rect x="906" fill="#00c767"/><rect x="926" fill="#00c75f"/><rect x="946" fill="#00c756"/><rect x="966" fill="#00c749"/><rect x="986" fill="#00c737"/><rect x="1006" fill="#00c710"/><rect x="1026" fill="#32c700"/><rect x="1046" fill="#49c700"/><rect x="1066" fill="#59c700"/><rect x="1086" fill="#66c700"/><rect x="1106" fill="#72c700"/><rect x="1126" fill="#7cc700"/><rect x="1146" fill="#85c700"/><rect x="1166" fill="#8ec700"/><rect x="1186" fill="#95c700"/><rect x="1206" fill="#9dc700"/><rect x="1226" fill="#a4c700"/></g><g transform="translate(0 625)"><rect x="506" fill="#00c7a2"/><rect x="526" fill="#00c7a1"/><rect x="546" fill="#00c79f"/><rect x="566" fill="#00c79e"/><rect x="586" fill="#00c79d"/><rect x="606" fill="#00c79b"/><rect x="626" fill="#00c79a"/><rect x="646" fill="#00c798"/><rect x="666" fill="#00c797"/><rect x="686" fill="#00c795"/><rect x="706" fill="#00c793"/><rect x="726" fill="#00c790"/><rect x="746" fill="#00c78e"/><rect x="766" fill="#00c78b"/><rect x="786" fill="#00c788"/><rect x="806" fill="#00c785"/><rect x="826" fill="#00c781"/><rect x="846" fill="#00c77d"/><rect x="866" fill="#00c779"/><rect x="886" fill="#00c773"/><rect x="906" fill="#00c76d"/><rect x="926" fill="#00c765"/><rect x="946" fill="#00c75b"/><rect x="966" fill="#00c74f"/><rect x="986" fill="#00c73d"/><rect x="1006" fill="#00c71c"/><rect x="1026" fill="#31c700"/><rect x="1046" fill="#4ac700"/><rect x="1066" fill="#5cc700"/><rect x="1086" fill="#6bc700"/><rect x="1106" fill="#77c700"/><rect x="1126" fill="#82c700"/><rect x="1146" fill="#8bc700"/><rect x="1166" fill="#94c700"/><rect x="1186" fill="#9cc700"/><rect x="1206" fill="#a4c700"/><rect x="1226" fill="#acc700"/><rect x="1246" fill="#b2c700"/><rect x="1266" fill="#b9c700"/><rect x="1286" fill="#bfc700"/></g><g transform="translate(0 645)"><rect x="506" fill="#00c7a5"/><rect x="526" fill="#00c7a4"/><rect x="546" fill="#00c7a3"/><rect x="566" fill="#00c7a2"/><rect x="586" fill="#00c7a1"/><rect x="606" fill="#00c7a0"/><rect x="626" fill="#00c79e"/><rect x="646" fill="#00c79d"/><rect x="666" fill="#00c79b"/><rect x="686" fill="#00c799"/><rect x="706" fill="#00c797"/><rect x="726" fill="#00c795"/><rect x="746" fill="#00c793"/><rect x="766" fill="#00c790"/><rect x="786" fill="#00c78e"/><rect x="806" fill="#00c78a"/><rect x="826" fill="#00c787"/><rect x="846" fill="#00c783"/><rect x="866" fill="#00c77e"/><rect x="886" fill="#00c779"/><rect x="906" fill="#00c773"/><rect x="926" fill="#00c76b"/><rect x="946" fill="#00c762"/><rect x="966" fill="#00c756"/><rect x="986" fill="#00c744"/><rect x="1006" fill="#1ec731"/><rect x="1026" fill="#3ec729"/><rect x="1046" fill="#51c71d"/><rect x="1066" fill="#61c709"/><rect x="1086" fill="#6fc700"/><rect x="1106" fill="#7dc700"/><rect x="1126" fill="#88c700"/><rect x="1146" fill="#93c700"/><rect x="1166" fill="#9cc700"/><rect x="1186" fill="#a5c700"/><rect x="1206" fill="#adc700"/><rect x="1226" fill="#b5c700"/><rect x="1246" fill="#bdc700"/><rect x="1266" fill="#c4c700"/><rect x="1286" fill="#c7c400"/><rect x="1306" fill="#c7be00"/><rect x="1326" fill="#c7b800"/><rect x="1346" fill="#c7b300"/></g><g transform="translate(0 665)"><rect x="506" fill="#00c7a9"/><rect x="526" fill="#00c7a8"/><rect x="546" fill="#00c7a7"/><rect x="566" fill="#00c7a6"/><rect x="586" fill="#00c7a5"/><rect x="606" fill="#00c7a4"/><rect x="626" fill="#00c7a3"/><rect x="646" fill="#00c7a1"/><rect x="666" fill="#00c7a0"/><rect x="686" fill="#00c79e"/><rect x="706" fill="#00c79c"/><rect x="726" fill="#00c79a"/><rect x="746" fill="#00c798"/><rect x="766" fill="#00c796"/><rect x="786" fill="#00c793"/><rect x="806" fill="#00c790"/><rect x="826" fill="#00c78d"/><rect x="846" fill="#00c789"/><rect x="866" fill="#00c785"/><rect x="886" fill="#00c780"/><rect x="906" fill="#00c779"/><rect x="926" fill="#00c772"/><rect x="946" fill="#00c769"/><rect x="966" fill="#00c75d"/><rect x="986" fill="#14c74f"/><rect x="1006" fill="#3bc74a"/><rect x="1026" fill="#51c746"/><rect x="1046" fill="#61c740"/><rect x="1066" fill="#6fc73a"/><rect x="1086" fill="#7cc732"/><rect x="1106" fill="#87c729"/><rect x="1126" fill="#92c71c"/><rect x="1146" fill="#9cc700"/><rect x="1166" fill="#a6c700"/><rect x="1186" fill="#b0c700"/><rect x="1206" fill="#b9c700"/><rect x="1226" fill="#c1c700"/><rect x="1246" fill="#c7c500"/><rect x="1266" fill="#c7be00"/><rect x="1286" fill="#c7b700"/><rect x="1306" fill="#c7b100"/><rect x="1326" fill="#c7ac00"/><rect x="1346" fill="#c7a800"/><rect x="1366" fill="#c7a300"/><rect x="1386" fill="#c79f00"/></g><g transform="translate(0 685)"><rect x="506" fill="#00c7ae"/><rect x="526" fill="#00c7ad"/><rect x="546" fill="#00c7ac"/><rect x="566" fill="#00c7ab"/><rect x="586" fill="#00c7aa"/><rect x="606" fill="#00c7a9"/><rect x="626" fill="#00c7a8"/><rect x="646" fill="#00c7a6"/><rect x="666" fill="#00c7a5"/><rect x="686" fill="#00c7a4"/><rect x="706" fill="#00c7a2"/><rect x="726" fill="#00c7a0"/><rect x="746" fill="#00c79e"/><rect x="766" fill="#00c79c"/><rect x="786" fill="#00c799"/><rect x="806" fill="#00c797"/><rect x="826" fill="#00c794"/><rect x="846" fill="#00c790"/><rect x="866" fill="#00c78c"/><rect x="886" fill="#00c787"/><rect x="906" fill="#00c781"/><rect x="926" fill="#00c77a"/><rect x="946" fill="#00c771"/><rect x="966" fill="#00c766"/><rect x="986" fill="#39c762"/><rect x="1006" fill="#50c75f"/><rect x="1026" fill="#62c75c"/><rect x="1046" fill="#71c758"/><rect x="1066" fill="#7ec754"/><rect x="1086" fill="#8ac74f"/><rect x="1106" fill="#96c74a"/><rect x="1126" fill="#a0c744"/><rect x="1146" fill="#abc73d"/><rect x="1166" fill="#b5c734"/><rect x="1186" fill="#bec72a"/><rect x="1206" fill="#c7c619"/><rect x="1226" fill="#c7be00"/><rect x="1246" fill="#c7b600"/><rect x="1266" fill="#c7af00"/><rect x="1286" fill="#c7a900"/><rect x="1306" fill="#c7a400"/><rect x="1326" fill="#c79f00"/><rect x="1346" fill="#c79b00"/><rect x="1366" fill="#c79700"/><rect x="1386" fill="#c79300"/><rect x="1406" fill="#c78f00"/><rect x="1426" fill="#c78c00"/><rect x="1446" fill="#c78900"/></g><g transform="translate(0 705)"><rect x="506" fill="#00c7b2"/><rect x="526" fill="#00c7b1"/><rect x="546" fill="#00c7b1"/><rect x="566" fill="#00c7b0"/><rect x="586" fill="#00c7af"/><rect x="606" fill="#00c7ae"/><rect x="626" fill="#00c7ad"/><rect x="646" fill="#00c7ac"/><rect x="666" fill="#00c7ab"/><rect x="686" fill="#00c7a9"/><rect x="706" fill="#00c7a8"/><rect x="726" fill="#00c7a6"/><rect x="746" fill="#00c7a5"/><rect x="766" fill="#00c7a3"/><rect x="786" fill="#00c7a1"/><rect x="806" fill="#00c79e"/><rect x="826" fill="#00c79b"/><rect x="846" fill="#00c798"/><rect x="866" fill="#00c794"/><rect x="886" fill="#00c790"/><rect x="906" fill="#00c78a"/><rect x="926" fill="#00c784"/><rect x="946" fill="#00c77b"/><rect x="966" fill="#35c778"/><rect x="986" fill="#50c775"/><rect x="1006" fill="#63c773"/><rect x="1026" fill="#73c770"/><rect x="1046" fill="#81c76d"/><rect x="1066" fill="#8ec76a"/><rect x="1086" fill="#9ac767"/><rect x="1106" fill="#a6c763"/><rect x="1126" fill="#b1c75f"/><rect x="1146" fill="#bbc75a"/><rect x="1166" fill="#c5c755"/><rect x="1186" fill="#c7bf4c"/><rect x="1206" fill="#c7b642"/><rect x="1226" fill="#c7ae38"/><rect x="1246" fill="#c7a72d"/><rect x="1266" fill="#c7a020"/><rect x="1286" fill="#c79a0d"/><rect x="1306" fill="#c79400"/><rect x="1326" fill="#c79000"/><rect x="1346" fill="#c78c00"/><rect x="1366" fill="#c78800"/><rect x="1386" fill="#c78500"/><rect x="1406" fill="#c78100"/><rect x="1426" fill="#c77e00"/><rect x="1446" fill="#c77c00"/><rect x="1466" fill="#c77900"/><rect x="1486" fill="#c77700"/><rect x="1506" fill="#c77400"/></g><g transform="translate(0 725)"><rect x="506" fill="#00c7b7"/><rect x="526" fill="#00c7b6"/><rect x="546" fill="#00c7b6"/><rect x="566" fill="#00c7b5"/><rect x="586" fill="#00c7b4"/><rect x="606" fill="#00c7b4"/><rect x="626" fill="#00c7b3"/><rect x="646" fill="#00c7b2"/><rect x="666" fill="#00c7b1"/><rect x="686" fill="#00c7b0"/><rect x="706" fill="#00c7af"/><rect x="726" fill="#00c7ad"/><rect x="746" fill="#00c7ac"/><rect x="766" fill="#00c7aa"/><rect x="786" fill="#00c7a9"/><rect x="806" fill="#00c7a6"/><rect x="826" fill="#00c7a4"/><rect x="846" fill="#00c7a1"/><rect x="866" fill="#00c79e"/><rect x="886" fill="#00c79a"/><rect x="906" fill="#00c795"/><rect x="926" fill="#00c78f"/><rect x="946" fill="#31c78c"/><rect x="966" fill="#4fc78a"/><rect x="986" fill="#64c788"/><rect x="1006" fill="#76c786"/><rect x="1026" fill="#85c784"/><rect x="1046" fill="#93c782"/><rect x="1066" fill="#a0c780"/><rect x="1086" fill="#acc77d"/><rect x="1106" fill="#b7c77a"/><rect x="1126" fill="#c3c778"/><rect x="1146" fill="#c7c070"/><rect x="1166" fill="#c7b667"/><rect x="1186" fill="#c7ae5f"/><rect x="1206" fill="#c7a656"/><rect x="1226" fill="#c79e4e"/><rect x="1246" fill="#c79847"/><rect x="1266" fill="#c7913f"/><rect x="1286" fill="#c78b37"/><rect x="1306" fill="#c7862e"/><rect x="1326" fill="#c78124"/><rect x="1346" fill="#c77c18"/><rect x="1366" fill="#c77701"/><rect x="1386" fill="#c77400"/><rect x="1406" fill="#c77100"/><rect x="1426" fill="#c76e00"/><rect x="1446" fill="#c76c00"/><rect x="1466" fill="#c76a00"/><rect x="1486" fill="#c76800"/><rect x="1506" fill="#c76500"/><rect x="1526" fill="#c76400"/><rect x="1546" fill="#c76200"/><rect x="1566" fill="#c76000"/></g><g transform="translate(0 745)"><rect x="526" fill="#00c7bc"/><rect x="546" fill="#00c7bb"/><rect x="566" fill="#00c7bb"/><rect x="586" fill="#00c7ba"/><rect x="606" fill="#00c7ba"/><rect x="626" fill="#00c7b9"/><rect x="646" fill="#00c7b9"/><rect x="666" fill="#00c7b8"/><rect x="686" fill="#00c7b7"/><rect x="706" fill="#00c7b6"/><rect x="726" fill="#00c7b5"/><rect x="746" fill="#00c7b4"/><rect x="766" fill="#00c7b3"/><rect x="786" fill="#00c7b2"/><rect x="806" fill="#00c7b0"/><rect x="826" fill="#00c7ae"/><rect x="846" fill="#00c7ac"/><rect x="866" fill="#00c7aa"/><rect x="886" fill="#00c7a7"/><rect x="906" fill="#00c7a3"/><rect x="926" fill="#2bc7a0"/><rect x="946" fill="#4fc79e"/><rect x="966" fill="#66c79d"/><rect x="986" fill="#79c79c"/><rect x="1006" fill="#89c79b"/><rect x="1026" fill="#98c799"/><rect x="1046" fill="#a6c798"/><rect x="1066" fill="#b3c796"/><rect x="1086" fill="#c0c795"/><rect x="1106" fill="#c7c28f"/><rect x="1126" fill="#c7b785"/><rect x="1146" fill="#c7ad7c"/><rect x="1166" fill="#c7a573"/><rect x="1186" fill="#c79d6c"/><rect x="1206" fill="#c79564"/><rect x="1226" fill="#c78f5d"/><rect x="1246" fill="#c78857"/><rect x="1266" fill="#c78250"/><rect x="1286" fill="#c77d4a"/><rect x="1306" fill="#c77843"/><rect x="1326" fill="#c7723d"/><rect x="1346" fill="#c76e36"/><rect x="1366" fill="#c7692f"/><rect x="1386" fill="#c76427"/><rect x="1406" fill="#c7601e"/><rect x="1426" fill="#c75c11"/><rect x="1446" fill="#c75800"/><rect x="1466" fill="#c75600"/><rect x="1486" fill="#c75400"/><rect x="1506" fill="#c75300"/><rect x="1526" fill="#c75100"/><rect x="1546" fill="#c75000"/><rect x="1566" fill="#c74e00"/><rect x="1586" fill="#c74d00"/><rect x="1606" fill="#c74c00"/><rect x="1626" fill="#c74a00"/></g><g transform="translate(0 765)"><rect x="526" fill="#00c7c2"/><rect x="546" fill="#00c7c1"/><rect x="566" fill="#00c7c1"/><rect x="586" fill="#00c7c1"/><rect x="606" fill="#00c7c1"/><rect x="626" fill="#00c7c0"/><rect x="646" fill="#00c7c0"/><rect x="666" fill="#00c7c0"/><rect x="686" fill="#00c7bf"/><rect x="706" fill="#00c7bf"/><rect x="726" fill="#00c7be"/><rect x="746" fill="#00c7be"/><rect x="766" fill="#00c7bd"/><rect x="786" fill="#00c7bc"/><rect x="806" fill="#00c7bc"/><rect x="826" fill="#00c7bb"/><rect x="846" fill="#00c7b9"/><rect x="866" fill="#00c7b8"/><rect x="886" fill="#00c7b6"/><rect x="906" fill="#22c7b4"/><rect x="926" fill="#4ec7b4"/><rect x="946" fill="#68c7b3"/><rect x="966" fill="#7cc7b3"/><rect x="986" fill="#8ec7b2"/><rect x="1006" fill="#9ec7b2"/><rect x="1026" fill="#adc7b1"/><rect x="1046" fill="#bcc7b0"/><rect x="1066" fill="#c7c4ad"/><rect x="1086" fill="#c7b8a1"/><rect x="1106" fill="#c7ad97"/><rect x="1126" fill="#c7a38d"/><rect x="1146" fill="#c79b85"/><rect x="1166" fill="#c7937d"/><rect x="1186" fill="#c78b76"/><rect x="1206" fill="#c7846f"/><rect x="1226" fill="#c77e68"/><rect x="1246" fill="#c77862"/><rect x="1266" fill="#c7725c"/><rect x="1286" fill="#c76d57"/><rect x="1306" fill="#c76851"/><rect x="1326" fill="#c7634c"/><rect x="1346" fill="#c75e46"/><rect x="1366" fill="#c75941"/><rect x="1386" fill="#c7553b"/><rect x="1406" fill="#c75035"/><rect x="1426" fill="#c74c2f"/><rect x="1446" fill="#c74728"/><rect x="1466" fill="#c74321"/><rect x="1486" fill="#c73e18"/><rect x="1506" fill="#c73a0a"/><rect x="1526" fill="#c73700"/><rect x="1546" fill="#c73600"/><rect x="1566" fill="#c73500"/><rect x="1586" fill="#c73400"/><rect x="1606" fill="#c73300"/><rect x="1626" fill="#c73200"/><rect x="1646" fill="#c73100"/><rect x="1666" fill="#c73000"/><rect x="1686" fill="#c72f00"/></g><g transform="translate(0 785)"><rect x="546" fill="#00c6c7"/><rect x="566" fill="#00c6c7"/><rect x="586" fill="#00c6c7"/><rect x="606" fill="#00c6c7"/><rect x="626" fill="#00c6c7"/><rect x="646" fill="#00c5c7"/><rect x="666" fill="#00c5c7"/><rect x="686" fill="#00c5c7"/><rect x="706" fill="#00c5c7"/><rect x="726" fill="#00c5c7"/><rect x="746" fill="#00c5c7"/><rect x="766" fill="#00c5c7"/><rect x="786" fill="#00c5c7"/><rect x="806" fill="#00c4c7"/><rect x="826" fill="#00c4c7"/><rect x="846" fill="#00c4c7"/><rect x="866" fill="#00c3c7"/><rect x="886" fill="#11c3c7"/><rect x="906" fill="#4bc3c7"/><rect x="926" fill="#68c3c7"/><rect x="946" fill="#7ec2c7"/><rect x="966" fill="#91c2c7"/><rect x="986" fill="#a2c2c7"/><rect x="1006" fill="#b2c2c7"/><rect x="1026" fill="#c1c2c7"/><rect x="1046" fill="#c7b9be"/><rect x="1066" fill="#c7acb1"/><rect x="1086" fill="#c7a2a7"/><rect x="1106" fill="#c7989d"/><rect x="1126" fill="#c78f94"/><rect x="1146" fill="#c7878c"/><rect x="1166" fill="#c78085"/><rect x="1186" fill="#c7797e"/><rect x="1206" fill="#c77277"/><rect x="1226" fill="#c76c71"/><rect x="1246" fill="#c7676c"/><rect x="1266" fill="#c76166"/><rect x="1286" fill="#c75c61"/><rect x="1306" fill="#c7565c"/><rect x="1326" fill="#c75157"/><rect x="1346" fill="#c74c52"/><rect x="1366" fill="#c7474d"/><rect x="1386" fill="#c74248"/><rect x="1406" fill="#c73d43"/><rect x="1426" fill="#c7373f"/><rect x="1446" fill="#c7323a"/><rect x="1466" fill="#c72c35"/><rect x="1486" fill="#c7252f"/><rect x="1506" fill="#c71e2a"/><rect x="1526" fill="#c71523"/><rect x="1546" fill="#c7061c"/><rect x="1566" fill="#c70019"/><rect x="1586" fill="#c70019"/><rect x="1606" fill="#c70018"/><rect x="1626" fill="#c70018"/><rect x="1646" fill="#c70017"/><rect x="1666" fill="#c70017"/><rect x="1686" fill="#c70017"/><rect x="1706" fill="#c70016"/><rect x="1726" fill="#c70016"/></g><g transform="translate(0 805)"><rect x="546" fill="#00bfc7"/><rect x="566" fill="#00bec7"/><rect x="586" fill="#00bec7"/><rect x="606" fill="#00bec7"/><rect x="626" fill="#00bdc7"/><rect x="646" fill="#00bdc7"/><rect x="666" fill="#00bcc7"/><rect x="686" fill="#00bbc7"/><rect x="706" fill="#00bbc7"/><rect x="726" fill="#00bac7"/><rect x="746" fill="#00b9c7"/><rect x="766" fill="#00b8c7"/><rect x="786" fill="#00b6c7"/><rect x="806" fill="#00b5c7"/><rect x="826" fill="#00b3c7"/><rect x="846" fill="#00b1c7"/><rect x="866" fill="#00aec7"/><rect x="886" fill="#40adc7"/><rect x="906" fill="#5dacc7"/><rect x="926" fill="#73abc7"/><rect x="946" fill="#85aac7"/><rect x="966" fill="#95a9c7"/><rect x="986" fill="#a4a8c7"/><rect x="1006" fill="#b3a7c7"/><rect x="1026" fill="#c0a6c7"/><rect x="1046" fill="#c79fc1"/><rect x="1066" fill="#c795b5"/><rect x="1086" fill="#c78bab"/><rect x="1106" fill="#c782a2"/><rect x="1126" fill="#c77a9a"/><rect x="1146" fill="#c77292"/><rect x="1166" fill="#c76b8b"/><rect x="1186" fill="#c76585"/><rect x="1206" fill="#c75e7f"/><rect x="1226" fill="#c75879"/><rect x="1246" fill="#c75273"/><rect x="1266" fill="#c74c6e"/><rect x="1286" fill="#c74669"/><rect x="1306" fill="#c74064"/><rect x="1326" fill="#c73a60"/><rect x="1346" fill="#c7345b"/><rect x="1366" fill="#c72e57"/><rect x="1386" fill="#c72653"/><rect x="1406" fill="#c71e4e"/><rect x="1426" fill="#c7134a"/><rect x="1446" fill="#c70046"/><rect x="1466" fill="#c70044"/><rect x="1486" fill="#c70043"/><rect x="1506" fill="#c70042"/><rect x="1526" fill="#c70041"/><rect x="1546" fill="#c70040"/><rect x="1566" fill="#c7003f"/><rect x="1586" fill="#c7003d"/><rect x="1606" fill="#c7003d"/><rect x="1626" fill="#c7003c"/><rect x="1646" fill="#c7003b"/><rect x="1666" fill="#c7003a"/><rect x="1686" fill="#c70039"/><rect x="1706" fill="#c70038"/><rect x="1726" fill="#c70038"/></g><g transform="translate(0 825)"><rect x="566" fill="#00b7c7"/><rect x="586" fill="#00b6c7"/><rect x="606" fill="#00b5c7"/><rect x="626" fill="#00b4c7"/><rect x="646" fill="#00b3c7"/><rect x="666" fill="#00b2c7"/><rect x="686" fill="#00b1c7"/><rect x="706" fill="#00afc7"/><rect x="726" fill="#00aec7"/><rect x="746" fill="#00acc7"/><rect x="766" fill="#00a9c7"/><rect x="786" fill="#00a7c7"/><rect x="806" fill="#00a4c7"/><rect x="826" fill="#00a0c7"/><rect x="846" fill="#009bc7"/><rect x="866" fill="#3698c7"/><rect x="886" fill="#5497c7"/><rect x="906" fill="#6995c7"/><rect x="926" fill="#7b94c7"/><rect x="946" fill="#8b92c7"/><rect x="966" fill="#9990c7"/><rect x="986" fill="#a68fc7"/><rect x="1006" fill="#b38dc7"/><rect x="1026" fill="#bf8ac7"/><rect x="1046" fill="#c785c3"/><rect x="1066" fill="#c77bb8"/><rect x="1086" fill="#c773af"/><rect x="1106" fill="#c76aa6"/><rect x="1126" fill="#c7629e"/><rect x="1146" fill="#c75b97"/><rect x="1166" fill="#c75491"/><rect x="1186" fill="#c74d8a"/><rect x="1206" fill="#c74685"/><rect x="1226" fill="#c73f7f"/><rect x="1246" fill="#c7377a"/><rect x="1266" fill="#c73075"/><rect x="1286" fill="#c72770"/><rect x="1306" fill="#c71d6c"/><rect x="1326" fill="#c70f67"/><rect x="1346" fill="#c70064"/><rect x="1366" fill="#c70062"/><rect x="1386" fill="#c7005f"/><rect x="1406" fill="#c7005d"/><rect x="1426" fill="#c7005c"/><rect x="1446" fill="#c7005a"/><rect x="1466" fill="#c70058"/><rect x="1486" fill="#c70057"/><rect x="1506" fill="#c70055"/><rect x="1526" fill="#c70054"/><rect x="1546" fill="#c70052"/><rect x="1566" fill="#c70051"/><rect x="1586" fill="#c70050"/><rect x="1606" fill="#c7004f"/><rect x="1626" fill="#c7004e"/><rect x="1646" fill="#c7004d"/><rect x="1666" fill="#c7004c"/><rect x="1686" fill="#c7004b"/><rect x="1706" fill="#c7004a"/><rect x="1726" fill="#c70049"/></g><g transform="translate(0 845)"><rect x="586" fill="#00adc7"/><rect x="606" fill="#00acc7"/><rect x="626" fill="#00abc7"/><rect x="646" fill="#00a9c7"/><rect x="666" fill="#00a7c7"/><rect x="686" fill="#00a5c7"/><rect x="706" fill="#00a3c7"/><rect x="726" fill="#00a0c7"/><rect x="746" fill="#009dc7"/><rect x="766" fill="#009ac7"/><rect x="786" fill="#0095c7"/><rect x="806" fill="#0090c7"/><rect x="826" fill="#0089c7"/><rect x="846" fill="#2c85c7"/><rect x="866" fill="#4c83c7"/><rect x="886" fill="#6181c7"/><rect x="906" fill="#727fc7"/><rect x="926" fill="#827cc7"/><rect x="946" fill="#8f7ac7"/><rect x="966" fill="#9c77c7"/><rect x="986" fill="#a874c7"/><rect x="1006" fill="#b371c7"/><rect x="1026" fill="#be6dc7"/><rect x="1046" fill="#c768c5"/><rect x="1066" fill="#c75fbb"/><rect x="1086" fill="#c756b2"/><rect x="1106" fill="#c74daa"/><rect x="1126" fill="#c745a2"/><rect x="1146" fill="#c73c9c"/><rect x="1166" fill="#c73395"/><rect x="1186" fill="#c7298f"/><rect x="1206" fill="#c71d8a"/><rect x="1226" fill="#c70985"/><rect x="1246" fill="#c70081"/><rect x="1266" fill="#c7007d"/><rect x="1286" fill="#c7007a"/><rect x="1306" fill="#c70077"/><rect x="1326" fill="#c70074"/><rect x="1346" fill="#c70072"/><rect x="1366" fill="#c70070"/><rect x="1386" fill="#c7006d"/><rect x="1406" fill="#c7006b"/><rect x="1426" fill="#c70069"/><rect x="1446" fill="#c70067"/><rect x="1466" fill="#c70066"/><rect x="1486" fill="#c70064"/><rect x="1506" fill="#c70063"/><rect x="1526" fill="#c70061"/><rect x="1546" fill="#c70060"/><rect x="1566" fill="#c7005e"/><rect x="1586" fill="#c7005d"/><rect x="1606" fill="#c7005c"/><rect x="1626" fill="#c7005a"/><rect x="1646" fill="#c70059"/><rect x="1666" fill="#c70058"/><rect x="1686" fill="#c70057"/><rect x="1706" fill="#c70056"/><rect x="1726" fill="#c70055"/></g><g transform="translate(0 865)"><rect x="606" fill="#00a3c7"/><rect x="626" fill="#00a1c7"/><rect x="646" fill="#009ec7"/><rect x="666" fill="#009cc7"/><rect x="686" fill="#0099c7"/><rect x="706" fill="#0096c7"/><rect x="726" fill="#0092c7"/><rect x="746" fill="#008dc7"/><rect x="766" fill="#0088c7"/><rect x="786" fill="#0081c7"/><rect x="806" fill="#0079c7"/><rect x="826" fill="#2271c7"/><rect x="846" fill="#446fc7"/><rect x="866" fill="#5a6cc7"/><rect x="886" fill="#6b69c7"/><rect x="906" fill="#7966c7"/><rect x="926" fill="#8762c7"/><rect x="946" fill="#935ec7"/><rect x="966" fill="#9e5ac7"/><rect x="986" fill="#a956c7"/><rect x="1006" fill="#b450c7"/><rect x="1026" fill="#be4ac7"/><rect x="1046" fill="#c743c6"/><rect x="1066" fill="#c738bd"/><rect x="1086" fill="#c72bb5"/><rect x="1106" fill="#c71cad"/><rect x="1126" fill="#c700a6"/><rect x="1146" fill="#c700a0"/><rect x="1166" fill="#c7009b"/><rect x="1186" fill="#c70096"/><rect x="1206" fill="#c70092"/><rect x="1226" fill="#c7008e"/><rect x="1246" fill="#c7008b"/><rect x="1266" fill="#c70087"/><rect x="1286" fill="#c70084"/><rect x="1306" fill="#c70081"/><rect x="1326" fill="#c7007f"/><rect x="1346" fill="#c7007c"/><rect x="1366" fill="#c7007a"/><rect x="1386" fill="#c70078"/><rect x="1406" fill="#c70076"/><rect x="1426" fill="#c70074"/><rect x="1446" fill="#c70072"/><rect x="1466" fill="#c70070"/><rect x="1486" fill="#c7006e"/><rect x="1506" fill="#c7006d"/><rect x="1526" fill="#c7006b"/><rect x="1546" fill="#c7006a"/><rect x="1566" fill="#c70068"/><rect x="1586" fill="#c70067"/><rect x="1606" fill="#c70066"/></g><g transform="translate(0 885)"><rect x="626" fill="#0096c7"/><rect x="646" fill="#0093c7"/><rect x="666" fill="#0090c7"/><rect x="686" fill="#008cc7"/><rect x="706" fill="#0087c7"/><rect x="726" fill="#0082c7"/><rect x="746" fill="#007bc7"/><rect x="766" fill="#0073c7"/><rect x="786" fill="#0069c7"/><rect x="806" fill="#155dc7"/><rect x="826" fill="#3d59c7"/><rect x="846" fill="#5356c7"/><rect x="866" fill="#6451c7"/><rect x="886" fill="#724dc7"/><rect x="906" fill="#7f48c7"/><rect x="926" fill="#8b42c7"/><rect x="946" fill="#963bc7"/><rect x="966" fill="#a032c7"/><rect x="986" fill="#aa27c7"/><rect x="1006" fill="#b416c7"/><rect x="1026" fill="#bd00c7"/><rect x="1046" fill="#c600c7"/><rect x="1066" fill="#c700bf"/><rect x="1086" fill="#c700b8"/><rect x="1106" fill="#c700b1"/><rect x="1126" fill="#c700ac"/><rect x="1146" fill="#c700a7"/><rect x="1166" fill="#c700a2"/><rect x="1186" fill="#c7009d"/><rect x="1206" fill="#c70099"/><rect x="1226" fill="#c70096"/><rect x="1246" fill="#c70092"/><rect x="1266" fill="#c7008f"/><rect x="1286" fill="#c7008c"/><rect x="1306" fill="#c70089"/><rect x="1326" fill="#c70087"/><rect x="1346" fill="#c70084"/><rect x="1366" fill="#c70082"/><rect x="1386" fill="#c70080"/><rect x="1406" fill="#c7007e"/><rect x="1426" fill="#c7007c"/><rect x="1446" fill="#c7007a"/><rect x="1466" fill="#c70078"/><rect x="1486" fill="#c70076"/></g><g transform="translate(0 905)"><rect x="646" fill="#0086c7"/><rect x="666" fill="#0082c7"/><rect x="686" fill="#007cc7"/><rect x="706" fill="#0076c7"/><rect x="726" fill="#006ec7"/><rect x="746" fill="#0065c7"/><rect x="766" fill="#0058c7"/><rect x="786" fill="#0046c7"/><rect x="806" fill="#3640c7"/><rect x="826" fill="#4d3bc7"/><rect x="846" fill="#5d34c7"/><rect x="866" fill="#6c2bc7"/><rect x="886" fill="#781fc7"/><rect x="906" fill="#840ac7"/><rect x="926" fill="#8f00c7"/><rect x="946" fill="#9a00c7"/><rect x="966" fill="#a400c7"/><rect x="986" fill="#ad00c7"/><rect x="1006" fill="#b600c7"/><rect x="1026" fill="#be00c7"/><rect x="1046" fill="#c500c7"/><rect x="1066" fill="#c700c1"/><rect x="1086" fill="#c700bb"/><rect x="1106" fill="#c700b5"/><rect x="1126" fill="#c700b0"/><rect x="1146" fill="#c700ab"/><rect x="1166" fill="#c700a7"/><rect x="1186" fill="#c700a3"/><rect x="1206" fill="#c7009f"/><rect x="1226" fill="#c7009c"/><rect x="1246" fill="#c70098"/><rect x="1266" fill="#c70095"/><rect x="1286" fill="#c70093"/><rect x="1306" fill="#c70090"/><rect x="1326" fill="#c7008d"/><rect x="1346" fill="#c7008b"/><rect x="1366" fill="#c70089"/></g><g transform="translate(0 925)"><rect x="666" fill="#0072c7"/><rect x="686" fill="#006bc7"/><rect x="706" fill="#0062c7"/><rect x="726" fill="#0056c7"/><rect x="746" fill="#0046c7"/><rect x="766" fill="#002bc7"/><rect x="786" fill="#2f18c7"/><rect x="806" fill="#4700c7"/><rect x="826" fill="#5b00c7"/><rect x="846" fill="#6b00c7"/><rect x="866" fill="#7800c7"/><rect x="886" fill="#8400c7"/><rect x="906" fill="#8e00c7"/><rect x="926" fill="#9700c7"/><rect x="946" fill="#a000c7"/><rect x="966" fill="#a800c7"/><rect x="986" fill="#b000c7"/><rect x="1006" fill="#b700c7"/><rect x="1026" fill="#be00c7"/><rect x="1046" fill="#c500c7"/><rect x="1066" fill="#c700c3"/><rect x="1086" fill="#c700bd"/><rect x="1106" fill="#c700b8"/><rect x="1126" fill="#c700b3"/><rect x="1146" fill="#c700af"/><rect x="1166" fill="#c700ab"/><rect x="1186" fill="#c700a7"/><rect x="1206" fill="#c700a4"/><rect x="1226" fill="#c700a0"/></g><g transform="translate(0 945)"><rect x="686" fill="#0054c7"/><rect x="706" fill="#0046c7"/><rect x="726" fill="#0030c7"/><rect x="746" fill="#1900c7"/><rect x="766" fill="#3e00c7"/><rect x="786" fill="#5200c7"/><rect x="806" fill="#6200c7"/><rect x="826" fill="#6f00c7"/><rect x="846" fill="#7a00c7"/><rect x="866" fill="#8400c7"/><rect x="886" fill="#8d00c7"/><rect x="906" fill="#9500c7"/><rect x="926" fill="#9d00c7"/><rect x="946" fill="#a500c7"/><rect x="966" fill="#ac00c7"/><rect x="986" fill="#b200c7"/><rect x="1006" fill="#b800c7"/><rect x="1026" fill="#be00c7"/><rect x="1046" fill="#c400c7"/><rect x="1066" fill="#c700c4"/><rect x="1086" fill="#c700bf"/><rect x="1106" fill="#c700ba"/></g><g transform="translate(0 965)"><rect x="706" fill="#000dc7"/><rect x="726" fill="#3200c7"/><rect x="746" fill="#4800c7"/><rect x="766" fill="#5800c7"/><rect x="786" fill="#6500c7"/><rect x="806" fill="#7100c7"/><rect x="826" fill="#7b00c7"/><rect x="846" fill="#8400c7"/><rect x="866" fill="#8c00c7"/><rect x="886" fill="#9300c7"/><rect x="906" fill="#9b00c7"/><rect x="926" fill="#a100c7"/><rect x="946" fill="#a800c7"/><rect x="966" fill="#ae00c7"/><rect x="986" fill="#b400c7"/></g><g transform="translate(0 985)"><rect x="746" fill="#4800c7"/><rect x="766" fill="#5800c7"/><rect x="786" fill="#6500c7"/><rect x="806" fill="#7100c7"/><rect x="826" fill="#7b00c7"/><rect x="846" fill="#8400c7"/></g></g><rect x="780" y="590" style="width:460px;height:400px" fill="url(#glow)"/></g><path d="M526.5 443V1005M691.5 443V1005M857.5 443V1005M1022.5 443V1005M1187.5 443V1005M1352.5 443V1005M1518.5 443V1005M1683.5 443V1005M402 920.5H1890M402 864.5H1890M402 808.5H1890M402 752.5H1890M402 695.5H1890M402 639.5H1890M402 583.5H1890M402 527.5H1890M402 471.5H1890" stroke="#3d3d3d" stroke-width="1" fill="none"/><g clip-path="url(#ct)" class="in"><g filter="url(#bl2)"><g transform="translate(0 630)"><rect x="980" fill="#28ff43"/><rect x="990" fill="#29ff3b"/><rect x="1000" fill="#2bff2d"/><rect x="1010" fill="#2cff2c"/><rect x="1020" fill="#2dff2d"/><rect x="1030" fill="#52ff2d"/><rect x="1040" fill="#63ff2d"/><rect x="1050" fill="#6fff2d"/><rect x="1060" fill="#79ff2c"/><rect x="1070" fill="#81ff2b"/></g><g transform="translate(0 640)"><rect x="970" fill="#2aff5e"/><rect x="980" fill="#2cff5c"/><rect x="990" fill="#2eff59"/><rect x="1000" fill="#30ff56"/><rect x="1010" fill="#31ff51"/><rect x="1020" fill="#52ff4b"/><rect x="1030" fill="#65ff41"/><rect x="1040" fill="#72ff33"/><rect x="1050" fill="#7cff32"/><rect x="1060" fill="#85ff32"/><rect x="1070" fill="#8cff31"/><rect x="1080" fill="#93ff2f"/><rect x="1090" fill="#99ff2e"/><rect x="1100" fill="#9fff2c"/></g><g transform="translate(0 650)"><rect x="970" fill="#2fff70"/><rect x="980" fill="#32ff6e"/><rect x="990" fill="#34ff6d"/><rect x="1000" fill="#35ff6b"/><rect x="1010" fill="#52ff68"/><rect x="1020" fill="#67ff65"/><rect x="1030" fill="#75ff61"/><rect x="1040" fill="#7fff5c"/><rect x="1050" fill="#88ff56"/><rect x="1060" fill="#90ff4e"/><rect x="1070" fill="#97ff41"/><rect x="1080" fill="#9dff35"/><rect x="1090" fill="#a3ff33"/><rect x="1100" fill="#a8ff31"/><rect x="1110" fill="#adff2e"/><rect x="1120" fill="#b2ff2c"/><rect x="1130" fill="#b7ff29"/><rect x="1140" fill="#bbff26"/></g><g transform="translate(0 660)"><rect x="960" fill="#31ff7f"/><rect x="970" fill="#34ff7e"/><rect x="980" fill="#37ff7e"/><rect x="990" fill="#39ff7d"/><rect x="1000" fill="#51ff7c"/><rect x="1010" fill="#69ff7a"/><rect x="1020" fill="#77ff78"/><rect x="1030" fill="#83ff76"/><rect x="1040" fill="#8cff72"/><rect x="1050" fill="#94ff6f"/><rect x="1060" fill="#9bff6a"/><rect x="1070" fill="#a1ff64"/><rect x="1080" fill="#a7ff5e"/><rect x="1090" fill="#acff56"/><rect x="1100" fill="#b1ff4b"/><rect x="1110" fill="#b6ff39"/><rect x="1120" fill="#bbff30"/><rect x="1130" fill="#bfff2d"/><rect x="1140" fill="#c4ff2a"/><rect x="1150" fill="#c8ff26"/><rect x="1160" fill="#cdff23"/><rect x="1170" fill="#d1ff1f"/><rect x="1180" fill="#d6ff1c"/></g><g transform="translate(0 670)"><rect x="950" fill="#33ff8c"/><rect x="960" fill="#36ff8c"/><rect x="970" fill="#39ff8c"/><rect x="980" fill="#3cff8b"/><rect x="990" fill="#4eff8b"/><rect x="1000" fill="#6aff8a"/><rect x="1010" fill="#7aff89"/><rect x="1020" fill="#86ff88"/><rect x="1030" fill="#8fff86"/><rect x="1040" fill="#98ff84"/><rect x="1050" fill="#9fff81"/><rect x="1060" fill="#a5ff7d"/><rect x="1070" fill="#abff79"/><rect x="1080" fill="#b0ff75"/><rect x="1090" fill="#b5ff6f"/><rect x="1100" fill="#baff69"/><rect x="1110" fill="#bfff62"/><rect x="1120" fill="#c3ff59"/><rect x="1130" fill="#c8ff4f"/><rect x="1140" fill="#ccff41"/><rect x="1150" fill="#d1ff2a"/><rect x="1160" fill="#d5ff27"/><rect x="1170" fill="#daff23"/><rect x="1180" fill="#deff1f"/><rect x="1190" fill="#e3ff1b"/><rect x="1200" fill="#e8ff18"/><rect x="1210" fill="#edff14"/><rect x="1220" fill="#f2ff11"/></g><g transform="translate(0 680)"><rect x="940" fill="#34ff97"/><rect x="950" fill="#37ff97"/><rect x="960" fill="#3bff98"/><rect x="970" fill="#3eff98"/><rect x="980" fill="#46ff98"/><rect x="990" fill="#6aff98"/><rect x="1000" fill="#7bff98"/><rect x="1010" fill="#88ff97"/><rect x="1020" fill="#92ff96"/><rect x="1030" fill="#9bff94"/><rect x="1040" fill="#a3ff93"/><rect x="1050" fill="#a9ff90"/><rect x="1060" fill="#afff8d"/><rect x="1070" fill="#b5ff8a"/><rect x="1080" fill="#baff86"/><rect x="1090" fill="#beff82"/><rect x="1100" fill="#c3ff7d"/><rect x="1110" fill="#c7ff77"/><rect x="1120" fill="#ccff71"/><rect x="1130" fill="#d0ff6a"/><rect x="1140" fill="#d4ff63"/><rect x="1150" fill="#d9ff5a"/><rect x="1160" fill="#ddff50"/><rect x="1170" fill="#e2ff44"/><rect x="1180" fill="#e7ff33"/><rect x="1190" fill="#ecff1e"/><rect x="1200" fill="#f1ff1a"/><rect x="1210" fill="#f6ff16"/><rect x="1220" fill="#fbff13"/><rect x="1230" fill="#fffe0f"/><rect x="1240" fill="#fff80c"/><rect x="1250" fill="#fff309"/></g><g transform="translate(0 690)"><rect x="940" fill="#38ffa2"/><rect x="950" fill="#3cffa2"/><rect x="960" fill="#40ffa3"/><rect x="970" fill="#44ffa3"/><rect x="980" fill="#69ffa4"/><rect x="990" fill="#7cffa4"/><rect x="1000" fill="#8affa4"/><rect x="1010" fill="#95ffa3"/><rect x="1020" fill="#9effa3"/><rect x="1030" fill="#a6ffa2"/><rect x="1040" fill="#adffa0"/><rect x="1050" fill="#b3ff9e"/><rect x="1060" fill="#b9ff9c"/><rect x="1070" fill="#beff99"/><rect x="1080" fill="#c3ff95"/><rect x="1090" fill="#c7ff92"/><rect x="1100" fill="#ccff8d"/><rect x="1110" fill="#d0ff89"/><rect x="1120" fill="#d4ff83"/><rect x="1130" fill="#d8ff7e"/><rect x="1140" fill="#ddff78"/><rect x="1150" fill="#e1ff71"/><rect x="1160" fill="#e6ff6a"/><rect x="1170" fill="#ebff62"/><rect x="1180" fill="#f0ff5a"/><rect x="1190" fill="#f5ff50"/><rect x="1200" fill="#faff45"/><rect x="1210" fill="#ffff37"/><rect x="1220" fill="#fff920"/><rect x="1230" fill="#fff411"/><rect x="1240" fill="#ffef0e"/><rect x="1250" fill="#ffea0b"/><rect x="1260" fill="#ffe508"/><rect x="1270" fill="#ffe005"/><rect x="1280" fill="#ffdc03"/><rect x="1290" fill="#ffd701"/></g><g transform="translate(0 700)"><rect x="930" fill="#37ffab"/><rect x="940" fill="#3cffac"/><rect x="950" fill="#40ffad"/><rect x="960" fill="#45ffad"/><rect x="970" fill="#67ffae"/><rect x="980" fill="#7dffaf"/><rect x="990" fill="#8bffaf"/><rect x="1000" fill="#97ffaf"/><rect x="1010" fill="#a1ffaf"/><rect x="1020" fill="#aaffaf"/><rect x="1030" fill="#b1ffae"/><rect x="1040" fill="#b7ffad"/><rect x="1050" fill="#bdffab"/><rect x="1060" fill="#c2ffa9"/><rect x="1070" fill="#c7ffa6"/><rect x="1080" fill="#cbffa3"/><rect x="1090" fill="#d0ffa0"/><rect x="1100" fill="#d4ff9c"/><rect x="1110" fill="#d8ff98"/><rect x="1120" fill="#dcff93"/><rect x="1130" fill="#e1ff8e"/><rect x="1140" fill="#e5ff89"/><rect x="1150" fill="#eaff83"/><rect x="1160" fill="#efff7d"/><rect x="1170" fill="#f4ff77"/><rect x="1180" fill="#f9ff70"/><rect x="1190" fill="#feff69"/><rect x="1200" fill="#fffb60"/><rect x="1210" fill="#fff556"/><rect x="1220" fill="#fff04c"/><rect x="1230" fill="#ffeb40"/><rect x="1240" fill="#ffe634"/><rect x="1250" fill="#ffe124"/><rect x="1260" fill="#ffdc0b"/><rect x="1270" fill="#ffd806"/><rect x="1280" fill="#ffd304"/><rect x="1290" fill="#ffce02"/><rect x="1300" fill="#ffca00"/><rect x="1310" fill="#ffc600"/><rect x="1320" fill="#ffc300"/><rect x="1330" fill="#ffbf00"/></g><g transform="translate(0 710)"><rect x="920" fill="#36ffb4"/><rect x="930" fill="#3bffb5"/><rect x="940" fill="#40ffb6"/><rect x="950" fill="#44ffb7"/><rect x="960" fill="#63ffb7"/><rect x="970" fill="#7cffb8"/><rect x="980" fill="#8cffb9"/><rect x="990" fill="#99ffb9"/><rect x="1000" fill="#a3ffba"/><rect x="1010" fill="#acffba"/><rect x="1020" fill="#b4ffba"/><rect x="1030" fill="#bbffb9"/><rect x="1040" fill="#c1ffb8"/><rect x="1050" fill="#c6ffb7"/><rect x="1060" fill="#cbffb5"/><rect x="1070" fill="#d0ffb2"/><rect x="1080" fill="#d4ffb0"/><rect x="1090" fill="#d8ffac"/><rect x="1100" fill="#dcffa9"/><rect x="1110" fill="#e1ffa5"/><rect x="1120" fill="#e5ffa1"/><rect x="1130" fill="#e9ff9d"/><rect x="1140" fill="#eeff98"/><rect x="1150" fill="#f3ff93"/><rect x="1160" fill="#f8ff8e"/><rect x="1170" fill="#fdff89"/><rect x="1180" fill="#fffc82"/><rect x="1190" fill="#fff779"/><rect x="1200" fill="#fff171"/><rect x="1210" fill="#ffec69"/><rect x="1220" fill="#ffe760"/><rect x="1230" fill="#ffe257"/><rect x="1240" fill="#ffdd4e"/><rect x="1250" fill="#ffd845"/><rect x="1260" fill="#ffd33b"/><rect x="1270" fill="#ffcf30"/><rect x="1280" fill="#ffca24"/><rect x="1290" fill="#ffc614"/><rect x="1300" fill="#ffc201"/><rect x="1310" fill="#ffbe00"/><rect x="1320" fill="#ffba00"/><rect x="1330" fill="#ffb700"/><rect x="1340" fill="#ffb300"/><rect x="1350" fill="#ffb000"/><rect x="1360" fill="#ffad00"/><rect x="1370" fill="#ffaa00"/></g><g transform="translate(0 720)"><rect x="910" fill="#34ffbd"/><rect x="920" fill="#39ffbe"/><rect x="930" fill="#3effbf"/><rect x="940" fill="#43ffbf"/><rect x="950" fill="#5dffc0"/><rect x="960" fill="#7affc1"/><rect x="970" fill="#8bffc2"/><rect x="980" fill="#99ffc3"/><rect x="990" fill="#a5ffc4"/><rect x="1000" fill="#afffc4"/><rect x="1010" fill="#b7ffc4"/><rect x="1020" fill="#beffc4"/><rect x="1030" fill="#c5ffc4"/><rect x="1040" fill="#caffc3"/><rect x="1050" fill="#cfffc2"/><rect x="1060" fill="#d4ffc0"/><rect x="1070" fill="#d8ffbe"/><rect x="1080" fill="#dcffbb"/><rect x="1090" fill="#e0ffb8"/><rect x="1100" fill="#e5ffb5"/><rect x="1110" fill="#e9ffb2"/><rect x="1120" fill="#edffae"/><rect x="1130" fill="#f2ffaa"/><rect x="1140" fill="#f7ffa6"/><rect x="1150" fill="#fcffa2"/><rect x="1160" fill="#fffd9c"/><rect x="1170" fill="#fff895"/><rect x="1180" fill="#fff38d"/><rect x="1190" fill="#ffed86"/><rect x="1200" fill="#ffe87e"/><rect x="1210" fill="#ffe376"/><rect x="1220" fill="#ffde6f"/><rect x="1230" fill="#ffd967"/><rect x="1240" fill="#ffd45f"/><rect x="1250" fill="#ffcf57"/><rect x="1260" fill="#ffcb4f"/><rect x="1270" fill="#ffc647"/><rect x="1280" fill="#ffc13f"/><rect x="1290" fill="#ffbd37"/><rect x="1300" fill="#ffb92e"/><rect x="1310" fill="#ffb525"/><rect x="1320" fill="#ffb21b"/><rect x="1330" fill="#ffae0b"/><rect x="1340" fill="#ffab00"/><rect x="1350" fill="#ffa800"/><rect x="1360" fill="#ffa400"/><rect x="1370" fill="#ffa100"/><rect x="1380" fill="#ff9e00"/><rect x="1390" fill="#ff9b00"/><rect x="1400" fill="#ff9900"/><rect x="1410" fill="#ff9600"/></g><g transform="translate(0 730)"><rect x="910" fill="#36ffc6"/><rect x="920" fill="#3cffc7"/><rect x="930" fill="#41ffc8"/><rect x="940" fill="#53ffc9"/><rect x="950" fill="#76ffca"/><rect x="960" fill="#8affcb"/><rect x="970" fill="#99ffcb"/><rect x="980" fill="#a5ffcc"/><rect x="990" fill="#b0ffcd"/><rect x="1000" fill="#b9ffce"/><rect x="1010" fill="#c1ffce"/><rect x="1020" fill="#c8ffce"/><rect x="1030" fill="#ceffce"/><rect x="1040" fill="#d3ffcd"/><rect x="1050" fill="#d8ffcc"/><rect x="1060" fill="#dcffcb"/><rect x="1070" fill="#e1ffc9"/><rect x="1080" fill="#e5ffc6"/><rect x="1090" fill="#e9ffc4"/><rect x="1100" fill="#edffc1"/><rect x="1110" fill="#f1ffbe"/><rect x="1120" fill="#f6ffba"/><rect x="1130" fill="#fbffb7"/><rect x="1140" fill="#fffeb3"/><rect x="1150" fill="#fff9ac"/><rect x="1160" fill="#fff4a5"/><rect x="1170" fill="#ffef9e"/><rect x="1180" fill="#ffea97"/><rect x="1190" fill="#ffe490"/><rect x="1200" fill="#ffdf89"/><rect x="1210" fill="#ffda81"/><rect x="1220" fill="#ffd57a"/><rect x="1230" fill="#ffd073"/><rect x="1240" fill="#ffcb6c"/><rect x="1250" fill="#ffc665"/><rect x="1260" fill="#ffc25e"/><rect x="1270" fill="#ffbd57"/><rect x="1280" fill="#ffb950"/><rect x="1290" fill="#ffb449"/><rect x="1300" fill="#ffb042"/><rect x="1310" fill="#ffac3c"/><rect x="1320" fill="#ffa936"/><rect x="1330" fill="#ffa52f"/><rect x="1340" fill="#ffa228"/><rect x="1350" fill="#ff9f20"/><rect x="1360" fill="#ff9c15"/><rect x="1370" fill="#ff9904"/><rect x="1380" fill="#ff9600"/><rect x="1390" fill="#ff9300"/><rect x="1400" fill="#ff9000"/><rect x="1410" fill="#ff8d00"/><rect x="1420" fill="#ff8b00"/><rect x="1430" fill="#ff8800"/><rect x="1440" fill="#ff8500"/></g><g transform="translate(0 740)"><rect x="900" fill="#33ffcf"/><rect x="910" fill="#38ffd0"/><rect x="920" fill="#3effd0"/><rect x="930" fill="#44ffd1"/><rect x="940" fill="#72ffd2"/><rect x="950" fill="#87ffd3"/><rect x="960" fill="#98ffd4"/><rect x="970" fill="#a5ffd5"/><rect x="980" fill="#b0ffd5"/><rect x="990" fill="#baffd6"/><rect x="1000" fill="#c3ffd7"/><rect x="1010" fill="#cbffd8"/><rect x="1020" fill="#d1ffd8"/><rect x="1030" fill="#d7ffd8"/><rect x="1040" fill="#dcffd7"/><rect x="1050" fill="#e0ffd6"/><rect x="1060" fill="#e5ffd5"/><rect x="1070" fill="#e9ffd3"/><rect x="1080" fill="#edffd1"/><rect x="1090" fill="#f1ffcf"/><rect x="1100" fill="#f5ffcc"/><rect x="1110" fill="#faffc9"/><rect x="1120" fill="#ffffc6"/><rect x="1130" fill="#fffac0"/><rect x="1140" fill="#fff5b9"/><rect x="1150" fill="#fff0b3"/><rect x="1160" fill="#ffebac"/><rect x="1170" fill="#ffe6a5"/><rect x="1180" fill="#ffe19f"/><rect x="1190" fill="#ffdc98"/><rect x="1200" fill="#ffd691"/><rect x="1210" fill="#ffd18b"/><rect x="1220" fill="#ffcc84"/><rect x="1230" fill="#ffc77d"/><rect x="1240" fill="#ffc277"/><rect x="1250" fill="#ffbe70"/><rect x="1260" fill="#ffb969"/><rect x="1270" fill="#ffb463"/><rect x="1280" fill="#ffb05d"/><rect x="1290" fill="#ffab57"/><rect x="1300" fill="#ffa751"/><rect x="1310" fill="#ffa34b"/><rect x="1320" fill="#ffa046"/><rect x="1330" fill="#ff9c41"/><rect x="1340" fill="#ff993c"/><rect x="1350" fill="#ff9637"/><rect x="1360" fill="#ff9331"/><rect x="1370" fill="#ff902b"/><rect x="1380" fill="#ff8d24"/><rect x="1390" fill="#ff8a1b"/><rect x="1400" fill="#ff8710"/><rect x="1410" fill="#ff8500"/><rect x="1420" fill="#ff8200"/><rect x="1430" fill="#ff7f00"/><rect x="1440" fill="#ff7d00"/><rect x="1450" fill="#ff7a00"/><rect x="1460" fill="#ff7700"/><rect x="1470" fill="#ff7500"/><rect x="1480" fill="#ff7200"/></g><g transform="translate(0 750)"><rect x="890" fill="#2fffd8"/><rect x="900" fill="#35ffd9"/><rect x="910" fill="#3affd9"/><rect x="920" fill="#40ffda"/><rect x="930" fill="#6cffda"/><rect x="940" fill="#84ffdb"/><rect x="950" fill="#95ffdc"/><rect x="960" fill="#a4ffdd"/><rect x="970" fill="#b0ffde"/><rect x="980" fill="#bbffde"/><rect x="990" fill="#c4ffdf"/><rect x="1000" fill="#ccffe0"/><rect x="1010" fill="#d4ffe0"/><rect x="1020" fill="#daffe1"/><rect x="1030" fill="#e0ffe1"/><rect x="1040" fill="#e4ffe1"/><rect x="1050" fill="#e9ffe0"/><rect x="1060" fill="#edffdf"/><rect x="1070" fill="#f1ffdd"/><rect x="1080" fill="#f5ffdb"/><rect x="1090" fill="#f9ffd9"/><rect x="1100" fill="#feffd7"/><rect x="1110" fill="#fffbd2"/><rect x="1120" fill="#fff6cb"/><rect x="1130" fill="#fff1c5"/><rect x="1140" fill="#ffecbf"/><rect x="1150" fill="#ffe7b9"/><rect x="1160" fill="#ffe2b2"/><rect x="1170" fill="#ffddac"/><rect x="1180" fill="#ffd8a5"/><rect x="1190" fill="#ffd39f"/><rect x="1200" fill="#ffce99"/><rect x="1210" fill="#ffc992"/><rect x="1220" fill="#ffc38c"/><rect x="1230" fill="#ffbe86"/><rect x="1240" fill="#ffb97f"/><rect x="1250" fill="#ffb479"/><rect x="1260" fill="#ffb073"/><rect x="1270" fill="#ffab6d"/><rect x="1280" fill="#ffa667"/><rect x="1290" fill="#ffa261"/><rect x="1300" fill="#ff9e5c"/><rect x="1310" fill="#ff9a57"/><rect x="1320" fill="#ff9652"/><rect x="1330" fill="#ff934e"/><rect x="1340" fill="#ff904a"/><rect x="1350" fill="#ff8d45"/><rect x="1360" fill="#ff8a41"/><rect x="1370" fill="#ff873c"/><rect x="1380" fill="#ff8437"/><rect x="1390" fill="#ff8132"/><rect x="1400" fill="#ff7e2d"/><rect x="1410" fill="#ff7c26"/><rect x="1420" fill="#ff791f"/><rect x="1430" fill="#ff7617"/><rect x="1440" fill="#ff730a"/><rect x="1450" fill="#ff7100"/><rect x="1460" fill="#ff6e00"/><rect x="1470" fill="#ff6b00"/><rect x="1480" fill="#ff6900"/><rect x="1490" fill="#ff6600"/><rect x="1500" fill="#ff6400"/><rect x="1510" fill="#ff6100"/><rect x="1520" fill="#ff5f00"/></g><g transform="translate(0 760)"><rect x="880" fill="#2bffe2"/><rect x="890" fill="#30ffe2"/><rect x="900" fill="#36ffe2"/><rect x="910" fill="#3cffe3"/><rect x="920" fill="#64ffe3"/><rect x="930" fill="#7fffe4"/><rect x="940" fill="#92ffe4"/><rect x="950" fill="#a2ffe5"/><rect x="960" fill="#afffe6"/><rect x="970" fill="#baffe6"/><rect x="980" fill="#c4ffe7"/><rect x="990" fill="#cdffe8"/><rect x="1000" fill="#d5ffe8"/><rect x="1010" fill="#dcffe9"/><rect x="1020" fill="#e2ffea"/><rect x="1030" fill="#e8ffea"/><rect x="1040" fill="#ecffea"/><rect x="1050" fill="#f0ffe9"/><rect x="1060" fill="#f4ffe8"/><rect x="1070" fill="#f8ffe6"/><rect x="1080" fill="#fdffe5"/><rect x="1090" fill="#fffde1"/><rect x="1100" fill="#fff8db"/><rect x="1110" fill="#fff3d6"/><rect x="1120" fill="#ffeed0"/><rect x="1130" fill="#ffe9ca"/><rect x="1140" fill="#ffe4c4"/><rect x="1150" fill="#ffdfbe"/><rect x="1160" fill="#ffdab8"/><rect x="1170" fill="#ffd4b1"/><rect x="1180" fill="#ffcfab"/><rect x="1190" fill="#ffcaa5"/><rect x="1200" fill="#ffc59f"/><rect x="1210" fill="#ffc099"/><rect x="1220" fill="#ffba93"/><rect x="1230" fill="#ffb58d"/><rect x="1240" fill="#ffb087"/><rect x="1250" fill="#ffab81"/><rect x="1260" fill="#ffa67b"/><rect x="1270" fill="#ffa175"/><rect x="1280" fill="#ff9d70"/><rect x="1290" fill="#ff986a"/><rect x="1300" fill="#ff9465"/><rect x="1310" fill="#ff9060"/><rect x="1320" fill="#ff8d5c"/><rect x="1330" fill="#ff8958"/><rect x="1340" fill="#ff8655"/><rect x="1350" fill="#ff8351"/><rect x="1360" fill="#ff804d"/><rect x="1370" fill="#ff7d49"/><rect x="1380" fill="#ff7a45"/><rect x="1390" fill="#ff7741"/><rect x="1400" fill="#ff753c"/><rect x="1410" fill="#ff7238"/><rect x="1420" fill="#ff6f33"/><rect x="1430" fill="#ff6c2e"/><rect x="1440" fill="#ff6929"/><rect x="1450" fill="#ff6723"/><rect x="1460" fill="#ff641c"/><rect x="1470" fill="#ff6113"/><rect x="1480" fill="#ff5f05"/><rect x="1490" fill="#ff5c00"/><rect x="1500" fill="#ff5900"/><rect x="1510" fill="#ff5600"/><rect x="1520" fill="#ff5400"/><rect x="1530" fill="#ff5100"/><rect x="1540" fill="#ff4e00"/><rect x="1550" fill="#ff4b00"/><rect x="1560" fill="#ff4900"/></g><g transform="translate(0 770)"><rect x="880" fill="#2cffec"/><rect x="890" fill="#31ffec"/><rect x="900" fill="#37ffed"/><rect x="910" fill="#5affed"/><rect x="920" fill="#7affed"/><rect x="930" fill="#8fffee"/><rect x="940" fill="#9fffee"/><rect x="950" fill="#adffee"/><rect x="960" fill="#b9ffef"/><rect x="970" fill="#c4ffef"/><rect x="980" fill="#cdfff0"/><rect x="990" fill="#d6fff0"/><rect x="1000" fill="#defff1"/><rect x="1010" fill="#e4fff1"/><rect x="1020" fill="#eafff2"/><rect x="1030" fill="#f0fff2"/><rect x="1040" fill="#f4fff2"/><rect x="1050" fill="#f8fff1"/><rect x="1060" fill="#fcfff1"/><rect x="1070" fill="#fffeee"/><rect x="1080" fill="#fff9e9"/><rect x="1090" fill="#fff4e4"/><rect x="1100" fill="#fff0df"/><rect x="1110" fill="#ffebd9"/><rect x="1120" fill="#ffe6d3"/><rect x="1130" fill="#ffe1ce"/><rect x="1140" fill="#ffdbc8"/><rect x="1150" fill="#ffd6c2"/><rect x="1160" fill="#ffd1bc"/><rect x="1170" fill="#ffccb6"/><rect x="1180" fill="#ffc6b0"/><rect x="1190" fill="#ffc1aa"/><rect x="1200" fill="#ffbca5"/><rect x="1210" fill="#ffb69f"/><rect x="1220" fill="#ffb199"/><rect x="1230" fill="#ffac93"/><rect x="1240" fill="#ffa78d"/><rect x="1250" fill="#ffa288"/><rect x="1260" fill="#ff9d82"/><rect x="1270" fill="#ff987d"/><rect x="1280" fill="#ff9377"/><rect x="1290" fill="#ff8e72"/><rect x="1300" fill="#ff8a6d"/><rect x="1310" fill="#ff8669"/><rect x="1320" fill="#ff8265"/><rect x="1330" fill="#ff7f61"/><rect x="1340" fill="#ff7c5e"/><rect x="1350" fill="#ff795a"/><rect x="1360" fill="#ff7657"/><rect x="1370" fill="#ff7353"/><rect x="1380" fill="#ff7050"/><rect x="1390" fill="#ff6d4c"/><rect x="1400" fill="#ff6a48"/><rect x="1410" fill="#ff6744"/><rect x="1420" fill="#ff6441"/><rect x="1430" fill="#ff613d"/><rect x="1440" fill="#ff5f39"/><rect x="1450" fill="#ff5c34"/><rect x="1460" fill="#ff5930"/><rect x="1470" fill="#ff562b"/><rect x="1480" fill="#ff5325"/><rect x="1490" fill="#ff501f"/><rect x="1500" fill="#ff4d18"/><rect x="1510" fill="#ff4a0e"/><rect x="1520" fill="#ff4700"/><rect x="1530" fill="#ff4400"/><rect x="1540" fill="#ff4100"/><rect x="1550" fill="#ff3e00"/><rect x="1560" fill="#ff3a00"/><rect x="1570" fill="#ff3700"/><rect x="1580" fill="#ff3300"/><rect x="1590" fill="#ff3000"/></g><g transform="translate(0 780)"><rect x="870" fill="#27fff7"/><rect x="880" fill="#2cfff7"/><rect x="890" fill="#31fff7"/><rect x="900" fill="#4efff8"/><rect x="910" fill="#74fff8"/><rect x="920" fill="#8bfff8"/><rect x="930" fill="#9cfff8"/><rect x="940" fill="#abfff8"/><rect x="950" fill="#b8fff8"/><rect x="960" fill="#c3fff8"/><rect x="970" fill="#cdfff9"/><rect x="980" fill="#d6fff9"/><rect x="990" fill="#dffff9"/><rect x="1000" fill="#e6fff9"/><rect x="1010" fill="#ecfffa"/><rect x="1020" fill="#f2fffa"/><rect x="1030" fill="#f7fffa"/><rect x="1040" fill="#fbfffa"/><rect x="1050" fill="#fffff9"/><rect x="1060" fill="#fffaf5"/><rect x="1070" fill="#fff6f0"/><rect x="1080" fill="#fff1eb"/><rect x="1090" fill="#ffede6"/><rect x="1100" fill="#ffe8e1"/><rect x="1110" fill="#ffe3dc"/><rect x="1120" fill="#ffddd6"/><rect x="1130" fill="#ffd8d1"/><rect x="1140" fill="#ffd3cb"/><rect x="1150" fill="#ffcdc6"/><rect x="1160" fill="#ffc8c0"/><rect x="1170" fill="#ffc3ba"/><rect x="1180" fill="#ffbdb5"/><rect x="1190" fill="#ffb8af"/><rect x="1200" fill="#ffb2a9"/><rect x="1210" fill="#ffada4"/><rect x="1220" fill="#ffa79e"/><rect x="1230" fill="#ffa298"/><rect x="1240" fill="#ff9d93"/><rect x="1250" fill="#ff978e"/><rect x="1260" fill="#ff9288"/><rect x="1270" fill="#ff8d83"/><rect x="1280" fill="#ff887e"/><rect x="1290" fill="#ff8479"/><rect x="1300" fill="#ff7f74"/><rect x="1310" fill="#ff7b70"/><rect x="1320" fill="#ff776c"/><rect x="1330" fill="#ff7469"/><rect x="1340" fill="#ff7166"/><rect x="1350" fill="#ff6e62"/><rect x="1360" fill="#ff6b5f"/><rect x="1370" fill="#ff685c"/><rect x="1380" fill="#ff6558"/><rect x="1390" fill="#ff6255"/><rect x="1400" fill="#ff5f52"/><rect x="1410" fill="#ff5b4e"/><rect x="1420" fill="#ff584b"/><rect x="1430" fill="#ff5548"/><rect x="1440" fill="#ff5244"/><rect x="1450" fill="#ff4f40"/><rect x="1460" fill="#ff4c3d"/><rect x="1470" fill="#ff4939"/><rect x="1480" fill="#ff4635"/><rect x="1490" fill="#ff4231"/><rect x="1500" fill="#ff3f2c"/><rect x="1510" fill="#ff3b27"/><rect x="1520" fill="#ff3822"/><rect x="1530" fill="#ff341c"/><rect x="1540" fill="#ff3014"/><rect x="1550" fill="#ff2c0a"/><rect x="1560" fill="#ff2700"/><rect x="1570" fill="#ff2200"/><rect x="1580" fill="#ff1d00"/><rect x="1590" fill="#ff1600"/></g><g transform="translate(0 790)"><rect x="860" fill="#22fbff"/><rect x="870" fill="#27fbff"/><rect x="880" fill="#2cfbff"/><rect x="890" fill="#38fbff"/><rect x="900" fill="#6cfbff"/><rect x="910" fill="#85fbff"/><rect x="920" fill="#97fbff"/><rect x="930" fill="#a7fbff"/><rect x="940" fill="#b4fbff"/><rect x="950" fill="#c0fbff"/><rect x="960" fill="#cbfbff"/><rect x="970" fill="#d4fbff"/><rect x="980" fill="#ddfcff"/><rect x="990" fill="#e4fcff"/><rect x="1000" fill="#ebfcff"/><rect x="1010" fill="#f1fcff"/><rect x="1020" fill="#f7fcff"/><rect x="1030" fill="#fcfcff"/><rect x="1040" fill="#fffcfe"/><rect x="1050" fill="#fff7fa"/><rect x="1060" fill="#fff3f6"/><rect x="1070" fill="#ffeef2"/><rect x="1080" fill="#ffeaed"/><rect x="1090" fill="#ffe5e8"/><rect x="1100" fill="#ffdfe3"/><rect x="1110" fill="#ffdade"/><rect x="1120" fill="#ffd5d9"/><rect x="1130" fill="#ffcfd4"/><rect x="1140" fill="#ffcace"/><rect x="1150" fill="#ffc4c9"/><rect x="1160" fill="#ffbfc4"/><rect x="1170" fill="#ffb9be"/><rect x="1180" fill="#ffb4b9"/><rect x="1190" fill="#ffaeb3"/><rect x="1200" fill="#ffa8ae"/><rect x="1210" fill="#ffa3a8"/><rect x="1220" fill="#ff9da3"/><rect x="1230" fill="#ff989d"/><rect x="1240" fill="#ff9298"/><rect x="1250" fill="#ff8d93"/><rect x="1260" fill="#ff878e"/><rect x="1270" fill="#ff8289"/><rect x="1280" fill="#ff7d84"/><rect x="1290" fill="#ff787f"/><rect x="1300" fill="#ff747b"/><rect x="1310" fill="#ff6f76"/><rect x="1320" fill="#ff6c73"/><rect x="1330" fill="#ff6870"/><rect x="1340" fill="#ff656c"/><rect x="1350" fill="#ff6269"/><rect x="1360" fill="#ff5e66"/><rect x="1370" fill="#ff5b63"/><rect x="1380" fill="#ff5860"/><rect x="1390" fill="#ff555d"/><rect x="1400" fill="#ff515a"/><rect x="1410" fill="#ff4e57"/><rect x="1420" fill="#ff4b54"/><rect x="1430" fill="#ff4751"/><rect x="1440" fill="#ff444d"/><rect x="1450" fill="#ff404a"/><rect x="1460" fill="#ff3c47"/><rect x="1470" fill="#ff3944"/><rect x="1480" fill="#ff3540"/><rect x="1490" fill="#ff303d"/><rect x="1500" fill="#ff2c39"/><rect x="1510" fill="#ff2736"/><rect x="1520" fill="#ff2232"/><rect x="1530" fill="#ff1c2e"/><rect x="1540" fill="#ff1429"/><rect x="1550" fill="#ff0924"/><rect x="1560" fill="#ff001f"/><rect x="1570" fill="#ff0019"/><rect x="1580" fill="#ff0011"/><rect x="1590" fill="#ff0006"/></g><g transform="translate(0 800)"><rect x="860" fill="#21efff"/><rect x="870" fill="#26efff"/><rect x="880" fill="#2cefff"/><rect x="890" fill="#61efff"/><rect x="900" fill="#7befff"/><rect x="910" fill="#8ff0ff"/><rect x="920" fill="#9ff0ff"/><rect x="930" fill="#acf0ff"/><rect x="940" fill="#b9f1ff"/><rect x="950" fill="#c3f1ff"/><rect x="960" fill="#cdf1ff"/><rect x="970" fill="#d6f2ff"/><rect x="980" fill="#def2ff"/><rect x="990" fill="#e5f2ff"/><rect x="1000" fill="#ecf3ff"/><rect x="1010" fill="#f1f3ff"/><rect x="1020" fill="#f6f4ff"/><rect x="1030" fill="#fbf4ff"/><rect x="1040" fill="#fff4ff"/><rect x="1050" fill="#fff0fb"/><rect x="1060" fill="#ffebf7"/><rect x="1070" fill="#ffe6f3"/><rect x="1080" fill="#ffe1ee"/><rect x="1090" fill="#ffdcea"/><rect x="1100" fill="#ffd7e5"/><rect x="1110" fill="#ffd1e0"/><rect x="1120" fill="#ffccdb"/><rect x="1130" fill="#ffc6d6"/><rect x="1140" fill="#ffc1d1"/><rect x="1150" fill="#ffbbcc"/><rect x="1160" fill="#ffb5c6"/><rect x="1170" fill="#ffafc1"/><rect x="1180" fill="#ffa9bc"/><rect x="1190" fill="#ffa4b7"/><rect x="1200" fill="#ff9eb1"/><rect x="1210" fill="#ff98ac"/><rect x="1220" fill="#ff92a7"/><rect x="1230" fill="#ff8ca2"/><rect x="1240" fill="#ff879d"/><rect x="1250" fill="#ff8197"/><rect x="1260" fill="#ff7c93"/><rect x="1270" fill="#ff768e"/><rect x="1280" fill="#ff7189"/><rect x="1290" fill="#ff6c84"/><rect x="1300" fill="#ff6780"/><rect x="1310" fill="#ff627c"/><rect x="1320" fill="#ff5e79"/><rect x="1330" fill="#ff5b76"/><rect x="1340" fill="#ff5773"/><rect x="1350" fill="#ff5470"/><rect x="1360" fill="#ff506d"/><rect x="1370" fill="#ff4d6a"/><rect x="1380" fill="#ff4967"/><rect x="1390" fill="#ff4564"/><rect x="1400" fill="#ff4261"/><rect x="1410" fill="#ff3e5e"/><rect x="1420" fill="#ff3a5b"/><rect x="1430" fill="#ff3558"/><rect x="1440" fill="#ff3155"/><rect x="1450" fill="#ff2c53"/><rect x="1460" fill="#ff2750"/><rect x="1470" fill="#ff214d"/><rect x="1480" fill="#ff1a4a"/><rect x="1490" fill="#ff1247"/><rect x="1500" fill="#ff0543"/><rect x="1510" fill="#ff0040"/><rect x="1520" fill="#ff003d"/><rect x="1530" fill="#ff003a"/><rect x="1540" fill="#ff0036"/><rect x="1550" fill="#ff0033"/><rect x="1560" fill="#ff002f"/><rect x="1570" fill="#ff002b"/><rect x="1580" fill="#ff0026"/><rect x="1590" fill="#ff0022"/></g><g transform="translate(0 810)"><rect x="850" fill="#1ce3ff"/><rect x="860" fill="#21e3ff"/><rect x="870" fill="#26e3ff"/><rect x="880" fill="#55e3ff"/><rect x="890" fill="#71e4ff"/><rect x="900" fill="#86e4ff"/><rect x="910" fill="#96e4ff"/><rect x="920" fill="#a4e5ff"/><rect x="930" fill="#b1e5ff"/><rect x="940" fill="#bce6ff"/><rect x="950" fill="#c6e6ff"/><rect x="960" fill="#cfe7ff"/><rect x="970" fill="#d7e8ff"/><rect x="980" fill="#dfe8ff"/><rect x="990" fill="#e5e9ff"/><rect x="1000" fill="#ece9ff"/><rect x="1010" fill="#f1eaff"/><rect x="1020" fill="#f6ebff"/><rect x="1030" fill="#faebff"/><rect x="1040" fill="#ffebff"/><rect x="1050" fill="#ffe7fc"/><rect x="1060" fill="#ffe2f8"/><rect x="1070" fill="#ffdef3"/><rect x="1080" fill="#ffd8ef"/><rect x="1090" fill="#ffd3eb"/><rect x="1100" fill="#ffcee6"/><rect x="1110" fill="#ffc8e2"/><rect x="1120" fill="#ffc2dd"/><rect x="1130" fill="#ffbcd8"/><rect x="1140" fill="#ffb7d3"/><rect x="1150" fill="#ffb1ce"/><rect x="1160" fill="#ffabc9"/><rect x="1170" fill="#ffa5c4"/><rect x="1180" fill="#ff9ebf"/><rect x="1190" fill="#ff98ba"/><rect x="1200" fill="#ff92b5"/><rect x="1210" fill="#ff8cb0"/><rect x="1220" fill="#ff86ab"/><rect x="1230" fill="#ff80a6"/><rect x="1240" fill="#ff7aa1"/><rect x="1250" fill="#ff749c"/><rect x="1260" fill="#ff6e97"/><rect x="1270" fill="#ff6992"/><rect x="1280" fill="#ff638e"/><rect x="1290" fill="#ff5e89"/><rect x="1300" fill="#ff5885"/><rect x="1310" fill="#ff5381"/><rect x="1320" fill="#ff4f7e"/><rect x="1330" fill="#ff4b7b"/><rect x="1340" fill="#ff4778"/><rect x="1350" fill="#ff4375"/><rect x="1360" fill="#ff3f72"/><rect x="1370" fill="#ff3b70"/><rect x="1380" fill="#ff366d"/><rect x="1390" fill="#ff326a"/><rect x="1400" fill="#ff2c67"/><rect x="1410" fill="#ff2765"/><rect x="1420" fill="#ff2162"/><rect x="1430" fill="#ff195f"/><rect x="1440" fill="#ff0f5c"/><rect x="1450" fill="#ff005a"/><rect x="1460" fill="#ff0057"/><rect x="1470" fill="#ff0054"/><rect x="1480" fill="#ff0051"/><rect x="1490" fill="#ff004f"/><rect x="1500" fill="#ff004c"/><rect x="1510" fill="#ff0049"/><rect x="1520" fill="#ff0046"/><rect x="1530" fill="#ff0043"/><rect x="1540" fill="#ff0040"/><rect x="1550" fill="#ff003d"/><rect x="1560" fill="#ff003a"/><rect x="1570" fill="#ff0037"/><rect x="1580" fill="#ff0033"/><rect x="1590" fill="#ff0030"/></g><g transform="translate(0 820)"><rect x="840" fill="#17d7ff"/><rect x="850" fill="#1bd7ff"/><rect x="860" fill="#20d7ff"/><rect x="870" fill="#48d7ff"/><rect x="880" fill="#68d8ff"/><rect x="890" fill="#7dd8ff"/><rect x="900" fill="#8ed9ff"/><rect x="910" fill="#9cd9ff"/><rect x="920" fill="#a9daff"/><rect x="930" fill="#b4daff"/><rect x="940" fill="#bfdbff"/><rect x="950" fill="#c8dcff"/><rect x="960" fill="#d0dcff"/><rect x="970" fill="#d8ddff"/><rect x="980" fill="#dfdeff"/><rect x="990" fill="#e6dfff"/><rect x="1000" fill="#ebe0ff"/><rect x="1010" fill="#f1e0ff"/><rect x="1020" fill="#f5e1ff"/><rect x="1030" fill="#fae1ff"/><rect x="1040" fill="#fee0ff"/><rect x="1050" fill="#ffddfc"/><rect x="1060" fill="#ffd9f8"/><rect x="1070" fill="#ffd4f4"/><rect x="1080" fill="#ffcff0"/><rect x="1090" fill="#ffc9ec"/><rect x="1100" fill="#ffc3e7"/><rect x="1110" fill="#ffbee3"/><rect x="1120" fill="#ffb8de"/><rect x="1130" fill="#ffb2da"/><rect x="1140" fill="#ffacd5"/><rect x="1150" fill="#ffa5d0"/><rect x="1160" fill="#ff9fcb"/><rect x="1170" fill="#ff99c6"/><rect x="1180" fill="#ff92c2"/><rect x="1190" fill="#ff8cbd"/><rect x="1200" fill="#ff85b8"/><rect x="1210" fill="#ff7fb3"/><rect x="1220" fill="#ff79ae"/><rect x="1230" fill="#ff72a9"/><rect x="1240" fill="#ff6ca4"/><rect x="1250" fill="#ff65a0"/><rect x="1260" fill="#ff5f9b"/><rect x="1270" fill="#ff5996"/><rect x="1280" fill="#ff5392"/><rect x="1290" fill="#ff4d8e"/><rect x="1300" fill="#ff478a"/><rect x="1310" fill="#ff4186"/><rect x="1320" fill="#ff3c83"/><rect x="1330" fill="#ff3780"/><rect x="1340" fill="#ff327d"/><rect x="1350" fill="#ff2d7b"/><rect x="1360" fill="#ff2778"/><rect x="1370" fill="#ff2075"/><rect x="1380" fill="#ff1772"/><rect x="1390" fill="#ff0b70"/><rect x="1400" fill="#ff006d"/><rect x="1410" fill="#ff006a"/><rect x="1420" fill="#ff0068"/><rect x="1430" fill="#ff0065"/><rect x="1440" fill="#ff0063"/><rect x="1450" fill="#ff0060"/><rect x="1460" fill="#ff005d"/><rect x="1470" fill="#ff005b"/><rect x="1480" fill="#ff0058"/><rect x="1490" fill="#ff0056"/><rect x="1500" fill="#ff0053"/><rect x="1510" fill="#ff0050"/><rect x="1520" fill="#ff004e"/><rect x="1530" fill="#ff004b"/><rect x="1540" fill="#ff0049"/><rect x="1550" fill="#ff0046"/></g><g transform="translate(0 830)"><rect x="830" fill="#12caff"/><rect x="840" fill="#16cbff"/><rect x="850" fill="#1acbff"/><rect x="860" fill="#3acbff"/><rect x="870" fill="#5eccff"/><rect x="880" fill="#74ccff"/><rect x="890" fill="#85cdff"/><rect x="900" fill="#94cdff"/><rect x="910" fill="#a1ceff"/><rect x="920" fill="#adceff"/><rect x="930" fill="#b7cfff"/><rect x="940" fill="#c1d0ff"/><rect x="950" fill="#c9d1ff"/><rect x="960" fill="#d1d2ff"/><rect x="970" fill="#d9d2ff"/><rect x="980" fill="#dfd3ff"/><rect x="990" fill="#e6d4ff"/><rect x="1000" fill="#ebd5ff"/><rect x="1010" fill="#f0d5ff"/><rect x="1020" fill="#f5d6ff"/><rect x="1030" fill="#f9d5ff"/><rect x="1040" fill="#fdd5ff"/><rect x="1050" fill="#ffd2fd"/><rect x="1060" fill="#ffcdf9"/><rect x="1070" fill="#ffc9f5"/><rect x="1080" fill="#ffc3f1"/><rect x="1090" fill="#ffbeed"/><rect x="1100" fill="#ffb8e8"/><rect x="1110" fill="#ffb2e4"/><rect x="1120" fill="#fface0"/><rect x="1130" fill="#ffa6db"/><rect x="1140" fill="#ff9fd7"/><rect x="1150" fill="#ff99d2"/><rect x="1160" fill="#ff92cd"/><rect x="1170" fill="#ff8bc9"/><rect x="1180" fill="#ff85c4"/><rect x="1190" fill="#ff7ebf"/><rect x="1200" fill="#ff77ba"/><rect x="1210" fill="#ff70b6"/><rect x="1220" fill="#ff69b1"/><rect x="1230" fill="#ff62ac"/><rect x="1240" fill="#ff5ba8"/><rect x="1250" fill="#ff53a3"/><rect x="1260" fill="#ff4c9f"/><rect x="1270" fill="#ff459a"/><rect x="1280" fill="#ff3e96"/><rect x="1290" fill="#ff3692"/><rect x="1300" fill="#ff2f8e"/><rect x="1310" fill="#ff278b"/><rect x="1320" fill="#ff1f88"/><rect x="1330" fill="#ff1585"/><rect x="1340" fill="#ff0682"/><rect x="1350" fill="#ff007f"/><rect x="1360" fill="#ff007d"/><rect x="1370" fill="#ff007a"/><rect x="1380" fill="#ff0077"/><rect x="1390" fill="#ff0075"/><rect x="1400" fill="#ff0072"/><rect x="1410" fill="#ff0070"/><rect x="1420" fill="#ff006d"/><rect x="1430" fill="#ff006b"/><rect x="1440" fill="#ff0068"/><rect x="1450" fill="#ff0066"/><rect x="1460" fill="#ff0063"/><rect x="1470" fill="#ff0061"/><rect x="1480" fill="#ff005e"/><rect x="1490" fill="#ff005c"/></g><g transform="translate(0 840)"><rect x="830" fill="#11beff"/><rect x="840" fill="#15beff"/><rect x="850" fill="#28bfff"/><rect x="860" fill="#53bfff"/><rect x="870" fill="#6bbfff"/><rect x="880" fill="#7dc0ff"/><rect x="890" fill="#8cc1ff"/><rect x="900" fill="#99c1ff"/><rect x="910" fill="#a5c2ff"/><rect x="920" fill="#b0c3ff"/><rect x="930" fill="#b9c3ff"/><rect x="940" fill="#c2c4ff"/><rect x="950" fill="#cbc5ff"/><rect x="960" fill="#d2c6ff"/><rect x="970" fill="#d9c7ff"/><rect x="980" fill="#dfc8ff"/><rect x="990" fill="#e5c8ff"/><rect x="1000" fill="#ebc9ff"/><rect x="1010" fill="#f0c9ff"/><rect x="1020" fill="#f4c9ff"/><rect x="1030" fill="#f9c9ff"/><rect x="1040" fill="#fdc8ff"/><rect x="1050" fill="#ffc5fd"/><rect x="1060" fill="#ffc1f9"/><rect x="1070" fill="#ffbcf5"/><rect x="1080" fill="#ffb7f1"/><rect x="1090" fill="#ffb1ed"/><rect x="1100" fill="#ffabe9"/><rect x="1110" fill="#ffa5e5"/><rect x="1120" fill="#ff9ee1"/><rect x="1130" fill="#ff98dc"/><rect x="1140" fill="#ff91d8"/><rect x="1150" fill="#ff8ad4"/><rect x="1160" fill="#ff83cf"/><rect x="1170" fill="#ff7bcb"/><rect x="1180" fill="#ff74c6"/><rect x="1190" fill="#ff6cc1"/><rect x="1200" fill="#ff65bd"/><rect x="1210" fill="#ff5db8"/><rect x="1220" fill="#ff55b4"/><rect x="1230" fill="#ff4caf"/><rect x="1240" fill="#ff43ab"/><rect x="1250" fill="#ff3aa6"/><rect x="1260" fill="#ff30a2"/><rect x="1270" fill="#ff259e"/><rect x="1280" fill="#ff189a"/><rect x="1290" fill="#ff0396"/><rect x="1300" fill="#ff0192"/><rect x="1310" fill="#ff008f"/><rect x="1320" fill="#ff008c"/><rect x="1330" fill="#ff0089"/><rect x="1340" fill="#ff0086"/><rect x="1350" fill="#ff0084"/><rect x="1360" fill="#ff0081"/><rect x="1370" fill="#ff007f"/><rect x="1380" fill="#ff007c"/><rect x="1390" fill="#ff0079"/><rect x="1400" fill="#ff0077"/><rect x="1410" fill="#ff0075"/><rect x="1420" fill="#ff0072"/><rect x="1430" fill="#ff0070"/><rect x="1440" fill="#ff006d"/></g><g transform="translate(0 850)"><rect x="820" fill="#0db2ff"/><rect x="830" fill="#10b2ff"/><rect x="840" fill="#14b2ff"/><rect x="850" fill="#49b2ff"/><rect x="860" fill="#62b3ff"/><rect x="870" fill="#74b3ff"/><rect x="880" fill="#84b3ff"/><rect x="890" fill="#91b4ff"/><rect x="900" fill="#9db5ff"/><rect x="910" fill="#a8b5ff"/><rect x="920" fill="#b2b6ff"/><rect x="930" fill="#bbb7ff"/><rect x="940" fill="#c4b8ff"/><rect x="950" fill="#cbb9ff"/><rect x="960" fill="#d3b9ff"/><rect x="970" fill="#d9baff"/><rect x="980" fill="#dfbbff"/><rect x="990" fill="#e5bbff"/><rect x="1000" fill="#eabcff"/><rect x="1010" fill="#efbcff"/><rect x="1020" fill="#f4bcff"/><rect x="1030" fill="#f8bbff"/><rect x="1040" fill="#fcbaff"/><rect x="1050" fill="#ffb7fe"/><rect x="1060" fill="#ffb2fa"/><rect x="1070" fill="#ffadf6"/><rect x="1080" fill="#ffa8f2"/><rect x="1090" fill="#ffa2ee"/><rect x="1100" fill="#ff9cea"/><rect x="1110" fill="#ff95e6"/><rect x="1120" fill="#ff8ee2"/><rect x="1130" fill="#ff87de"/><rect x="1140" fill="#ff80d9"/><rect x="1150" fill="#ff78d5"/><rect x="1160" fill="#ff70d1"/><rect x="1170" fill="#ff67cc"/><rect x="1180" fill="#ff5ec8"/><rect x="1190" fill="#ff55c3"/><rect x="1200" fill="#ff4bbf"/><rect x="1210" fill="#ff40ba"/><rect x="1220" fill="#ff34b6"/><rect x="1230" fill="#ff23b2"/><rect x="1240" fill="#ff12ad"/><rect x="1250" fill="#ff0fa9"/><rect x="1260" fill="#ff0ba5"/><rect x="1270" fill="#ff08a1"/><rect x="1280" fill="#ff059d"/><rect x="1290" fill="#ff0399"/><rect x="1300" fill="#ff0196"/><rect x="1310" fill="#ff0092"/><rect x="1320" fill="#ff0090"/><rect x="1330" fill="#ff008d"/><rect x="1340" fill="#ff008a"/><rect x="1350" fill="#ff0088"/><rect x="1360" fill="#ff0085"/><rect x="1370" fill="#ff0083"/><rect x="1380" fill="#ff0080"/><rect x="1390" fill="#ff007e"/></g><g transform="translate(0 860)"><rect x="810" fill="#08a5ff"/><rect x="820" fill="#0ba5ff"/><rect x="830" fill="#0fa5ff"/><rect x="840" fill="#3ea5ff"/><rect x="850" fill="#59a5ff"/><rect x="860" fill="#6ca5ff"/><rect x="870" fill="#7ca6ff"/><rect x="880" fill="#89a6ff"/><rect x="890" fill="#96a7ff"/><rect x="900" fill="#a1a7ff"/><rect x="910" fill="#aba8ff"/><rect x="920" fill="#b4a9ff"/><rect x="930" fill="#bda9ff"/><rect x="940" fill="#c5aaff"/><rect x="950" fill="#ccabff"/><rect x="960" fill="#d3abff"/><rect x="970" fill="#d9acff"/><rect x="980" fill="#dfadff"/><rect x="990" fill="#e5adff"/><rect x="1000" fill="#eaadff"/><rect x="1010" fill="#efadff"/><rect x="1020" fill="#f3acff"/><rect x="1030" fill="#f8abff"/><rect x="1040" fill="#fca9ff"/><rect x="1050" fill="#ffa6fe"/><rect x="1060" fill="#ffa1fa"/><rect x="1070" fill="#ff9cf6"/><rect x="1080" fill="#ff96f2"/><rect x="1090" fill="#ff90ef"/><rect x="1100" fill="#ff89eb"/><rect x="1110" fill="#ff81e7"/><rect x="1120" fill="#ff79e3"/><rect x="1130" fill="#ff71df"/><rect x="1140" fill="#ff68da"/><rect x="1150" fill="#ff5dd6"/><rect x="1160" fill="#ff52d2"/><rect x="1170" fill="#ff45ce"/><rect x="1180" fill="#ff31c9"/><rect x="1190" fill="#ff26c5"/><rect x="1200" fill="#ff22c1"/><rect x="1210" fill="#ff1dbd"/><rect x="1220" fill="#ff19b8"/><rect x="1230" fill="#ff15b4"/><rect x="1240" fill="#ff11b0"/><rect x="1250" fill="#ff0dac"/><rect x="1260" fill="#ff0aa8"/><rect x="1270" fill="#ff07a4"/><rect x="1280" fill="#ff05a0"/><rect x="1290" fill="#ff029c"/><rect x="1300" fill="#ff0199"/><rect x="1310" fill="#ff0096"/><rect x="1320" fill="#ff0093"/><rect x="1330" fill="#ff0091"/></g><g transform="translate(0 870)"><rect x="800" fill="#0598ff"/><rect x="810" fill="#0798ff"/><rect x="820" fill="#0a97ff"/><rect x="830" fill="#3397ff"/><rect x="840" fill="#5097ff"/><rect x="850" fill="#6497ff"/><rect x="860" fill="#7497ff"/><rect x="870" fill="#8298ff"/><rect x="880" fill="#8e98ff"/><rect x="890" fill="#9998ff"/><rect x="900" fill="#a499ff"/><rect x="910" fill="#ad99ff"/><rect x="920" fill="#b69aff"/><rect x="930" fill="#be9aff"/><rect x="940" fill="#c69bff"/><rect x="950" fill="#cd9bff"/><rect x="960" fill="#d39cff"/><rect x="970" fill="#d99cff"/><rect x="980" fill="#df9cff"/><rect x="990" fill="#e49cff"/><rect x="1000" fill="#e99cff"/><rect x="1010" fill="#ee9bff"/><rect x="1020" fill="#f399ff"/><rect x="1030" fill="#f798ff"/><rect x="1040" fill="#fb95ff"/><rect x="1050" fill="#ff92ff"/><rect x="1060" fill="#ff8cfb"/><rect x="1070" fill="#ff86f7"/><rect x="1080" fill="#ff7ef3"/><rect x="1090" fill="#ff76ef"/><rect x="1100" fill="#ff6deb"/><rect x="1110" fill="#ff62e7"/><rect x="1120" fill="#ff55e3"/><rect x="1130" fill="#ff3fe0"/><rect x="1140" fill="#ff3bdb"/><rect x="1150" fill="#ff36d7"/><rect x="1160" fill="#ff31d3"/><rect x="1170" fill="#ff2dcf"/><rect x="1180" fill="#ff28cb"/><rect x="1190" fill="#ff24c7"/><rect x="1200" fill="#ff1fc3"/><rect x="1210" fill="#ff1bbf"/><rect x="1220" fill="#ff17ba"/><rect x="1230" fill="#ff13b6"/><rect x="1240" fill="#ff10b2"/><rect x="1250" fill="#ff0cae"/><rect x="1260" fill="#ff09aa"/><rect x="1270" fill="#ff06a7"/><rect x="1280" fill="#ff04a3"/></g><g transform="translate(0 880)"><rect x="800" fill="#048aff"/><rect x="810" fill="#0689ff"/><rect x="820" fill="#2789ff"/><rect x="830" fill="#4789ff"/><rect x="840" fill="#5c88ff"/><rect x="850" fill="#6c88ff"/><rect x="860" fill="#7a88ff"/><rect x="870" fill="#8788ff"/><rect x="880" fill="#9288ff"/><rect x="890" fill="#9d89ff"/><rect x="900" fill="#a689ff"/><rect x="910" fill="#af89ff"/><rect x="920" fill="#b789ff"/><rect x="930" fill="#bf89ff"/><rect x="940" fill="#c68aff"/><rect x="950" fill="#cd8aff"/><rect x="960" fill="#d389ff"/><rect x="970" fill="#d989ff"/><rect x="980" fill="#df89ff"/><rect x="990" fill="#e488ff"/><rect x="1000" fill="#e986ff"/><rect x="1010" fill="#ee84ff"/><rect x="1020" fill="#f282ff"/><rect x="1030" fill="#f67eff"/><rect x="1040" fill="#fb79ff"/><rect x="1050" fill="#ff73ff"/><rect x="1060" fill="#ff6afb"/><rect x="1070" fill="#ff5cf7"/><rect x="1080" fill="#ff4df4"/><rect x="1090" fill="#ff4af0"/><rect x="1100" fill="#ff47ec"/><rect x="1110" fill="#ff43e8"/><rect x="1120" fill="#ff3fe4"/><rect x="1130" fill="#ff3be0"/><rect x="1140" fill="#ff37dc"/><rect x="1150" fill="#ff33d8"/><rect x="1160" fill="#ff2ed4"/><rect x="1170" fill="#ff2ad0"/><rect x="1180" fill="#ff26cc"/><rect x="1190" fill="#ff21c8"/><rect x="1200" fill="#ff1dc4"/><rect x="1210" fill="#ff19c0"/><rect x="1220" fill="#ff15bc"/></g><g transform="translate(0 890)"><rect x="790" fill="#017cff"/><rect x="800" fill="#037bff"/><rect x="810" fill="#197aff"/><rect x="820" fill="#3e79ff"/><rect x="830" fill="#5479ff"/><rect x="840" fill="#6578ff"/><rect x="850" fill="#7378ff"/><rect x="860" fill="#8077ff"/><rect x="870" fill="#8b77ff"/><rect x="880" fill="#9677ff"/><rect x="890" fill="#9f77ff"/><rect x="900" fill="#a876ff"/><rect x="910" fill="#b176ff"/><rect x="920" fill="#b976ff"/><rect x="930" fill="#c075ff"/><rect x="940" fill="#c774ff"/><rect x="950" fill="#cd73ff"/><rect x="960" fill="#d472ff"/><rect x="970" fill="#d970ff"/><rect x="980" fill="#df6eff"/><rect x="990" fill="#e46bff"/><rect x="1000" fill="#e966ff"/><rect x="1010" fill="#ed5fff"/><rect x="1020" fill="#f251ff"/><rect x="1030" fill="#f64cff"/><rect x="1040" fill="#fa4cff"/><rect x="1050" fill="#fe4cff"/><rect x="1060" fill="#ff4bfc"/><rect x="1070" fill="#ff49f8"/><rect x="1080" fill="#ff47f4"/><rect x="1090" fill="#ff44f0"/><rect x="1100" fill="#ff41ed"/><rect x="1110" fill="#ff3ee9"/><rect x="1120" fill="#ff3be5"/><rect x="1130" fill="#ff37e1"/><rect x="1140" fill="#ff33dd"/><rect x="1150" fill="#ff2fd9"/><rect x="1160" fill="#ff2bd6"/><rect x="1170" fill="#ff27d2"/></g><g transform="translate(0 900)"><rect x="780" fill="#006eff"/><rect x="790" fill="#016cff"/><rect x="800" fill="#076aff"/><rect x="810" fill="#3669ff"/><rect x="820" fill="#4d68ff"/><rect x="830" fill="#5e67ff"/><rect x="840" fill="#6c66ff"/><rect x="850" fill="#7965ff"/><rect x="860" fill="#8464ff"/><rect x="870" fill="#8f63ff"/><rect x="880" fill="#9962ff"/><rect x="890" fill="#a260ff"/><rect x="900" fill="#aa5fff"/><rect x="910" fill="#b25dff"/><rect x="920" fill="#ba5bff"/><rect x="930" fill="#c159ff"/><rect x="940" fill="#c756ff"/><rect x="950" fill="#ce51ff"/><rect x="960" fill="#d449ff"/><rect x="970" fill="#d93aff"/><rect x="980" fill="#de3dff"/><rect x="990" fill="#e340ff"/><rect x="1000" fill="#e842ff"/><rect x="1010" fill="#ed44ff"/><rect x="1020" fill="#f145ff"/><rect x="1030" fill="#f546ff"/><rect x="1040" fill="#f946ff"/><rect x="1050" fill="#fe45ff"/><rect x="1060" fill="#ff45fc"/><rect x="1070" fill="#ff43f9"/><rect x="1080" fill="#ff41f5"/><rect x="1090" fill="#ff3ff1"/><rect x="1100" fill="#ff3ced"/><rect x="1110" fill="#ff39e9"/><rect x="1120" fill="#ff36e6"/></g><g transform="translate(0 910)"><rect x="770" fill="#005fff"/><rect x="780" fill="#005dff"/><rect x="790" fill="#005aff"/><rect x="800" fill="#2e57ff"/><rect x="810" fill="#4555ff"/><rect x="820" fill="#5753ff"/><rect x="830" fill="#6651ff"/><rect x="840" fill="#724fff"/><rect x="850" fill="#7e4cff"/><rect x="860" fill="#894aff"/><rect x="870" fill="#9247ff"/><rect x="880" fill="#9b44ff"/><rect x="890" fill="#a43fff"/><rect x="900" fill="#ac39ff"/><rect x="910" fill="#b42fff"/><rect x="920" fill="#bb25ff"/><rect x="930" fill="#c129ff"/><rect x="940" fill="#c82cff"/><rect x="950" fill="#ce2fff"/><rect x="960" fill="#d432ff"/><rect x="970" fill="#d935ff"/><rect x="980" fill="#de38ff"/><rect x="990" fill="#e33aff"/><rect x="1000" fill="#e83cff"/><rect x="1010" fill="#ec3eff"/><rect x="1020" fill="#f13fff"/><rect x="1030" fill="#f53fff"/><rect x="1040" fill="#f940ff"/><rect x="1050" fill="#fd3fff"/><rect x="1060" fill="#ff3efd"/></g><g transform="translate(0 920)"><rect x="770" fill="#004bff"/><rect x="780" fill="#0047ff"/><rect x="790" fill="#2643ff"/><rect x="800" fill="#3f3fff"/><rect x="810" fill="#513bff"/><rect x="820" fill="#5f37ff"/><rect x="830" fill="#6c32ff"/><rect x="840" fill="#782cff"/><rect x="850" fill="#8223ff"/><rect x="860" fill="#8c13ff"/><rect x="870" fill="#9511ff"/><rect x="880" fill="#9e14ff"/><rect x="890" fill="#a618ff"/><rect x="900" fill="#ad1bff"/><rect x="910" fill="#b51eff"/><rect x="920" fill="#bc21ff"/><rect x="930" fill="#c225ff"/><rect x="940" fill="#c828ff"/><rect x="950" fill="#ce2bff"/><rect x="960" fill="#d42eff"/><rect x="970" fill="#d930ff"/><rect x="980" fill="#de33ff"/><rect x="990" fill="#e335ff"/><rect x="1000" fill="#e737ff"/><rect x="1010" fill="#ec38ff"/></g><g transform="translate(0 930)"><rect x="760" fill="#0035ff"/><rect x="770" fill="#002fff"/><rect x="780" fill="#1f28ff"/><rect x="790" fill="#3a20ff"/><rect x="800" fill="#4b13ff"/><rect x="810" fill="#5a01ff"/><rect x="820" fill="#6603ff"/><rect x="830" fill="#7205ff"/><rect x="840" fill="#7c07ff"/><rect x="850" fill="#8609ff"/><rect x="860" fill="#8f0cff"/><rect x="870" fill="#980fff"/><rect x="880" fill="#a012ff"/><rect x="890" fill="#a815ff"/><rect x="900" fill="#af18ff"/><rect x="910" fill="#b61bff"/><rect x="920" fill="#bc1eff"/><rect x="930" fill="#c321ff"/><rect x="940" fill="#c824ff"/><rect x="950" fill="#ce26ff"/></g><g transform="translate(0 940)"><rect x="760" fill="#0000ff"/><rect x="770" fill="#1700ff"/><rect x="780" fill="#3500ff"/><rect x="790" fill="#4700ff"/><rect x="800" fill="#5500ff"/><rect x="810" fill="#6100ff"/><rect x="820" fill="#6d02ff"/><rect x="830" fill="#7703ff"/><rect x="840" fill="#8105ff"/><rect x="850" fill="#8a07ff"/><rect x="860" fill="#920aff"/><rect x="870" fill="#9a0cff"/><rect x="880" fill="#a20fff"/><rect x="890" fill="#a912ff"/><rect x="900" fill="#b014ff"/></g><g transform="translate(0 950)"><rect x="760" fill="#0b00ff"/><rect x="770" fill="#3000ff"/><rect x="780" fill="#4300ff"/><rect x="790" fill="#5200ff"/><rect x="800" fill="#5e00ff"/><rect x="810" fill="#6800ff"/><rect x="820" fill="#7201ff"/><rect x="830" fill="#7b02ff"/><rect x="840" fill="#8404ff"/><rect x="850" fill="#8d06ff"/></g></g></g><path d="M789.6 968.1 L787.0 967.7 L783.3 967.2 L779.1 966.4 L774.8 965.2 L770.7 963.5 L766.5 961.5 L761.9 959.1 L757.0 956.3 L751.6 953.2 L745.8 949.6 L739.7 945.8 L733.3 941.5 L726.7 936.9 L719.7 932.0 L712.5 926.7 L705.2 920.7 L697.6 913.9 L689.7 906.3 L681.7 898.5 L674.1 891.1 L666.8 884.2 L659.6 877.6 L652.7 871.0 L645.9 864.4 L639.3 857.8 L632.9 851.3 L626.7 844.7 L620.7 837.8 L614.9 830.6 L609.2 823.1 L603.8 815.6 L598.5 808.1 L593.4 800.6 L588.4 793.1 L583.7 785.7 L579.3 778.5 L575.3 771.8 L571.6 765.4 L568.0 758.9 L564.4 751.9 L560.6 744.0 L556.6 735.4 L552.9 727.0 L549.6 719.3 L546.9 713.0 L544.6 707.6 L542.6 702.2 L540.7 695.6 L538.9 687.2 L537.3 677.6 L536.0 668.1 L534.8 660.0 L533.9 653.8 L533.2 648.8 L532.7 644.2 L532.4 639.3 L532.2 633.9 L532.2 628.5 L532.3 622.9 L532.4 617.0 L532.5 610.4 L532.7 603.3 L532.9 596.5 L533.3 591.0 L533.8 587.3 L534.5 584.8 L535.3 582.7 L536.1 580.0 L536.9 576.7 L537.6 573.1 L538.5 569.3 L539.8 565.2 L541.4 560.6 L543.1 555.6 L545.3 550.6 L548.1 545.7 L551.6 541.0 L555.6 536.3 L560.0 531.9 L564.8 528.1 L569.5 525.1 L574.3 522.6 L579.9 520.4 L587.0 518.0 L596.6 515.2 L608.0 512.3 L619.5 509.6 L629.6 507.4 L637.5 506.0 L644.2 505.0 L650.5 504.4 L657.4 504.0 L665.0 503.7 L672.8 503.5 L680.8 503.7 L688.9 504.0 L697.0 504.6 L705.2 505.5 L713.5 506.6 L722.2 507.8 L730.7 509.1 L739.2 510.5 L748.6 512.2 L760.0 514.3 L775.0 517.2 L792.6 520.6 L810.0 524.0 L824.4 527.0 L833.8 529.0 L840.0 530.4 L846.4 532.1 L856.4 534.8 L871.0 538.9 L888.5 543.8 L907.7 549.3 L927.5 555.2 L948.7 561.6 L971.4 568.6 L994.1 575.8 L1015.0 582.5 L1033.7 588.8 L1051.0 594.8 L1067.5 600.7 L1083.6 606.2 L1099.0 611.3 L1113.8 616.1 L1128.2 620.8 L1142.7 625.5 L1157.5 630.4 L1172.2 635.3 L1186.9 640.2 L1201.6 645.1 L1216.3 650.0 L1230.9 654.9 L1245.6 659.8 L1260.1 664.7 L1274.6 669.6 L1289.0 674.4 L1303.3 679.3 L1317.5 684.1 L1331.6 688.8 L1345.6 693.6 L1359.4 698.3 L1373.2 702.9 L1386.7 707.5 L1400.2 712.1 L1413.5 716.6 L1426.6 721.0 L1439.4 725.4 L1452.2 729.6 L1464.6 733.8 L1476.8 738.0 L1488.7 742.0 L1500.4 745.9 L1511.7 749.8 L1522.6 753.5 L1533.1 757.1 L1543.2 760.5 L1552.9 763.8 L1562.4 767.0 L1571.7 770.1 L1580.6 773.1 L1589.2 776.0 L1597.5 778.8 L1605.3 781.5 L1612.7 783.9 L1619.8 786.3 L1626.6 788.6 L1633.0 790.8 L1639.0 792.8 L1644.8 794.8 L1650.2 796.6 L1655.3 798.4 L1660.2 800.0 L1664.7 801.6 L1669.0 803.0 L1673.1 804.4 L1677.0 805.7 L1680.6 806.9 L1684.1 808.1 L1687.4 809.2 L1690.4 810.2 L1693.4 811.2 L1696.2 812.2 L1698.9 813.1 L1701.4 814.0 L1703.9 814.8 L1706.2 815.6 L1708.5 816.4 L1710.6 817.1 L1712.6 817.8 L1714.5 818.4 L1716.4 819.0 L1718.3 819.7 L1720.0 820.2 L1721.1 820.6 Z" fill="none" stroke="#ffbc00" stroke-width="1.4"/><path d="M790 967.5H1890" stroke="#e4007c" stroke-width="2"/><path d="M1581.7 795.0 L1007.0 642.5 L784.0 943.0 Z" fill="none" stroke="#fff" stroke-width="3.2" stroke-linejoin="miter"/><linearGradient id="gGR" gradientUnits="userSpaceOnUse" x1="1012" y1="638" x2="1581" y2="789"><stop offset="0" stop-color="#007800"/><stop offset="0.3" stop-color="#007800"/><stop offset="0.32" stop-color="#6a8000"/><stop offset="0.6" stop-color="#7a8400"/><stop offset="0.61" stop-color="#800000"/><stop offset="1" stop-color="#800000"/></linearGradient><linearGradient id="gBG" gradientUnits="userSpaceOnUse" x1="778" y1="944" x2="1014" y2="645"><stop offset="0" stop-color="#000080"/><stop offset="0.3" stop-color="#006a80"/><stop offset="0.55" stop-color="#808080"/><stop offset="0.7" stop-color="#007070"/><stop offset="0.8" stop-color="#007800"/><stop offset="1" stop-color="#007800"/></linearGradient><linearGradient id="gBR" gradientUnits="userSpaceOnUse" x1="778" y1="944" x2="1581" y2="793"><stop offset="0" stop-color="#000080"/><stop offset="0.35" stop-color="#5a0090"/><stop offset="0.6" stop-color="#800060"/><stop offset="1" stop-color="#800000"/></linearGradient><path d="M1012 636.8L1581 790.6" stroke="url(#gGR)" stroke-width="3.2"/><path d="M777 944L1016 645" stroke="url(#gBG)" stroke-width="3.2"/><path d="M778 941.5L1581 791.3" stroke="url(#gBR)" stroke-width="3.2"/><path d="M402 791.5H1890" stroke="#d0d0d0" stroke-width="1" stroke-dasharray="5 4"/><path d="M1043.5 443V1005" stroke="#d0d0d0" stroke-width="1" stroke-dasharray="5 4"/><path d="M1040 798.5L1590 796" stroke="#404040" stroke-width="1.2" stroke-dasharray="5 4"/><path d="M778 944L1040 800" stroke="#404040" stroke-width="1" stroke-dasharray="4 5"/><path d="M937 840 C975 822 1010 806 1054 791 S1120 770 1158 762 S1230 748 1251 746 S1290 742 1303 742" fill="none" stroke="#000" stroke-width="1.6"/><circle cx="1004" cy="812" r="3.3" fill="#fff" stroke="#000" stroke-width="1"/><circle cx="1079" cy="782" r="3.3" fill="#fff" stroke="#000" stroke-width="1"/><circle cx="1158" cy="762" r="3.3" fill="#fff" stroke="#000" stroke-width="1"/><circle cx="1251" cy="746" r="3.3" fill="#fff" stroke="#000" stroke-width="1"/><circle cx="1288" cy="743" r="3.3" fill="#fff" stroke="#000" stroke-width="1"/><circle cx="1102" cy="779" r="3.3" fill="#00e000" stroke="#004000" stroke-width="0.8"/><circle cx="1266" cy="747" r="3.3" fill="#00e000" stroke="#004000" stroke-width="0.8"/><circle cx="1032" cy="795" r="3.3" fill="#00e000" stroke="#004000" stroke-width="0.8"/><text x="1051" y="776" font-size="13" fill="#1a1a1a">5500</text><text x="1129" y="756" font-size="13" fill="#1a1a1a">4000</text><text x="1225" y="740" font-size="13" fill="#1a1a1a">3000</text><text x="1287" y="737" font-size="13" fill="#1a1a1a">2700</text><text x="1010" y="792" font-size="13" fill="#1a1a1a">D65</text><text x="1268" y="765" font-size="13" fill="#1a1a1a">A</text><text x="1105" y="796" font-size="13" fill="#1a1a1a">B</text><text x="1050" y="811" font-size="13" fill="#1a1a1a">C</text><rect x="1096.1" y="785.0" style="width:13px;height:13px" fill="none" stroke="#ff0000" stroke-width="2.8"/><path d="M1095.1 798.0V784.0H1109.1" fill="none" stroke="#000070" stroke-width="1.2"/><path d="M1110.1 785.0V799.0H1096.1" fill="none" stroke="#ff1040" stroke-width="1.2"/><rect x="1153.1" y="785.0" style="width:13px;height:13px" fill="none" stroke="#ff0000" stroke-width="2.8"/><path d="M1152.1 798.0V784.0H1166.1" fill="none" stroke="#000070" stroke-width="1.2"/><path d="M1167.1 785.0V799.0H1153.1" fill="none" stroke="#ff1040" stroke-width="1.2"/><rect x="1214.2" y="785.0" style="width:13px;height:13px" fill="none" stroke="#ff0000" stroke-width="2.8"/><path d="M1213.2 798.0V784.0H1227.2" fill="none" stroke="#000070" stroke-width="1.2"/><path d="M1228.2 785.0V799.0H1214.2" fill="none" stroke="#ff1040" stroke-width="1.2"/><rect x="1269.9" y="785.0" style="width:13px;height:13px" fill="none" stroke="#ff0000" stroke-width="2.8"/><path d="M1268.9 798.0V784.0H1282.9" fill="none" stroke="#000070" stroke-width="1.2"/><path d="M1283.9 785.0V799.0H1269.9" fill="none" stroke="#ff1040" stroke-width="1.2"/><rect x="1329.0" y="785.0" style="width:13px;height:13px" fill="none" stroke="#ff0000" stroke-width="2.8"/><path d="M1328.0 798.0V784.0H1342.0" fill="none" stroke="#000070" stroke-width="1.2"/><path d="M1343.0 785.0V799.0H1329.0" fill="none" stroke="#ff1040" stroke-width="1.2"/><rect x="1386.0" y="785.0" style="width:13px;height:13px" fill="none" stroke="#ff0000" stroke-width="2.8"/><path d="M1385.0 798.0V784.0H1399.0" fill="none" stroke="#000070" stroke-width="1.2"/><path d="M1400.0 785.0V799.0H1386.0" fill="none" stroke="#ff1040" stroke-width="1.2"/><rect x="1439.9" y="785.0" style="width:13px;height:13px" fill="none" stroke="#ff0000" stroke-width="2.8"/><path d="M1438.9 798.0V784.0H1452.9" fill="none" stroke="#000070" stroke-width="1.2"/><path d="M1453.9 785.0V799.0H1439.9" fill="none" stroke="#ff1040" stroke-width="1.2"/><rect x="1488.6" y="785.0" style="width:13px;height:13px" fill="none" stroke="#ff0000" stroke-width="2.8"/><path d="M1487.6 798.0V784.0H1501.6" fill="none" stroke="#000070" stroke-width="1.2"/><path d="M1502.6 785.0V799.0H1488.6" fill="none" stroke="#ff1040" stroke-width="1.2"/><rect x="1535.5" y="785.0" style="width:13px;height:13px" fill="none" stroke="#ff0000" stroke-width="2.8"/><path d="M1534.5 798.0V784.0H1548.5" fill="none" stroke="#000070" stroke-width="1.2"/><path d="M1549.5 785.0V799.0H1535.5" fill="none" stroke="#ff1040" stroke-width="1.2"/><rect x="1578.0" y="785.0" style="width:13px;height:13px" fill="none" stroke="#ff0000" stroke-width="2.8"/><path d="M1577.0 798.0V784.0H1591.0" fill="none" stroke="#000070" stroke-width="1.2"/><path d="M1592.0 785.0V799.0H1578.0" fill="none" stroke="#ff1040" stroke-width="1.2"/><rect x="1056.5" y="774.9" style="width:13px;height:13px" fill="rgba(255,255,160,0.6)" stroke="#ffe000" stroke-width="2.8"/><path d="M1055.5 787.9V773.9H1069.5" fill="none" stroke="#000070" stroke-width="1.2"/><path d="M1070.5 774.9V788.9H1056.5" fill="none" stroke="#ff1040" stroke-width="1.2"/><rect x="1074.5" y="763.8" style="width:13px;height:13px" fill="rgba(255,255,160,0.6)" stroke="#ffe000" stroke-width="2.8"/><path d="M1073.5 776.8V762.8H1087.5" fill="none" stroke="#000070" stroke-width="1.2"/><path d="M1088.5 763.8V777.8H1074.5" fill="none" stroke="#ff1040" stroke-width="1.2"/><rect x="1092.5" y="754.1" style="width:13px;height:13px" fill="rgba(255,255,160,0.6)" stroke="#ffe000" stroke-width="2.8"/><path d="M1091.5 767.1V753.1H1105.5" fill="none" stroke="#000070" stroke-width="1.2"/><path d="M1106.5 754.1V768.1H1092.5" fill="none" stroke="#ff1040" stroke-width="1.2"/><rect x="1112.1" y="742.9" style="width:13px;height:13px" fill="rgba(255,255,160,0.6)" stroke="#ffe000" stroke-width="2.8"/><path d="M1111.1 755.9V741.9H1125.1" fill="none" stroke="#000070" stroke-width="1.2"/><path d="M1126.1 742.9V756.9H1112.1" fill="none" stroke="#ff1040" stroke-width="1.2"/><rect x="1130.2" y="732.5" style="width:13px;height:13px" fill="rgba(255,255,160,0.6)" stroke="#ffe000" stroke-width="2.8"/><path d="M1129.2 745.5V731.5H1143.2" fill="none" stroke="#000070" stroke-width="1.2"/><path d="M1144.2 732.5V746.5H1130.2" fill="none" stroke="#ff1040" stroke-width="1.2"/><rect x="1148.2" y="722.8" style="width:13px;height:13px" fill="rgba(255,255,160,0.6)" stroke="#ffe000" stroke-width="2.8"/><path d="M1147.2 735.8V721.8H1161.2" fill="none" stroke="#000070" stroke-width="1.2"/><path d="M1162.2 722.8V736.8H1148.2" fill="none" stroke="#ff1040" stroke-width="1.2"/><rect x="1164.9" y="713.1" style="width:13px;height:13px" fill="rgba(255,255,160,0.6)" stroke="#ffe000" stroke-width="2.8"/><path d="M1163.9 726.1V712.1H1177.9" fill="none" stroke="#000070" stroke-width="1.2"/><path d="M1178.9 713.1V727.1H1164.9" fill="none" stroke="#ff1040" stroke-width="1.2"/><rect x="1183.5" y="702.5" style="width:13px;height:13px" fill="rgba(255,255,160,0.6)" stroke="#ffe000" stroke-width="2.8"/><path d="M1182.5 715.5V701.5H1196.5" fill="none" stroke="#000070" stroke-width="1.2"/><path d="M1197.5 702.5V716.5H1183.5" fill="none" stroke="#ff1040" stroke-width="1.2"/><rect x="1198.9" y="693.5" style="width:13px;height:13px" fill="rgba(255,255,160,0.6)" stroke="#ffe000" stroke-width="2.8"/><path d="M1197.9 706.5V692.5H1211.9" fill="none" stroke="#000070" stroke-width="1.2"/><path d="M1212.9 693.5V707.5H1198.9" fill="none" stroke="#ff1040" stroke-width="1.2"/><rect x="1212.8" y="686.0" style="width:13px;height:13px" fill="rgba(255,255,160,0.6)" stroke="#ffe000" stroke-width="2.8"/><path d="M1211.8 699.0V685.0H1225.8" fill="none" stroke="#000070" stroke-width="1.2"/><path d="M1226.8 686.0V700.0H1212.8" fill="none" stroke="#ff1040" stroke-width="1.2"/><rect x="1033.5" y="767.5" style="width:13px;height:13px" fill="rgba(120,240,120,0.7)" stroke="#40f000" stroke-width="2.8"/><path d="M1032.5 780.5V766.5H1046.5" fill="none" stroke="#000070" stroke-width="1.2"/><path d="M1047.5 767.5V781.5H1033.5" fill="none" stroke="#ff1040" stroke-width="1.2"/><rect x="1031.5" y="751.5" style="width:13px;height:13px" fill="rgba(120,240,120,0.7)" stroke="#40f000" stroke-width="2.8"/><path d="M1030.5 764.5V750.5H1044.5" fill="none" stroke="#000070" stroke-width="1.2"/><path d="M1045.5 751.5V765.5H1031.5" fill="none" stroke="#ff1040" stroke-width="1.2"/><rect x="1029.5" y="735.5" style="width:13px;height:13px" fill="rgba(120,240,120,0.7)" stroke="#40f000" stroke-width="2.8"/><path d="M1028.5 748.5V734.5H1042.5" fill="none" stroke="#000070" stroke-width="1.2"/><path d="M1043.5 735.5V749.5H1029.5" fill="none" stroke="#ff1040" stroke-width="1.2"/><rect x="1027.6" y="719.5" style="width:13px;height:13px" fill="rgba(120,240,120,0.7)" stroke="#40f000" stroke-width="2.8"/><path d="M1026.6 732.5V718.5H1040.6" fill="none" stroke="#000070" stroke-width="1.2"/><path d="M1041.6 719.5V733.5H1027.6" fill="none" stroke="#ff1040" stroke-width="1.2"/><rect x="1024.8" y="704.1" style="width:13px;height:13px" fill="rgba(120,240,120,0.7)" stroke="#40f000" stroke-width="2.8"/><path d="M1023.8 717.1V703.1H1037.8" fill="none" stroke="#000070" stroke-width="1.2"/><path d="M1038.8 704.1V718.1H1024.8" fill="none" stroke="#ff1040" stroke-width="1.2"/><rect x="1022.5999999999999" y="689.1" style="width:13px;height:13px" fill="rgba(120,240,120,0.7)" stroke="#40f000" stroke-width="2.8"/><path d="M1021.5999999999999 702.1V688.1H1035.6" fill="none" stroke="#000070" stroke-width="1.2"/><path d="M1036.6 689.1V703.1H1022.5999999999999" fill="none" stroke="#ff1040" stroke-width="1.2"/><rect x="1020.9000000000001" y="672.9" style="width:13px;height:13px" fill="rgba(120,240,120,0.7)" stroke="#40f000" stroke-width="2.8"/><path d="M1019.9000000000001 685.9V671.9H1033.9" fill="none" stroke="#000070" stroke-width="1.2"/><path d="M1034.9 672.9V686.9H1020.9000000000001" fill="none" stroke="#ff1040" stroke-width="1.2"/><rect x="1018.7" y="659.1" style="width:13px;height:13px" fill="rgba(120,240,120,0.7)" stroke="#40f000" stroke-width="2.8"/><path d="M1017.7 672.1V658.1H1031.7" fill="none" stroke="#000070" stroke-width="1.2"/><path d="M1032.7 659.1V673.1H1018.7" fill="none" stroke="#ff1040" stroke-width="1.2"/><rect x="1017.1" y="645.5" style="width:13px;height:13px" fill="rgba(120,240,120,0.7)" stroke="#40f000" stroke-width="2.8"/><path d="M1016.1 658.5V644.5H1030.1" fill="none" stroke="#000070" stroke-width="1.2"/><path d="M1031.1 645.5V659.5H1017.1" fill="none" stroke="#ff1040" stroke-width="1.2"/><rect x="1015.9" y="632.9" style="width:13px;height:13px" fill="rgba(120,240,120,0.7)" stroke="#40f000" stroke-width="2.8"/><path d="M1014.9 645.9V631.9H1028.9" fill="none" stroke="#000070" stroke-width="1.2"/><path d="M1029.9 632.9V646.9H1015.9" fill="none" stroke="#ff1040" stroke-width="1.2"/><rect x="890.3" y="785.5" style="width:13px;height:13px" fill="rgba(200,255,255,0.6)" stroke="#40ffff" stroke-width="2.8"/><path d="M889.3 798.5V784.5H903.3" fill="none" stroke="#000070" stroke-width="1.2"/><path d="M904.3 785.5V799.5H890.3" fill="none" stroke="#ff1040" stroke-width="1.2"/><rect x="903.7" y="785.5" style="width:13px;height:13px" fill="rgba(200,255,255,0.6)" stroke="#40ffff" stroke-width="2.8"/><path d="M902.7 798.5V784.5H916.7" fill="none" stroke="#000070" stroke-width="1.2"/><path d="M917.7 785.5V799.5H903.7" fill="none" stroke="#ff1040" stroke-width="1.2"/><rect x="916.9" y="785.5" style="width:13px;height:13px" fill="rgba(200,255,255,0.6)" stroke="#40ffff" stroke-width="2.8"/><path d="M915.9 798.5V784.5H929.9" fill="none" stroke="#000070" stroke-width="1.2"/><path d="M930.9 785.5V799.5H916.9" fill="none" stroke="#ff1040" stroke-width="1.2"/><rect x="930.3" y="785.5" style="width:13px;height:13px" fill="rgba(200,255,255,0.6)" stroke="#40ffff" stroke-width="2.8"/><path d="M929.3 798.5V784.5H943.3" fill="none" stroke="#000070" stroke-width="1.2"/><path d="M944.3 785.5V799.5H930.3" fill="none" stroke="#ff1040" stroke-width="1.2"/><rect x="945.2" y="785.5" style="width:13px;height:13px" fill="rgba(200,255,255,0.6)" stroke="#40ffff" stroke-width="2.8"/><path d="M944.2 798.5V784.5H958.2" fill="none" stroke="#000070" stroke-width="1.2"/><path d="M959.2 785.5V799.5H945.2" fill="none" stroke="#ff1040" stroke-width="1.2"/><rect x="960.1" y="785.5" style="width:13px;height:13px" fill="rgba(200,255,255,0.6)" stroke="#40ffff" stroke-width="2.8"/><path d="M959.1 798.5V784.5H973.1" fill="none" stroke="#000070" stroke-width="1.2"/><path d="M974.1 785.5V799.5H960.1" fill="none" stroke="#ff1040" stroke-width="1.2"/><rect x="975.0" y="785.5" style="width:13px;height:13px" fill="rgba(200,255,255,0.6)" stroke="#40ffff" stroke-width="2.8"/><path d="M974.0 798.5V784.5H988.0" fill="none" stroke="#000070" stroke-width="1.2"/><path d="M989.0 785.5V799.5H975.0" fill="none" stroke="#ff1040" stroke-width="1.2"/><rect x="989.2" y="785.5" style="width:13px;height:13px" fill="rgba(200,255,255,0.6)" stroke="#40ffff" stroke-width="2.8"/><path d="M988.2 798.5V784.5H1002.2" fill="none" stroke="#000070" stroke-width="1.2"/><path d="M1003.2 785.5V799.5H989.2" fill="none" stroke="#ff1040" stroke-width="1.2"/><rect x="1006.1" y="785.5" style="width:13px;height:13px" fill="rgba(200,255,255,0.6)" stroke="#40ffff" stroke-width="2.8"/><path d="M1005.1 798.5V784.5H1019.1" fill="none" stroke="#000070" stroke-width="1.2"/><path d="M1020.1 785.5V799.5H1006.1" fill="none" stroke="#ff1040" stroke-width="1.2"/><rect x="1019.0" y="785.5" style="width:13px;height:13px" fill="rgba(200,255,255,0.6)" stroke="#40ffff" stroke-width="2.8"/><path d="M1018.0 798.5V784.5H1032.0" fill="none" stroke="#000070" stroke-width="1.2"/><path d="M1033.0 785.5V799.5H1019.0" fill="none" stroke="#ff1040" stroke-width="1.2"/><rect x="766.3" y="935.7" style="width:13px;height:13px" fill="none" stroke="#6a20ff" stroke-width="2.8"/><path d="M765.3 948.7V934.7H779.3" fill="none" stroke="#000070" stroke-width="1.2"/><path d="M780.3 935.7V949.7H766.3" fill="none" stroke="#ff1040" stroke-width="1.2"/><rect x="787.7" y="922.8" style="width:13px;height:13px" fill="none" stroke="#6a20ff" stroke-width="2.8"/><path d="M786.7 935.8V921.8H800.7" fill="none" stroke="#000070" stroke-width="1.2"/><path d="M801.7 922.8V936.8H787.7" fill="none" stroke="#ff1040" stroke-width="1.2"/><rect x="811.4" y="909.8" style="width:13px;height:13px" fill="none" stroke="#6a20ff" stroke-width="2.8"/><path d="M810.4 922.8V908.8H824.4" fill="none" stroke="#000070" stroke-width="1.2"/><path d="M825.4 909.8V923.8H811.4" fill="none" stroke="#ff1040" stroke-width="1.2"/><rect x="837.6" y="896.2" style="width:13px;height:13px" fill="none" stroke="#6a20ff" stroke-width="2.8"/><path d="M836.6 909.2V895.2H850.6" fill="none" stroke="#000070" stroke-width="1.2"/><path d="M851.6 896.2V910.2H837.6" fill="none" stroke="#ff1040" stroke-width="1.2"/><rect x="863.1" y="881.0" style="width:13px;height:13px" fill="none" stroke="#6a20ff" stroke-width="2.8"/><path d="M862.1 894.0V880.0H876.1" fill="none" stroke="#000070" stroke-width="1.2"/><path d="M877.1 881.0V895.0H863.1" fill="none" stroke="#ff1040" stroke-width="1.2"/><rect x="890.9" y="865.8" style="width:13px;height:13px" fill="none" stroke="#6a20ff" stroke-width="2.8"/><path d="M889.9 878.8V864.8H903.9" fill="none" stroke="#000070" stroke-width="1.2"/><path d="M904.9 865.8V879.8H890.9" fill="none" stroke="#ff1040" stroke-width="1.2"/><rect x="922.3" y="848.1" style="width:13px;height:13px" fill="none" stroke="#6a20ff" stroke-width="2.8"/><path d="M921.3 861.1V847.1H935.3" fill="none" stroke="#000070" stroke-width="1.2"/><path d="M936.3 848.1V862.1H922.3" fill="none" stroke="#ff1040" stroke-width="1.2"/><rect x="950.5" y="833.3" style="width:13px;height:13px" fill="none" stroke="#6a20ff" stroke-width="2.8"/><path d="M949.5 846.3V832.3H963.5" fill="none" stroke="#000070" stroke-width="1.2"/><path d="M964.5 833.3V847.3H950.5" fill="none" stroke="#ff1040" stroke-width="1.2"/><rect x="977.8" y="817.4" style="width:13px;height:13px" fill="none" stroke="#6a20ff" stroke-width="2.8"/><path d="M976.8 830.4V816.4H990.8" fill="none" stroke="#000070" stroke-width="1.2"/><path d="M991.8 817.4V831.4H977.8" fill="none" stroke="#ff1040" stroke-width="1.2"/><rect x="1005.5" y="803.5" style="width:13px;height:13px" fill="none" stroke="#6a20ff" stroke-width="2.8"/><path d="M1004.5 816.5V802.5H1018.5" fill="none" stroke="#000070" stroke-width="1.2"/><path d="M1019.5 803.5V817.5H1005.5" fill="none" stroke="#ff1040" stroke-width="1.2"/><rect x="1039.8" y="805.0" style="width:13px;height:13px" fill="rgba(255,220,255,0.6)" stroke="#ff20ff" stroke-width="2.8"/><path d="M1038.8 818.0V804.0H1052.8" fill="none" stroke="#000070" stroke-width="1.2"/><path d="M1053.8 805.0V819.0H1039.8" fill="none" stroke="#ff1040" stroke-width="1.2"/><rect x="1041.7" y="815.3" style="width:13px;height:13px" fill="rgba(255,220,255,0.6)" stroke="#ff20ff" stroke-width="2.8"/><path d="M1040.7 828.3V814.3H1054.7" fill="none" stroke="#000070" stroke-width="1.2"/><path d="M1055.7 815.3V829.3H1041.7" fill="none" stroke="#ff1040" stroke-width="1.2"/><rect x="1043.7" y="825.1" style="width:13px;height:13px" fill="rgba(255,220,255,0.6)" stroke="#ff20ff" stroke-width="2.8"/><path d="M1042.7 838.1V824.1H1056.7" fill="none" stroke="#000070" stroke-width="1.2"/><path d="M1057.7 825.1V839.1H1043.7" fill="none" stroke="#ff1040" stroke-width="1.2"/><rect x="1045.0" y="834.1" style="width:13px;height:13px" fill="rgba(255,220,255,0.6)" stroke="#ff20ff" stroke-width="2.8"/><path d="M1044.0 847.1V833.1H1058.0" fill="none" stroke="#000070" stroke-width="1.2"/><path d="M1059.0 834.1V848.1H1045.0" fill="none" stroke="#ff1040" stroke-width="1.2"/><rect x="1046.3" y="843.2" style="width:13px;height:13px" fill="rgba(255,220,255,0.6)" stroke="#ff20ff" stroke-width="2.8"/><path d="M1045.3 856.2V842.2H1059.3" fill="none" stroke="#000070" stroke-width="1.2"/><path d="M1060.3 843.2V857.2H1046.3" fill="none" stroke="#ff1040" stroke-width="1.2"/><rect x="1047.5" y="852.9" style="width:13px;height:13px" fill="rgba(255,220,255,0.6)" stroke="#ff20ff" stroke-width="2.8"/><path d="M1046.5 865.9V851.9H1060.5" fill="none" stroke="#000070" stroke-width="1.2"/><path d="M1061.5 852.9V866.9H1047.5" fill="none" stroke="#ff1040" stroke-width="1.2"/><rect x="1048.9" y="863.3" style="width:13px;height:13px" fill="rgba(255,220,255,0.6)" stroke="#ff20ff" stroke-width="2.8"/><path d="M1047.9 876.3V862.3H1061.9" fill="none" stroke="#000070" stroke-width="1.2"/><path d="M1062.9 863.3V877.3H1048.9" fill="none" stroke="#ff1040" stroke-width="1.2"/><rect x="1050.1" y="873.0" style="width:13px;height:13px" fill="rgba(255,220,255,0.6)" stroke="#ff20ff" stroke-width="2.8"/><path d="M1049.1 886.0V872.0H1063.1" fill="none" stroke="#000070" stroke-width="1.2"/><path d="M1064.1 873.0V887.0H1050.1" fill="none" stroke="#ff1040" stroke-width="1.2"/><rect x="1052.1" y="882.7" style="width:13px;height:13px" fill="rgba(255,220,255,0.6)" stroke="#ff20ff" stroke-width="2.8"/><path d="M1051.1 895.7V881.7H1065.1" fill="none" stroke="#000070" stroke-width="1.2"/><path d="M1066.1 882.7V896.7H1052.1" fill="none" stroke="#ff1040" stroke-width="1.2"/><rect x="1155.7" y="769.8" style="width:12px;height:12px" fill="none" stroke="#c09030" stroke-width="2.2"/><rect x="1156.7" y="770.8" style="width:10px;height:10px" fill="none" stroke="#607050" stroke-width="1"/><rect x="1166" y="769.8" style="width:12px;height:12px" fill="none" stroke="#c09030" stroke-width="2.2"/><rect x="1167" y="770.8" style="width:10px;height:10px" fill="none" stroke="#607050" stroke-width="1"/><rect x="1177" y="769.8" style="width:12px;height:12px" fill="none" stroke="#c09030" stroke-width="2.2"/><rect x="1178" y="770.8" style="width:10px;height:10px" fill="none" stroke="#607050" stroke-width="1"/><rect x="1189" y="768" style="width:12px;height:12px" fill="none" stroke="#c09030" stroke-width="2.2"/><rect x="1190" y="769" style="width:10px;height:10px" fill="none" stroke="#607050" stroke-width="1"/><rect x="1200" y="758.7" style="width:12px;height:12px" fill="none" stroke="#c09030" stroke-width="2.2"/><rect x="1201" y="759.7" style="width:10px;height:10px" fill="none" stroke="#607050" stroke-width="1"/><rect x="1219.5" y="751.8" style="width:12px;height:12px" fill="none" stroke="#c09030" stroke-width="2.2"/><rect x="1220.5" y="752.8" style="width:10px;height:10px" fill="none" stroke="#607050" stroke-width="1"/><rect x="1234" y="764" style="width:12px;height:12px" fill="none" stroke="#c09030" stroke-width="2.2"/><rect x="1235" y="765" style="width:10px;height:10px" fill="none" stroke="#607050" stroke-width="1"/><rect x="1269.4" y="753.2" style="width:12px;height:12px" fill="none" stroke="#c09030" stroke-width="2.2"/><rect x="1270.4" y="754.2" style="width:10px;height:10px" fill="none" stroke="#607050" stroke-width="1"/><rect x="1298" y="750.5" style="width:12px;height:12px" fill="none" stroke="#c09030" stroke-width="2.2"/><rect x="1299" y="751.5" style="width:10px;height:10px" fill="none" stroke="#607050" stroke-width="1"/><rect x="1312" y="759.6" style="width:12px;height:12px" fill="none" stroke="#c09030" stroke-width="2.2"/><rect x="1313" y="760.6" style="width:10px;height:10px" fill="none" stroke="#607050" stroke-width="1"/><rect x="1366.3" y="750.5" style="width:12px;height:12px" fill="none" stroke="#c09030" stroke-width="2.2"/><rect x="1367.3" y="751.5" style="width:10px;height:10px" fill="none" stroke="#607050" stroke-width="1"/><rect x="1244" y="766" style="width:12px;height:12px" fill="none" stroke="#c09030" stroke-width="2.2"/><rect x="1245" y="767" style="width:10px;height:10px" fill="none" stroke="#607050" stroke-width="1"/><rect x="1207" y="764" style="width:12px;height:12px" fill="none" stroke="#c09030" stroke-width="2.2"/><rect x="1208" y="765" style="width:10px;height:10px" fill="none" stroke="#607050" stroke-width="1"/><rect x="1224" y="759" style="width:12px;height:12px" fill="none" stroke="#c09030" stroke-width="2.2"/><rect x="1225" y="760" style="width:10px;height:10px" fill="none" stroke="#607050" stroke-width="1"/><radialGradient id="mg0" cx="0.4" cy="0.35" r="0.65"><stop offset="0" stop-color="#f18d8d"/><stop offset="0.35" stop-color="#e41c1c"/><stop offset="0.8" stop-color="#e41c1c"/><stop offset="1" stop-color="#501010"/></radialGradient><circle cx="1081.2" cy="804.0" r="7.9" fill="url(#sh)"/><circle cx="1079.7" cy="801.5" r="6.4" fill="url(#mg0)" stroke="#501010" stroke-opacity="0.75" stroke-width="0.9"/><circle cx="1136.1" cy="807.5" r="7.9" fill="url(#sh)"/><circle cx="1134.6" cy="805" r="6.4" fill="url(#mg0)" stroke="#501010" stroke-opacity="0.75" stroke-width="0.9"/><circle cx="1196.5" cy="806.1" r="7.9" fill="url(#sh)"/><circle cx="1195" cy="803.6" r="6.4" fill="url(#mg0)" stroke="#501010" stroke-opacity="0.75" stroke-width="0.9"/><circle cx="1252.4" cy="802.7" r="7.9" fill="url(#sh)"/><circle cx="1250.9" cy="800.2" r="6.4" fill="url(#mg0)" stroke="#501010" stroke-opacity="0.75" stroke-width="0.9"/><circle cx="1316.3" cy="802.7" r="7.9" fill="url(#sh)"/><circle cx="1314.8" cy="800.2" r="6.4" fill="url(#mg0)" stroke="#501010" stroke-opacity="0.75" stroke-width="0.9"/><circle cx="1376.5" cy="800.0" r="7.9" fill="url(#sh)"/><circle cx="1375" cy="797.5" r="6.4" fill="url(#mg0)" stroke="#501010" stroke-opacity="0.75" stroke-width="0.9"/><circle cx="1429.0" cy="799.8" r="7.9" fill="url(#sh)"/><circle cx="1427.5" cy="797.3" r="6.4" fill="url(#mg0)" stroke="#501010" stroke-opacity="0.75" stroke-width="0.9"/><circle cx="1484.0" cy="798.1" r="7.9" fill="url(#sh)"/><circle cx="1482.5" cy="795.6" r="6.4" fill="url(#mg0)" stroke="#501010" stroke-opacity="0.75" stroke-width="0.9"/><circle cx="1533.3" cy="798.1" r="7.9" fill="url(#sh)"/><circle cx="1531.8" cy="795.6" r="6.4" fill="url(#mg0)" stroke="#501010" stroke-opacity="0.75" stroke-width="0.9"/><circle cx="1584.3" cy="798.1" r="7.9" fill="url(#sh)"/><circle cx="1582.8" cy="795.6" r="6.4" fill="url(#mg0)" stroke="#501010" stroke-opacity="0.75" stroke-width="0.9"/><radialGradient id="mg1" cx="0.4" cy="0.35" r="0.65"><stop offset="0" stop-color="#f7f7cf"/><stop offset="0.35" stop-color="#f0f0a0"/><stop offset="0.8" stop-color="#f0f0a0"/><stop offset="1" stop-color="#505018"/></radialGradient><circle cx="1051.4" cy="795.7" r="7.7" fill="url(#sh)"/><circle cx="1049.9" cy="793.2" r="6.2" fill="url(#mg1)" stroke="#505018" stroke-opacity="0.75" stroke-width="0.9"/><circle cx="1050.4" cy="793.7" r="0.8" fill="#505018" fill-opacity="0.8"/><circle cx="1068.7" cy="784.6" r="7.7" fill="url(#sh)"/><circle cx="1067.2" cy="782.1" r="6.2" fill="url(#mg1)" stroke="#505018" stroke-opacity="0.75" stroke-width="0.9"/><circle cx="1067.7" cy="782.6" r="0.8" fill="#505018" fill-opacity="0.8"/><circle cx="1087.5" cy="773.5" r="7.7" fill="url(#sh)"/><circle cx="1086" cy="771" r="6.2" fill="url(#mg1)" stroke="#505018" stroke-opacity="0.75" stroke-width="0.9"/><circle cx="1086.5" cy="771.5" r="0.8" fill="#505018" fill-opacity="0.8"/><circle cx="1106.2" cy="763.8" r="7.7" fill="url(#sh)"/><circle cx="1104.7" cy="761.3" r="6.2" fill="url(#mg1)" stroke="#505018" stroke-opacity="0.75" stroke-width="0.9"/><circle cx="1105.2" cy="761.8" r="0.8" fill="#505018" fill-opacity="0.8"/><circle cx="1125.7" cy="751.9" r="7.7" fill="url(#sh)"/><circle cx="1124.2" cy="749.4" r="6.2" fill="url(#mg1)" stroke="#505018" stroke-opacity="0.75" stroke-width="0.9"/><circle cx="1124.7" cy="749.9" r="0.8" fill="#505018" fill-opacity="0.8"/><circle cx="1143.0" cy="741.5" r="7.7" fill="url(#sh)"/><circle cx="1141.5" cy="739" r="6.2" fill="url(#mg1)" stroke="#505018" stroke-opacity="0.75" stroke-width="0.9"/><circle cx="1142.0" cy="739.5" r="0.8" fill="#505018" fill-opacity="0.8"/><circle cx="1161.8" cy="732.5" r="7.7" fill="url(#sh)"/><circle cx="1160.3" cy="730" r="6.2" fill="url(#mg1)" stroke="#505018" stroke-opacity="0.75" stroke-width="0.9"/><circle cx="1160.8" cy="730.5" r="0.8" fill="#505018" fill-opacity="0.8"/><circle cx="1182.5" cy="722.1" r="7.7" fill="url(#sh)"/><circle cx="1181" cy="719.6" r="6.2" fill="url(#mg1)" stroke="#505018" stroke-opacity="0.75" stroke-width="0.9"/><circle cx="1181.5" cy="720.1" r="0.8" fill="#505018" fill-opacity="0.8"/><circle cx="1198.5" cy="711.0" r="7.7" fill="url(#sh)"/><circle cx="1197" cy="708.5" r="6.2" fill="url(#mg1)" stroke="#505018" stroke-opacity="0.75" stroke-width="0.9"/><circle cx="1197.5" cy="709.0" r="0.8" fill="#505018" fill-opacity="0.8"/><circle cx="1214.5" cy="699.2" r="7.7" fill="url(#sh)"/><circle cx="1213" cy="696.7" r="6.2" fill="url(#mg1)" stroke="#505018" stroke-opacity="0.75" stroke-width="0.9"/><circle cx="1213.5" cy="697.2" r="0.8" fill="#505018" fill-opacity="0.8"/><radialGradient id="mg2" cx="0.4" cy="0.35" r="0.65"><stop offset="0" stop-color="#87e387"/><stop offset="0.35" stop-color="#10c810"/><stop offset="0.8" stop-color="#10c810"/><stop offset="1" stop-color="#003000"/></radialGradient><circle cx="1033.5" cy="790.5" r="7.7" fill="url(#sh)"/><circle cx="1032" cy="788" r="6.2" fill="url(#mg2)" stroke="#003000" stroke-opacity="0.75" stroke-width="0.9"/><circle cx="1032.5" cy="788.5" r="0.8" fill="#003000" fill-opacity="0.8"/><circle cx="1032.5" cy="773.5" r="7.7" fill="url(#sh)"/><circle cx="1031" cy="771" r="6.2" fill="url(#mg2)" stroke="#003000" stroke-opacity="0.75" stroke-width="0.9"/><circle cx="1031.5" cy="771.5" r="0.8" fill="#003000" fill-opacity="0.8"/><circle cx="1028.5" cy="756.5" r="7.7" fill="url(#sh)"/><circle cx="1027" cy="754" r="6.2" fill="url(#mg2)" stroke="#003000" stroke-opacity="0.75" stroke-width="0.9"/><circle cx="1027.5" cy="754.5" r="0.8" fill="#003000" fill-opacity="0.8"/><circle cx="1027.1" cy="740.3" r="7.7" fill="url(#sh)"/><circle cx="1025.6" cy="737.8" r="6.2" fill="url(#mg2)" stroke="#003000" stroke-opacity="0.75" stroke-width="0.9"/><circle cx="1026.1" cy="738.3" r="0.8" fill="#003000" fill-opacity="0.8"/><circle cx="1023.2" cy="725.3" r="7.7" fill="url(#sh)"/><circle cx="1021.7" cy="722.8" r="6.2" fill="url(#mg2)" stroke="#003000" stroke-opacity="0.75" stroke-width="0.9"/><circle cx="1022.2" cy="723.3" r="0.8" fill="#003000" fill-opacity="0.8"/><circle cx="1020.4" cy="710.8" r="7.7" fill="url(#sh)"/><circle cx="1018.9" cy="708.3" r="6.2" fill="url(#mg2)" stroke="#003000" stroke-opacity="0.75" stroke-width="0.9"/><circle cx="1019.4" cy="708.8" r="0.8" fill="#003000" fill-opacity="0.8"/><circle cx="1016.5" cy="693.5" r="7.7" fill="url(#sh)"/><circle cx="1015" cy="691" r="6.2" fill="url(#mg2)" stroke="#003000" stroke-opacity="0.75" stroke-width="0.9"/><circle cx="1015.5" cy="691.5" r="0.8" fill="#003000" fill-opacity="0.8"/><circle cx="1015.9" cy="677.5" r="7.7" fill="url(#sh)"/><circle cx="1014.4" cy="675" r="6.2" fill="url(#mg2)" stroke="#003000" stroke-opacity="0.75" stroke-width="0.9"/><circle cx="1014.9" cy="675.5" r="0.8" fill="#003000" fill-opacity="0.8"/><circle cx="1011.5" cy="661.4" r="7.7" fill="url(#sh)"/><circle cx="1010" cy="658.9" r="6.2" fill="url(#mg2)" stroke="#003000" stroke-opacity="0.75" stroke-width="0.9"/><circle cx="1010.5" cy="659.4" r="0.8" fill="#003000" fill-opacity="0.8"/><circle cx="1010.4" cy="644.7" r="7.7" fill="url(#sh)"/><circle cx="1008.9" cy="642.2" r="6.2" fill="url(#mg2)" stroke="#003000" stroke-opacity="0.75" stroke-width="0.9"/><circle cx="1009.4" cy="642.7" r="0.8" fill="#003000" fill-opacity="0.8"/><radialGradient id="mg3" cx="0.4" cy="0.35" r="0.65"><stop offset="0" stop-color="#bff6f6"/><stop offset="0.35" stop-color="#80eeee"/><stop offset="0.8" stop-color="#80eeee"/><stop offset="1" stop-color="#204848"/></radialGradient><circle cx="889.0" cy="803.5" r="7.7" fill="url(#sh)"/><circle cx="887.5" cy="801" r="6.2" fill="url(#mg3)" stroke="#204848" stroke-opacity="0.75" stroke-width="0.9"/><circle cx="888.0" cy="801.5" r="0.8" fill="#204848" fill-opacity="0.8"/><circle cx="904.5" cy="803.5" r="7.7" fill="url(#sh)"/><circle cx="903" cy="801" r="6.2" fill="url(#mg3)" stroke="#204848" stroke-opacity="0.75" stroke-width="0.9"/><circle cx="903.5" cy="801.5" r="0.8" fill="#204848" fill-opacity="0.8"/><circle cx="917.5" cy="803.5" r="7.7" fill="url(#sh)"/><circle cx="916" cy="801" r="6.2" fill="url(#mg3)" stroke="#204848" stroke-opacity="0.75" stroke-width="0.9"/><circle cx="916.5" cy="801.5" r="0.8" fill="#204848" fill-opacity="0.8"/><circle cx="930.5" cy="803.5" r="7.7" fill="url(#sh)"/><circle cx="929" cy="801" r="6.2" fill="url(#mg3)" stroke="#204848" stroke-opacity="0.75" stroke-width="0.9"/><circle cx="929.5" cy="801.5" r="0.8" fill="#204848" fill-opacity="0.8"/><circle cx="948.5" cy="803.5" r="7.7" fill="url(#sh)"/><circle cx="947" cy="801" r="6.2" fill="url(#mg3)" stroke="#204848" stroke-opacity="0.75" stroke-width="0.9"/><circle cx="947.5" cy="801.5" r="0.8" fill="#204848" fill-opacity="0.8"/><circle cx="962.2" cy="803.5" r="7.7" fill="url(#sh)"/><circle cx="960.7" cy="801" r="6.2" fill="url(#mg3)" stroke="#204848" stroke-opacity="0.75" stroke-width="0.9"/><circle cx="961.2" cy="801.5" r="0.8" fill="#204848" fill-opacity="0.8"/><circle cx="975.8" cy="803.5" r="7.7" fill="url(#sh)"/><circle cx="974.3" cy="801" r="6.2" fill="url(#mg3)" stroke="#204848" stroke-opacity="0.75" stroke-width="0.9"/><circle cx="974.8" cy="801.5" r="0.8" fill="#204848" fill-opacity="0.8"/><circle cx="992.0" cy="803.5" r="7.7" fill="url(#sh)"/><circle cx="990.5" cy="801" r="6.2" fill="url(#mg3)" stroke="#204848" stroke-opacity="0.75" stroke-width="0.9"/><circle cx="991.0" cy="801.5" r="0.8" fill="#204848" fill-opacity="0.8"/><circle cx="1007.5" cy="803.5" r="7.7" fill="url(#sh)"/><circle cx="1006" cy="801" r="6.2" fill="url(#mg3)" stroke="#204848" stroke-opacity="0.75" stroke-width="0.9"/><circle cx="1006.5" cy="801.5" r="0.8" fill="#204848" fill-opacity="0.8"/><circle cx="1022.5" cy="803.5" r="7.7" fill="url(#sh)"/><circle cx="1021" cy="801" r="6.2" fill="url(#mg3)" stroke="#204848" stroke-opacity="0.75" stroke-width="0.9"/><circle cx="1021.5" cy="801.5" r="0.8" fill="#204848" fill-opacity="0.8"/><radialGradient id="mg4" cx="0.4" cy="0.35" r="0.65"><stop offset="0" stop-color="#9393f3"/><stop offset="0.35" stop-color="#2828e8"/><stop offset="0.8" stop-color="#2828e8"/><stop offset="1" stop-color="#000040"/></radialGradient><circle cx="780.9" cy="946.5" r="7.9" fill="url(#sh)"/><circle cx="779.4" cy="944" r="6.4" fill="url(#mg4)" stroke="#000040" stroke-opacity="0.75" stroke-width="0.9"/><circle cx="801.3" cy="936.2" r="7.9" fill="url(#sh)"/><circle cx="799.8" cy="933.7" r="6.4" fill="url(#mg4)" stroke="#000040" stroke-opacity="0.75" stroke-width="0.9"/><circle cx="824.2" cy="924.4" r="7.9" fill="url(#sh)"/><circle cx="822.7" cy="921.9" r="6.4" fill="url(#mg4)" stroke="#000040" stroke-opacity="0.75" stroke-width="0.9"/><circle cx="849.3" cy="910.3" r="7.9" fill="url(#sh)"/><circle cx="847.8" cy="907.8" r="6.4" fill="url(#mg4)" stroke="#000040" stroke-opacity="0.75" stroke-width="0.9"/><circle cx="870.4" cy="898.5" r="7.9" fill="url(#sh)"/><circle cx="868.9" cy="896" r="6.4" fill="url(#mg4)" stroke="#000040" stroke-opacity="0.75" stroke-width="0.9"/><circle cx="897.4" cy="886.3" r="7.9" fill="url(#sh)"/><circle cx="895.9" cy="883.8" r="6.4" fill="url(#mg4)" stroke="#000040" stroke-opacity="0.75" stroke-width="0.9"/><circle cx="924.8" cy="867.1" r="7.9" fill="url(#sh)"/><circle cx="923.3" cy="864.6" r="6.4" fill="url(#mg4)" stroke="#000040" stroke-opacity="0.75" stroke-width="0.9"/><circle cx="954.0" cy="852.3" r="7.9" fill="url(#sh)"/><circle cx="952.5" cy="849.8" r="6.4" fill="url(#mg4)" stroke="#000040" stroke-opacity="0.75" stroke-width="0.9"/><circle cx="985.1" cy="832.7" r="7.9" fill="url(#sh)"/><circle cx="983.6" cy="830.2" r="6.4" fill="url(#mg4)" stroke="#000040" stroke-opacity="0.75" stroke-width="0.9"/><circle cx="1012.8" cy="817.9" r="7.9" fill="url(#sh)"/><circle cx="1011.3" cy="815.4" r="6.4" fill="url(#mg4)" stroke="#000040" stroke-opacity="0.75" stroke-width="0.9"/><radialGradient id="mg5" cx="0.4" cy="0.35" r="0.65"><stop offset="0" stop-color="#ef87ef"/><stop offset="0.35" stop-color="#e010e0"/><stop offset="0.8" stop-color="#e010e0"/><stop offset="1" stop-color="#480048"/></radialGradient><circle cx="1033.5" cy="811.4" r="8.0" fill="url(#sh)"/><circle cx="1032" cy="808.9" r="6.5" fill="url(#mg5)" stroke="#480048" stroke-opacity="0.75" stroke-width="0.9"/><circle cx="1038.7" cy="823.0" r="8.0" fill="url(#sh)"/><circle cx="1037.2" cy="820.5" r="6.5" fill="url(#mg5)" stroke="#480048" stroke-opacity="0.75" stroke-width="0.9"/><circle cx="1040.0" cy="833.5" r="8.0" fill="url(#sh)"/><circle cx="1038.5" cy="831" r="6.5" fill="url(#mg5)" stroke="#480048" stroke-opacity="0.75" stroke-width="0.9"/><circle cx="1042.5" cy="842.5" r="8.0" fill="url(#sh)"/><circle cx="1041" cy="840" r="6.5" fill="url(#mg5)" stroke="#480048" stroke-opacity="0.75" stroke-width="0.9"/><circle cx="1045.2" cy="851.5" r="8.0" fill="url(#sh)"/><circle cx="1043.7" cy="849" r="6.5" fill="url(#mg5)" stroke="#480048" stroke-opacity="0.75" stroke-width="0.9"/><circle cx="1046.5" cy="861.9" r="8.0" fill="url(#sh)"/><circle cx="1045" cy="859.4" r="6.5" fill="url(#mg5)" stroke="#480048" stroke-opacity="0.75" stroke-width="0.9"/><circle cx="1050.4" cy="871.0" r="8.0" fill="url(#sh)"/><circle cx="1048.9" cy="868.5" r="6.5" fill="url(#mg5)" stroke="#480048" stroke-opacity="0.75" stroke-width="0.9"/><circle cx="1049.1" cy="880.1" r="8.0" fill="url(#sh)"/><circle cx="1047.6" cy="877.6" r="6.5" fill="url(#mg5)" stroke="#480048" stroke-opacity="0.75" stroke-width="0.9"/><circle cx="1053.0" cy="887.9" r="8.0" fill="url(#sh)"/><circle cx="1051.5" cy="885.4" r="6.5" fill="url(#mg5)" stroke="#480048" stroke-opacity="0.75" stroke-width="0.9"/><circle cx="1055.5" cy="895.5" r="8.0" fill="url(#sh)"/><circle cx="1054" cy="893" r="6.5" fill="url(#mg5)" stroke="#480048" stroke-opacity="0.75" stroke-width="0.9"/><radialGradient id="mg6" cx="0.4" cy="0.35" r="0.65"><stop offset="0" stop-color="#ffffff"/><stop offset="0.35" stop-color="#ffffff"/><stop offset="0.8" stop-color="#ffffff"/><stop offset="1" stop-color="#303030"/></radialGradient><circle cx="1032.9" cy="803.5" r="7.7" fill="url(#sh)"/><circle cx="1031.4" cy="801" r="6.2" fill="url(#mg6)" stroke="#303030" stroke-opacity="0.75" stroke-width="0.9"/><circle cx="1147.2" cy="788.5" r="7.7" fill="url(#sh)"/><circle cx="1145.7" cy="786" r="6.2" fill="url(#mg6)" stroke="#303030" stroke-opacity="0.75" stroke-width="0.9"/><circle cx="1159.5" cy="789.5" r="7.7" fill="url(#sh)"/><circle cx="1158" cy="787" r="6.2" fill="url(#mg6)" stroke="#303030" stroke-opacity="0.75" stroke-width="0.9"/><circle cx="1172.2" cy="788.0" r="7.7" fill="url(#sh)"/><circle cx="1170.7" cy="785.5" r="6.2" fill="url(#mg6)" stroke="#303030" stroke-opacity="0.75" stroke-width="0.9"/><circle cx="1181.2" cy="790.1" r="7.7" fill="url(#sh)"/><circle cx="1179.7" cy="787.6" r="6.2" fill="url(#mg6)" stroke="#303030" stroke-opacity="0.75" stroke-width="0.9"/><circle cx="1193.5" cy="774.5" r="7.7" fill="url(#sh)"/><circle cx="1192" cy="772" r="6.2" fill="url(#mg6)" stroke="#303030" stroke-opacity="0.75" stroke-width="0.9"/><circle cx="1193.0" cy="784.5" r="7.7" fill="url(#sh)"/><circle cx="1191.5" cy="782" r="6.2" fill="url(#mg6)" stroke="#303030" stroke-opacity="0.75" stroke-width="0.9"/><circle cx="1213.5" cy="769.3" r="7.7" fill="url(#sh)"/><circle cx="1212" cy="766.8" r="6.2" fill="url(#mg6)" stroke="#303030" stroke-opacity="0.75" stroke-width="0.9"/><circle cx="1215.2" cy="789.5" r="7.7" fill="url(#sh)"/><circle cx="1213.7" cy="787" r="6.2" fill="url(#mg6)" stroke="#303030" stroke-opacity="0.75" stroke-width="0.9"/><circle cx="1222.9" cy="778.3" r="7.7" fill="url(#sh)"/><circle cx="1221.4" cy="775.8" r="6.2" fill="url(#mg6)" stroke="#303030" stroke-opacity="0.75" stroke-width="0.9"/><circle cx="1231.9" cy="782.5" r="7.7" fill="url(#sh)"/><circle cx="1230.4" cy="780" r="6.2" fill="url(#mg6)" stroke="#303030" stroke-opacity="0.75" stroke-width="0.9"/><circle cx="1257.2" cy="769.7" r="7.7" fill="url(#sh)"/><circle cx="1255.7" cy="767.2" r="6.2" fill="url(#mg6)" stroke="#303030" stroke-opacity="0.75" stroke-width="0.9"/><circle cx="1296.0" cy="769.1" r="7.7" fill="url(#sh)"/><circle cx="1294.5" cy="766.6" r="6.2" fill="url(#mg6)" stroke="#303030" stroke-opacity="0.75" stroke-width="0.9"/><circle cx="1301.4" cy="775.5" r="7.7" fill="url(#sh)"/><circle cx="1299.9" cy="773" r="6.2" fill="url(#mg6)" stroke="#303030" stroke-opacity="0.75" stroke-width="0.9"/><circle cx="1363.1" cy="766.0" r="7.7" fill="url(#sh)"/><circle cx="1361.6" cy="763.5" r="6.2" fill="url(#mg6)" stroke="#303030" stroke-opacity="0.75" stroke-width="0.9"/><circle cx="977.1" cy="841.8" r="7.7" fill="url(#sh)"/><circle cx="975.6" cy="839.3" r="6.2" fill="url(#mg6)" stroke="#303030" stroke-opacity="0.75" stroke-width="0.9"/><circle cx="1001.5" cy="821.8" r="7.7" fill="url(#sh)"/><circle cx="1000" cy="819.3" r="6.2" fill="url(#mg6)" stroke="#303030" stroke-opacity="0.75" stroke-width="0.9"/><circle cx="876.0" cy="884.0" r="7.7" fill="url(#sh)"/><circle cx="874.5" cy="881.5" r="6.2" fill="url(#mg6)" stroke="#303030" stroke-opacity="0.75" stroke-width="0.9"/><circle cx="1184.5" cy="785.5" r="7.7" fill="url(#sh)"/><circle cx="1183" cy="783" r="6.2" fill="url(#mg6)" stroke="#303030" stroke-opacity="0.75" stroke-width="0.9"/><text x="404" y="916" font-size="13" textLength="17" lengthAdjust="spacingAndGlyphs" fill="#eaeaea">0.1</text><text x="404" y="860" font-size="13" textLength="17" lengthAdjust="spacingAndGlyphs" fill="#eaeaea">0.2</text><text x="404" y="804" font-size="13" textLength="17" lengthAdjust="spacingAndGlyphs" fill="#eaeaea">0.3</text><text x="404" y="748" font-size="13" textLength="17" lengthAdjust="spacingAndGlyphs" fill="#eaeaea">0.4</text><text x="404" y="691" font-size="13" textLength="17" lengthAdjust="spacingAndGlyphs" fill="#eaeaea">0.5</text><text x="404" y="635" font-size="13" textLength="17" lengthAdjust="spacingAndGlyphs" fill="#eaeaea">0.6</text><text x="404" y="579" font-size="13" textLength="17" lengthAdjust="spacingAndGlyphs" fill="#eaeaea">0.7</text><text x="404" y="523" font-size="13" textLength="17" lengthAdjust="spacingAndGlyphs" fill="#eaeaea">0.8</text><text x="693" y="1001" font-size="13" textLength="16.5" lengthAdjust="spacingAndGlyphs" fill="#eaeaea">0.1</text><text x="859" y="1001" font-size="13" textLength="16.5" lengthAdjust="spacingAndGlyphs" fill="#eaeaea">0.2</text><text x="1024" y="1001" font-size="13" textLength="16.5" lengthAdjust="spacingAndGlyphs" fill="#eaeaea">0.3</text><text x="1189" y="1001" font-size="13" textLength="16.5" lengthAdjust="spacingAndGlyphs" fill="#eaeaea">0.4</text><text x="1354" y="1001" font-size="13" textLength="16.5" lengthAdjust="spacingAndGlyphs" fill="#eaeaea">0.5</text><text x="1520" y="1001" font-size="13" textLength="16.5" lengthAdjust="spacingAndGlyphs" fill="#eaeaea">0.6</text><text x="1685" y="1001" font-size="13" textLength="16.5" lengthAdjust="spacingAndGlyphs" fill="#eaeaea">0.7</text><path d="M680.3 503.7L711 482.7" stroke="#d8d8d8" stroke-width="1"/><text x="712.6" y="486.5" font-size="13.5" textLength="65" lengthAdjust="spacingAndGlyphs" fill="#f0f0f0">520 nm</text><path d="M928.9 554.4L959.6 534.3" stroke="#d8d8d8" stroke-width="1"/><text x="960" y="538.0999999999999" font-size="13.5" textLength="65" lengthAdjust="spacingAndGlyphs" fill="#f0f0f0">540 nm</text><path d="M1155.6 628L1187.5 607.2" stroke="#d8d8d8" stroke-width="1"/><text x="1187.5" y="611.0" font-size="13.5" textLength="65" lengthAdjust="spacingAndGlyphs" fill="#f0f0f0">560 nm</text><path d="M1316.7 682.2L1348.6 660" stroke="#d8d8d8" stroke-width="1"/><text x="1348.6" y="664.8" font-size="13.5" textLength="65" lengthAdjust="spacingAndGlyphs" fill="#f0f0f0">580 nm</text><path d="M1426.3 720.3L1456.8 698.3" stroke="#d8d8d8" stroke-width="1"/><text x="1456.8" y="702.8" font-size="13.5" textLength="65" lengthAdjust="spacingAndGlyphs" fill="#f0f0f0">600 nm</text><path d="M1530.2 755.3L1562.8 733.7" stroke="#d8d8d8" stroke-width="1"/><text x="1562.8" y="738.3" font-size="13.5" textLength="65" lengthAdjust="spacingAndGlyphs" fill="#f0f0f0">620 nm</text><path d="M1644.2 794L1674.8 771.6" stroke="#d8d8d8" stroke-width="1"/><text x="1674.8" y="776.1999999999999" font-size="13.5" textLength="65" lengthAdjust="spacingAndGlyphs" fill="#f0f0f0">640 nm</text><path d="M1691 810.3L1723.6 789" stroke="#d8d8d8" stroke-width="1"/><text x="1723.6" y="793.8" font-size="13.5" textLength="65" lengthAdjust="spacingAndGlyphs" fill="#f0f0f0">660 nm</text><path d="M1713.5 819.2L1744 796.8" stroke="#d8d8d8" stroke-width="1"/><text x="1744" y="800.5999999999999" font-size="13.5" textLength="65" lengthAdjust="spacingAndGlyphs" fill="#f0f0f0">680 nm</text><path d="M531.8 644.8L502.7 649.6" stroke="#d8d8d8" stroke-width="1"/><text x="447.8" y="659.8" font-size="13.5" textLength="65" lengthAdjust="spacingAndGlyphs" fill="#f0f0f0">500 nm</text><path d="M656.3 877.5L626.7 882" stroke="#d8d8d8" stroke-width="1"/><text x="573" y="892.8" font-size="13.5" textLength="65" lengthAdjust="spacingAndGlyphs" fill="#f0f0f0">480 nm</text><path d="M730 940.4L700.6 944.8" stroke="#d8d8d8" stroke-width="1"/><text x="645" y="956.4" font-size="13.5" textLength="65" lengthAdjust="spacingAndGlyphs" fill="#f0f0f0">460 nm</text><path d="M754.3 955.2L722.8 960.7" stroke="#d8d8d8" stroke-width="1"/><text x="670" y="970.8" font-size="13.5" textLength="65" lengthAdjust="spacingAndGlyphs" fill="#f0f0f0">440 nm</text><path d="M767 963.3L739.5 968" stroke="#d8d8d8" stroke-width="1"/><text x="686" y="978.5999999999999" font-size="13.5" textLength="65" lengthAdjust="spacingAndGlyphs" fill="#f0f0f0">420 nm</text><text x="1880" y="944" text-anchor="end" font-family="Liberation Sans" font-weight="bold" font-size="15.5" fill="#4b4b4b">hcfr.sourceforge.net</text></svg></div><div class="a" style="left:0;top:1020px;width:1905px;height:21px;background:#f0f0f0"></div><div class="a" style="left:19px;top:1030px;width:1824px;height:2px;background:#8c8c8c;border-bottom:1px solid #fff"></div><div class="a" style="left:0;top:1042px;width:1920px;height:19px;background:#f0f0f0;border-top:1px solid #000"></div><div class="a" style="left:0;top:1043px;width:54px;height:18px;background:#f0f0f0;border-right:2px solid #333;border-bottom:2px solid #333"></div><div class="a" style="left:17px;top:1043px;width:1px;height:17px;background:#333"></div><div class="a" style="left:35px;top:1043px;width:1px;height:17px;background:#333"></div><svg class="a" style="left:4px;top:1047px" width="10" height="10"><path d="M1 1L9 9M9 1L1 9" stroke="#111" stroke-width="1.4"/></svg><svg class="a" style="left:23px;top:1048px" width="5" height="8"><path d="M5 0V8L0 4Z" fill="#111"/></svg><svg class="a" style="left:41px;top:1048px" width="5" height="8"><path d="M0 0V8L5 4Z" fill="#111"/></svg><svg class="a" style="left:0;top:1042px" width="400" height="20" viewBox="0 1042 400 20"><g stroke="#222" stroke-width="1" fill="#f0f0f0"><path d="M120 1042.5L128 1060.5H197L204 1042.5"/><path d="M196 1042.5L204 1060.5H302L309 1042.5"/><path d="M301 1042.5L309 1060.5H376L384 1042.5"/><path d="M54 1042.5L62.5 1060.5H120L127.5 1042.5" fill="#ffffff"/></g><path d="M0 1042.5H400" stroke="#000" stroke-width="1"/><path d="M55 1042.5H127" stroke="#fff" stroke-width="1"/></svg><div class="a" style="left:66px;top:1045px;font-weight:bold;font-size:11.5px;color:#111;letter-spacing:-0.2px">Measures</div><div class="a" style="left:135px;top:1045px;font-size:9.8px;color:#111;letter-spacing:0px">CIE Diagram</div><div class="a" style="left:216px;top:1045px;font-size:9.8px;color:#111;letter-spacing:0px">Color temperature</div><div class="a" style="left:318px;top:1045px;font-size:9.8px;color:#111;letter-spacing:0px">RGB Levels</div><svg class="a" style="left:1750px;top:1043px" width="16" height="16"><path d="M2 2H14V10L8 15L2 10Z" fill="#d0c030" stroke="#706010"/><rect x="4" y="4" width="8" height="5" fill="#e03030"/></svg><div class="cb" style="left:1846px;top:1045px;width:12px;height:12px;border-color:#555"></div><div class="a" style="left:1864px;top:1044px;font-size:12px;color:#111">Reference</div><div class="a" style="left:0;top:1061px;width:1920px;height:19px;background:#e6edf7"></div><div class="a" style="left:3px;top:1064px;font-size:11px;color:#111">Ready</div><div class="a" style="left:1743px;top:1063px;width:74px;height:17px;border:1px solid #b8c4d4;border-bottom:none"></div><div class="a" style="left:1820px;top:1063px;width:28px;height:17px;border:1px solid #b8c4d4;border-bottom:none"></div><div class="a" style="left:1851px;top:1063px;width:37px;height:17px;border:1px solid #b8c4d4;border-bottom:none"></div><div class="a" style="left:1891px;top:1063px;width:29px;height:17px;border:1px solid #b8c4d4;border-bottom:none"></div><div class="a" style="left:1853px;top:1064px;font-size:12.5px;color:#111">NUM</div></body></html>
